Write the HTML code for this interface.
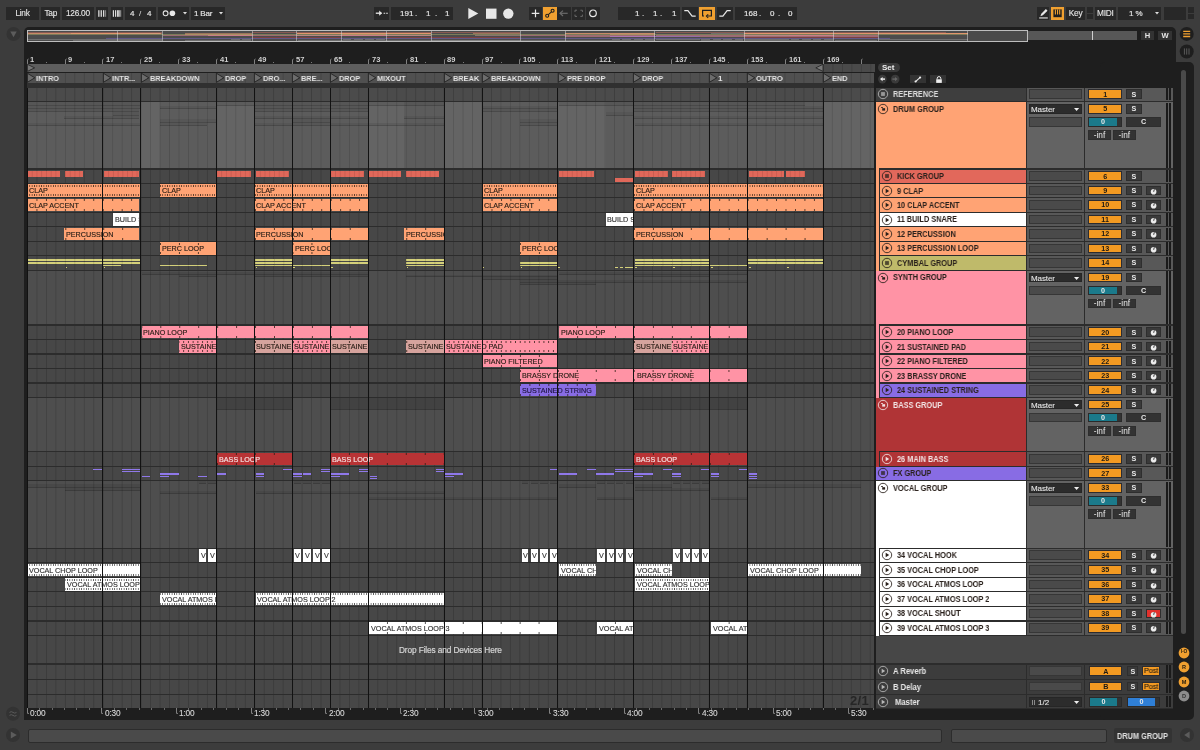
<!DOCTYPE html><html><head><meta charset="utf-8"><style>
*{margin:0;padding:0;box-sizing:border-box}
html,body{width:1200px;height:750px;overflow:hidden;background:#3c3c3c;font-family:"Liberation Sans",sans-serif}
.a{position:absolute}
.t{position:absolute;white-space:nowrap;line-height:1;will-change:transform}
svg{position:absolute;overflow:visible}
</style></head><body><div class="a" style="left:6.00px;top:7.20px;width:33.00px;height:12.40px;background:#282828;"><div class="t" style="top:1.80px;font-size:8.3px;color:#e8e8e8;font-weight:normal;-webkit-text-stroke:0.1px #e8e8e8;left:0.00px;width:33.00px;text-align:center;letter-spacing:-0.25px;">Link</div></div>
<div class="a" style="left:40.50px;top:7.20px;width:19.50px;height:12.40px;background:#282828;"><div class="t" style="top:1.80px;font-size:8.3px;color:#e8e8e8;font-weight:normal;-webkit-text-stroke:0.1px #e8e8e8;left:0.00px;width:19.50px;text-align:center;letter-spacing:-0.25px;">Tap</div></div>
<div class="a" style="left:62.00px;top:7.20px;width:31.80px;height:12.40px;background:#282828;"><div class="t" style="top:1.80px;font-size:8.3px;color:#e8e8e8;font-weight:normal;-webkit-text-stroke:0.1px #e8e8e8;left:0.00px;width:31.80px;text-align:center;letter-spacing:-0.25px;">126.00</div></div>
<div class="a" style="left:96.00px;top:7.20px;width:12.10px;height:12.40px;background:#282828;"><svg style="left:0;top:0" width="12" height="13"><g fill="#dcdcdc"><rect x="2.2" y="3.2" width="1.3" height="6.6"/><rect x="4.6" y="3.2" width="1.3" height="6.6"/><rect x="7" y="3.2" width="1.3" height="6.6"/><rect x="9.2" y="3.2" width="0.9" height="6.6" fill="#999"/></g></svg></div>
<div class="a" style="left:110.60px;top:7.20px;width:12.15px;height:12.40px;background:#282828;"><svg style="left:0;top:0" width="12" height="13"><defs><linearGradient id="ng"><stop offset="0" stop-color="#e0e0e0"/><stop offset="1" stop-color="#707070"/></linearGradient></defs><g fill="#dcdcdc"><rect x="1.8" y="3.2" width="1.2" height="6.6"/><rect x="4" y="3.2" width="1.2" height="6.6"/></g><rect x="6" y="3.2" width="4.3" height="6.6" fill="url(#ng)"/></svg></div>
<div class="a" style="left:125.00px;top:7.20px;width:31.30px;height:12.40px;background:#282828;"><div class="t" style="top:3.00px;font-size:8px;color:#e8e8e8;font-weight:normal;-webkit-text-stroke:0.15px #e8e8e8;left:4.6px;">4</div><div class="t" style="top:3.00px;font-size:8px;color:#e8e8e8;font-weight:normal;left:14.0px;">/</div><div class="t" style="top:3.00px;font-size:8px;color:#e8e8e8;font-weight:normal;-webkit-text-stroke:0.15px #e8e8e8;left:21.5px;">4</div></div>
<div class="a" style="left:158.00px;top:7.20px;width:30.75px;height:12.40px;background:#282828;"><svg style="left:0;top:0" width="31" height="13"><circle cx="7.6" cy="6.3" r="2.4" fill="none" stroke="#e0e0e0" stroke-width="1.1"/><circle cx="14.4" cy="6.3" r="2.8" fill="#e8e8e8"/></svg><svg style="left:24.60px;top:4.80px" width="4.00" height="2.40"><path d="M0 0H4.00L2.00 2.40z" fill="#ddd"/></svg></div>
<div class="a" style="left:190.60px;top:7.20px;width:34.15px;height:12.40px;background:#282828;"><div class="t" style="top:3.00px;font-size:8px;color:#e8e8e8;font-weight:normal;-webkit-text-stroke:0.15px #e8e8e8;left:3.10px;letter-spacing:-0.2px;">1 Bar</div><svg style="left:28.10px;top:4.80px" width="4.00" height="2.40"><path d="M0 0H4.00L2.00 2.40z" fill="#ddd"/></svg></div>
<div class="a" style="left:373.50px;top:7.30px;width:15.25px;height:12.50px;background:#282828;"><svg style="left:0;top:0" width="16" height="13"><path d="M1.8 6.2h5.8" stroke="#e8e8e8" stroke-width="1.3"/><path d="M5.2 3.6L8 6.2 5.2 8.8z" fill="#e8e8e8"/><path d="M9.6 6.2h1.6M12.2 6.2h1.6" stroke="#e8e8e8" stroke-width="1.1"/></svg></div>
<div class="a" style="left:391.25px;top:7.20px;width:61.45px;height:12.40px;background:#282828;"><div class="t" style="top:3.00px;font-size:8px;color:#e8e8e8;font-weight:normal;-webkit-text-stroke:0.15px #e8e8e8;left:8.35px;">191</div><div class="t" style="top:3.00px;font-size:8px;color:#e8e8e8;font-weight:normal;-webkit-text-stroke:0.15px #e8e8e8;left:24.15px;">.</div><div class="t" style="top:3.00px;font-size:8px;color:#e8e8e8;font-weight:normal;-webkit-text-stroke:0.15px #e8e8e8;left:34.65px;">1</div><div class="t" style="top:3.00px;font-size:8px;color:#e8e8e8;font-weight:normal;-webkit-text-stroke:0.15px #e8e8e8;left:43.25px;">.</div><div class="t" style="top:3.00px;font-size:8px;color:#e8e8e8;font-weight:normal;-webkit-text-stroke:0.15px #e8e8e8;left:54.15px;">1</div></div>
<svg style="left:466px;top:6px" width="48" height="16"><path d="M2.3 2.0L12.3 7.5 2.3 13z" fill="#e8e8e8"/><rect x="20" y="2.6" width="10.5" height="10.2" fill="#e8e8e8"/><circle cx="42.3" cy="7.6" r="5.2" fill="#e8e8e8"/></svg>
<div class="a" style="left:529.20px;top:7.30px;width:13.10px;height:12.50px;background:#282828;"><svg style="left:0;top:0" width="13" height="13"><path d="M6.5 2.6v7.6M2.7 6.4h7.6" stroke="#e8e8e8" stroke-width="1.2"/></svg></div>
<div class="a" style="left:543.30px;top:7.30px;width:13.60px;height:12.50px;background:#f0a030;"><svg style="left:0;top:0" width="14" height="13"><circle cx="4.2" cy="8.8" r="1.5" fill="none" stroke="#1e1e1e" stroke-width="1.1"/><circle cx="9.6" cy="3.8" r="1.5" fill="none" stroke="#1e1e1e" stroke-width="1.1"/><path d="M5.3 7.7L8.5 4.9" stroke="#1e1e1e" stroke-width="1.1"/></svg></div>
<div class="a" style="left:557.00px;top:7.30px;width:13.80px;height:12.50px;background:#282828;"><svg style="left:0;top:0" width="14" height="13"><path d="M3.2 6.3h7.5" stroke="#6a6a6a" stroke-width="1.2"/><path d="M6 3.6L3 6.3 6 9" stroke="#6a6a6a" stroke-width="1.2" fill="none"/></svg></div>
<div class="a" style="left:572.00px;top:7.30px;width:13.40px;height:12.50px;background:#282828;"><svg style="left:0;top:0" width="14" height="13"><path d="M3 5V3.2h2M8.4 3.2h2v1.8M10.4 7.6v1.8h-2M5 9.4H3V7.6" stroke="#6a6a6a" stroke-width="1" fill="none"/></svg></div>
<div class="a" style="left:586.00px;top:7.30px;width:14.00px;height:12.50px;background:#282828;"><svg style="left:0;top:0" width="14" height="13"><circle cx="7" cy="6.3" r="3.3" fill="none" stroke="#e8e8e8" stroke-width="1.2"/></svg></div>
<div class="a" style="left:618.00px;top:7.20px;width:62.00px;height:12.40px;background:#282828;"><div class="t" style="top:3.00px;font-size:8px;color:#e8e8e8;font-weight:normal;-webkit-text-stroke:0.15px #e8e8e8;left:17.20px;">1</div><div class="t" style="top:3.00px;font-size:8px;color:#e8e8e8;font-weight:normal;-webkit-text-stroke:0.15px #e8e8e8;left:24.20px;">.</div><div class="t" style="top:3.00px;font-size:8px;color:#e8e8e8;font-weight:normal;-webkit-text-stroke:0.15px #e8e8e8;left:35.40px;">1</div><div class="t" style="top:3.00px;font-size:8px;color:#e8e8e8;font-weight:normal;-webkit-text-stroke:0.15px #e8e8e8;left:41.80px;">.</div><div class="t" style="top:3.00px;font-size:8px;color:#e8e8e8;font-weight:normal;-webkit-text-stroke:0.15px #e8e8e8;left:54.40px;">1</div></div>
<div class="a" style="left:682.00px;top:7.20px;width:16.00px;height:12.40px;background:#282828;"><svg style="left:0;top:0" width="16" height="13"><path d="M2.3 3.6h3.6l4.2 5.6h3.6" stroke="#e8e8e8" stroke-width="1.2" fill="none"/></svg></div>
<div class="a" style="left:699.20px;top:7.20px;width:16.10px;height:12.40px;background:#f0a030;"><svg style="left:0;top:0" width="16" height="13"><path d="M5 9H3.6V3.4h8.8V9H8.6" stroke="#1e1e1e" stroke-width="1.2" fill="none"/><path d="M9.2 7.4L7.4 9.1 9.2 10.8" stroke="#1e1e1e" stroke-width="1.1" fill="none"/></svg></div>
<div class="a" style="left:716.70px;top:7.20px;width:16.30px;height:12.40px;background:#282828;"><svg style="left:0;top:0" width="16" height="13"><path d="M2.3 9.2h3.6l4.2-5.6h3.6" stroke="#e8e8e8" stroke-width="1.2" fill="none"/></svg></div>
<div class="a" style="left:735.00px;top:7.20px;width:62.00px;height:12.40px;background:#282828;"><div class="t" style="top:3.00px;font-size:8px;color:#e8e8e8;font-weight:normal;-webkit-text-stroke:0.15px #e8e8e8;left:8.60px;">168</div><div class="t" style="top:3.00px;font-size:8px;color:#e8e8e8;font-weight:normal;-webkit-text-stroke:0.15px #e8e8e8;left:23.90px;">.</div><div class="t" style="top:3.00px;font-size:8px;color:#e8e8e8;font-weight:normal;-webkit-text-stroke:0.15px #e8e8e8;left:35.00px;">0</div><div class="t" style="top:3.00px;font-size:8px;color:#e8e8e8;font-weight:normal;-webkit-text-stroke:0.15px #e8e8e8;left:43.00px;">.</div><div class="t" style="top:3.00px;font-size:8px;color:#e8e8e8;font-weight:normal;-webkit-text-stroke:0.15px #e8e8e8;left:53.40px;">0</div></div>
<div class="a" style="left:1036.50px;top:7.00px;width:12.70px;height:12.50px;background:#282828;"><svg style="left:0;top:0" width="13" height="13"><path d="M3.4 9.2l0.9-2.5 4.6-4.6 1.6 1.6-4.6 4.6z" fill="#e8e8e8"/><rect x="2.2" y="10.4" width="8.6" height="1.1" fill="#e8e8e8"/></svg></div>
<div class="a" style="left:1050.70px;top:7.00px;width:13.10px;height:12.50px;background:#f0a030;"><svg style="left:0;top:0" width="13" height="13"><rect x="2.4" y="2.4" width="8.3" height="7.8" fill="#1e1e1e"/><path d="M4.4 2.4v5.2M6.55 2.4v5.2M8.7 2.4v5.2" stroke="#f0a030" stroke-width="1.1"/></svg></div>
<div class="a" style="left:1065.70px;top:7.00px;width:19.10px;height:12.50px;background:#282828;"><div class="t" style="top:2.00px;font-size:8.3px;color:#e8e8e8;font-weight:normal;-webkit-text-stroke:0.1px #e8e8e8;left:0.00px;width:19.10px;text-align:center;letter-spacing:-0.25px;">Key</div></div>
<div class="a" style="left:1086.70px;top:7.00px;width:6.30px;height:5.90px;background:#282828;"></div>
<div class="a" style="left:1086.70px;top:13.60px;width:6.30px;height:5.90px;background:#282828;"></div>
<div class="a" style="left:1095.00px;top:7.00px;width:20.50px;height:12.50px;background:#282828;"><div class="t" style="top:2.00px;font-size:8.3px;color:#e8e8e8;font-weight:normal;-webkit-text-stroke:0.1px #e8e8e8;left:0.00px;width:20.50px;text-align:center;letter-spacing:-0.25px;">MIDI</div></div>
<div class="a" style="left:1117.70px;top:7.00px;width:43.50px;height:12.50px;background:#282828;"><div class="t" style="top:3.00px;font-size:8px;color:#e8e8e8;font-weight:normal;-webkit-text-stroke:0.15px #e8e8e8;left:11.60px;letter-spacing:-0.1px;">1 %</div><svg style="left:37.40px;top:4.80px" width="4.00" height="2.40"><path d="M0 0H4.00L2.00 2.40z" fill="#ddd"/></svg></div>
<div class="a" style="left:1163.60px;top:7.00px;width:22.10px;height:12.50px;background:#282828;"></div>
<div class="a" style="left:1188.00px;top:7.00px;width:6.00px;height:5.90px;background:#282828;"></div>
<div class="a" style="left:1188.00px;top:13.60px;width:6.00px;height:5.90px;background:#282828;"></div>
<div class="a" style="left:24.00px;top:27.00px;width:1152.00px;height:693.00px;background:#1e1e1e;border-radius:5px;"></div>
<div class="a" style="left:1100.00px;top:62.00px;width:93.70px;height:658.00px;background:#1e1e1e;border-radius:5px;"></div>
<svg style="left:1178px;top:25px" width="18" height="36"><circle cx="8.7" cy="8.9" r="7" fill="#1e1e1e"/><path d="M5.2 6.3h7M5.2 8.9h7M5.2 11.5h7" stroke="#f0a030" stroke-width="1.3"/><circle cx="8.7" cy="26.5" r="7" fill="#1e1e1e"/><path d="M6.4 23.4v6.2M8.7 23.4v6.2M11 23.4v6.2" stroke="#5a5a5a" stroke-width="1"/></svg>
<svg style="left:5px;top:26px" width="18" height="18"><circle cx="8.5" cy="8" r="7" fill="#333"/><path d="M5.3 5.6h6.4L8.5 11.2z" fill="#5c5c5c"/></svg>
<svg style="left:5px;top:705px" width="18" height="40"><circle cx="8" cy="8.7" r="7" fill="#333"/><path d="M4.5 7.4q1.7-1.5 3.5 0t3.5 0M4.5 10.4q1.7-1.5 3.5 0t3.5 0" stroke="#5a5a5a" stroke-width="1" fill="none"/><circle cx="8" cy="30" r="7" fill="#333"/><path d="M5.8 26.6l6 3.4-6 3.4z" fill="#5c5c5c"/></svg>
<div class="a" style="left:28.00px;top:728.70px;width:914.00px;height:13.90px;background:#4a4a4a;border:1px solid #2c2c2c;border-radius:2px;"></div>
<div class="a" style="left:951.40px;top:728.70px;width:155.20px;height:13.90px;background:#4a4a4a;border:1px solid #2c2c2c;border-radius:2px;"></div>
<div class="a" style="left:1113.90px;top:727.50px;width:58.10px;height:15.90px;background:#333;border-radius:2px;"><div class="t" style="top:4.50px;font-size:8.3px;color:#e0e0e0;font-weight:bold;left:3.60px;transform:scaleX(0.885);transform-origin:0 0;">DRUM GROUP</div></div>
<svg style="left:1179px;top:727px" width="16" height="16"><circle cx="8" cy="8" r="7" fill="#333"/><path d="M10.6 4.6L5.2 8l5.4 3.4z" fill="#5c5c5c"/></svg>
<div class="a" style="left:27.10px;top:87.70px;width:847.40px;height:620.90px;background:#2c2c2c;"></div>
<div class="a" style="left:27.10px;top:87.70px;width:847.40px;height:13.25px;background-color:#4b4b4b;background-image:linear-gradient(to right,#3e3e3e 0,#3e3e3e 1px,transparent 1px);background-size:9.478px 100%;background-position:0.00px 0;"></div>
<div class="a" style="left:27.10px;top:102.15px;width:847.40px;height:66.15px;background-color:#646464;background-image:linear-gradient(to right,#575757 0,#575757 1px,transparent 1px);background-size:9.478px 100%;background-position:0.00px 0;"></div>
<div class="a" style="left:27.10px;top:169.50px;width:847.40px;height:13.30px;background-color:#474747;background-image:linear-gradient(to right,#3b3b3b 0,#3b3b3b 1px,transparent 1px);background-size:9.478px 100%;background-position:0.00px 0;"></div>
<div class="a" style="left:27.10px;top:184.00px;width:847.40px;height:13.25px;background-color:#474747;background-image:linear-gradient(to right,#3b3b3b 0,#3b3b3b 1px,transparent 1px);background-size:9.478px 100%;background-position:0.00px 0;"></div>
<div class="a" style="left:27.10px;top:198.45px;width:847.40px;height:13.25px;background-color:#474747;background-image:linear-gradient(to right,#3b3b3b 0,#3b3b3b 1px,transparent 1px);background-size:9.478px 100%;background-position:0.00px 0;"></div>
<div class="a" style="left:27.10px;top:212.90px;width:847.40px;height:13.30px;background-color:#474747;background-image:linear-gradient(to right,#3b3b3b 0,#3b3b3b 1px,transparent 1px);background-size:9.478px 100%;background-position:0.00px 0;"></div>
<div class="a" style="left:27.10px;top:227.40px;width:847.40px;height:13.25px;background-color:#474747;background-image:linear-gradient(to right,#3b3b3b 0,#3b3b3b 1px,transparent 1px);background-size:9.478px 100%;background-position:0.00px 0;"></div>
<div class="a" style="left:27.10px;top:241.85px;width:847.40px;height:13.30px;background-color:#474747;background-image:linear-gradient(to right,#3b3b3b 0,#3b3b3b 1px,transparent 1px);background-size:9.478px 100%;background-position:0.00px 0;"></div>
<div class="a" style="left:27.10px;top:256.35px;width:847.40px;height:13.45px;background-color:#474747;background-image:linear-gradient(to right,#3b3b3b 0,#3b3b3b 1px,transparent 1px);background-size:9.478px 100%;background-position:0.00px 0;"></div>
<div class="a" style="left:27.10px;top:271.00px;width:847.40px;height:53.40px;background-color:#4e4e4e;background-image:linear-gradient(to right,#424242 0,#424242 1px,transparent 1px);background-size:9.478px 100%;background-position:0.00px 0;"></div>
<div class="a" style="left:27.10px;top:325.60px;width:847.40px;height:13.30px;background-color:#474747;background-image:linear-gradient(to right,#3b3b3b 0,#3b3b3b 1px,transparent 1px);background-size:9.478px 100%;background-position:0.00px 0;"></div>
<div class="a" style="left:27.10px;top:340.10px;width:847.40px;height:13.30px;background-color:#474747;background-image:linear-gradient(to right,#3b3b3b 0,#3b3b3b 1px,transparent 1px);background-size:9.478px 100%;background-position:0.00px 0;"></div>
<div class="a" style="left:27.10px;top:354.60px;width:847.40px;height:13.30px;background-color:#474747;background-image:linear-gradient(to right,#3b3b3b 0,#3b3b3b 1px,transparent 1px);background-size:9.478px 100%;background-position:0.00px 0;"></div>
<div class="a" style="left:27.10px;top:369.10px;width:847.40px;height:13.30px;background-color:#474747;background-image:linear-gradient(to right,#3b3b3b 0,#3b3b3b 1px,transparent 1px);background-size:9.478px 100%;background-position:0.00px 0;"></div>
<div class="a" style="left:27.10px;top:383.60px;width:847.40px;height:13.30px;background-color:#474747;background-image:linear-gradient(to right,#3b3b3b 0,#3b3b3b 1px,transparent 1px);background-size:9.478px 100%;background-position:0.00px 0;"></div>
<div class="a" style="left:27.10px;top:398.10px;width:847.40px;height:53.05px;background-color:#4e4e4e;background-image:linear-gradient(to right,#424242 0,#424242 1px,transparent 1px);background-size:9.478px 100%;background-position:0.00px 0;"></div>
<div class="a" style="left:27.10px;top:452.35px;width:847.40px;height:13.20px;background-color:#474747;background-image:linear-gradient(to right,#3b3b3b 0,#3b3b3b 1px,transparent 1px);background-size:9.478px 100%;background-position:0.00px 0;"></div>
<div class="a" style="left:27.10px;top:466.75px;width:847.40px;height:13.20px;background-color:#474747;background-image:linear-gradient(to right,#3b3b3b 0,#3b3b3b 1px,transparent 1px);background-size:9.478px 100%;background-position:0.00px 0;"></div>
<div class="a" style="left:27.10px;top:481.15px;width:847.40px;height:66.40px;background-color:#4e4e4e;background-image:linear-gradient(to right,#424242 0,#424242 1px,transparent 1px);background-size:9.478px 100%;background-position:0.00px 0;"></div>
<div class="a" style="left:27.10px;top:548.75px;width:847.40px;height:13.35px;background-color:#474747;background-image:linear-gradient(to right,#3b3b3b 0,#3b3b3b 1px,transparent 1px);background-size:9.478px 100%;background-position:0.00px 0;"></div>
<div class="a" style="left:27.10px;top:563.30px;width:847.40px;height:13.35px;background-color:#474747;background-image:linear-gradient(to right,#3b3b3b 0,#3b3b3b 1px,transparent 1px);background-size:9.478px 100%;background-position:0.00px 0;"></div>
<div class="a" style="left:27.10px;top:577.85px;width:847.40px;height:13.35px;background-color:#474747;background-image:linear-gradient(to right,#3b3b3b 0,#3b3b3b 1px,transparent 1px);background-size:9.478px 100%;background-position:0.00px 0;"></div>
<div class="a" style="left:27.10px;top:592.40px;width:847.40px;height:13.35px;background-color:#474747;background-image:linear-gradient(to right,#3b3b3b 0,#3b3b3b 1px,transparent 1px);background-size:9.478px 100%;background-position:0.00px 0;"></div>
<div class="a" style="left:27.10px;top:606.95px;width:847.40px;height:13.35px;background-color:#474747;background-image:linear-gradient(to right,#3b3b3b 0,#3b3b3b 1px,transparent 1px);background-size:9.478px 100%;background-position:0.00px 0;"></div>
<div class="a" style="left:27.10px;top:621.50px;width:847.40px;height:13.35px;background-color:#474747;background-image:linear-gradient(to right,#3b3b3b 0,#3b3b3b 1px,transparent 1px);background-size:9.478px 100%;background-position:0.00px 0;"></div>
<div class="a" style="left:27.10px;top:636.05px;width:847.40px;height:27.35px;background-color:#474747;background-image:linear-gradient(to right,#3b3b3b 0,#3b3b3b 1px,transparent 1px);background-size:9.478px 100%;background-position:0.00px 0;"></div>
<div class="a" style="left:27.10px;top:664.60px;width:847.40px;height:14.20px;background-color:#474747;background-image:linear-gradient(to right,#3b3b3b 0,#3b3b3b 1px,transparent 1px);background-size:9.478px 100%;background-position:0.00px 0;"></div>
<div class="a" style="left:27.10px;top:680.00px;width:847.40px;height:14.00px;background-color:#474747;background-image:linear-gradient(to right,#3b3b3b 0,#3b3b3b 1px,transparent 1px);background-size:9.478px 100%;background-position:0.00px 0;"></div>
<div class="a" style="left:27.10px;top:695.20px;width:847.40px;height:12.80px;background-color:#474747;background-image:linear-gradient(to right,#3b3b3b 0,#3b3b3b 1px,transparent 1px);background-size:9.478px 100%;background-position:0.00px 0;"></div>
<div class="a" style="left:27.10px;top:170.90px;width:32.90px;height:5.90px;background:#e0685a;background-image:linear-gradient(to right,rgba(0,0,0,0.10) 0,rgba(0,0,0,0.10) 1px,transparent 1px);background-size:4.739px 100%;background-position:0.00px 0;"></div>
<div class="a" style="left:65.00px;top:170.90px;width:18.30px;height:5.90px;background:#e0685a;background-image:linear-gradient(to right,rgba(0,0,0,0.10) 0,rgba(0,0,0,0.10) 1px,transparent 1px);background-size:4.739px 100%;background-position:0.01px 0;"></div>
<div class="a" style="left:103.50px;top:170.90px;width:35.80px;height:5.90px;background:#e0685a;background-image:linear-gradient(to right,rgba(0,0,0,0.10) 0,rgba(0,0,0,0.10) 1px,transparent 1px);background-size:4.739px 100%;background-position:4.16px 0;"></div>
<div class="a" style="left:217.20px;top:170.90px;width:33.50px;height:5.90px;background:#e0685a;background-image:linear-gradient(to right,rgba(0,0,0,0.10) 0,rgba(0,0,0,0.10) 1px,transparent 1px);background-size:4.739px 100%;background-position:4.20px 0;"></div>
<div class="a" style="left:255.50px;top:170.90px;width:33.40px;height:5.90px;background:#e0685a;background-image:linear-gradient(to right,rgba(0,0,0,0.10) 0,rgba(0,0,0,0.10) 1px,transparent 1px);background-size:4.739px 100%;background-position:3.81px 0;"></div>
<div class="a" style="left:331.10px;top:170.90px;width:33.00px;height:5.90px;background:#e0685a;background-image:linear-gradient(to right,rgba(0,0,0,0.10) 0,rgba(0,0,0,0.10) 1px,transparent 1px);background-size:4.739px 100%;background-position:4.03px 0;"></div>
<div class="a" style="left:369.30px;top:170.90px;width:32.10px;height:5.90px;background:#e0685a;background-image:linear-gradient(to right,rgba(0,0,0,0.10) 0,rgba(0,0,0,0.10) 1px,transparent 1px);background-size:4.739px 100%;background-position:3.75px 0;"></div>
<div class="a" style="left:406.30px;top:170.90px;width:33.10px;height:5.90px;background:#e0685a;background-image:linear-gradient(to right,rgba(0,0,0,0.10) 0,rgba(0,0,0,0.10) 1px,transparent 1px);background-size:4.739px 100%;background-position:4.66px 0;"></div>
<div class="a" style="left:559.30px;top:170.90px;width:34.80px;height:5.90px;background:#e0685a;background-image:linear-gradient(to right,rgba(0,0,0,0.10) 0,rgba(0,0,0,0.10) 1px,transparent 1px);background-size:4.739px 100%;background-position:3.31px 0;"></div>
<div class="a" style="left:634.60px;top:170.90px;width:33.40px;height:5.90px;background:#e0685a;background-image:linear-gradient(to right,rgba(0,0,0,0.10) 0,rgba(0,0,0,0.10) 1px,transparent 1px);background-size:4.739px 100%;background-position:3.83px 0;"></div>
<div class="a" style="left:672.20px;top:170.90px;width:32.50px;height:5.90px;background:#e0685a;background-image:linear-gradient(to right,rgba(0,0,0,0.10) 0,rgba(0,0,0,0.10) 1px,transparent 1px);background-size:4.739px 100%;background-position:4.14px 0;"></div>
<div class="a" style="left:748.70px;top:170.90px;width:35.40px;height:5.90px;background:#e0685a;background-image:linear-gradient(to right,rgba(0,0,0,0.10) 0,rgba(0,0,0,0.10) 1px,transparent 1px);background-size:4.739px 100%;background-position:3.47px 0;"></div>
<div class="a" style="left:786.30px;top:170.90px;width:18.70px;height:5.90px;background:#e0685a;background-image:linear-gradient(to right,rgba(0,0,0,0.10) 0,rgba(0,0,0,0.10) 1px,transparent 1px);background-size:4.739px 100%;background-position:3.78px 0;"></div>
<div class="a" style="left:614.80px;top:177.90px;width:18.70px;height:4.20px;background:#e0685a;"></div>
<div class="a" style="left:27.10px;top:258.60px;width:113.60px;height:2.00px;background:#d4d07a;background-image:linear-gradient(to right,rgba(0,0,0,0.12) 0,rgba(0,0,0,0.12) 1px,transparent 1px);background-size:9.478px 100%;background-position:0.00px 0;"></div>
<div class="a" style="left:27.10px;top:261.60px;width:113.60px;height:2.00px;background:#d4d07a;background-image:linear-gradient(to right,rgba(0,0,0,0.12) 0,rgba(0,0,0,0.12) 1px,transparent 1px);background-size:9.478px 100%;background-position:0.00px 0;"></div>
<div class="a" style="left:103.00px;top:264.50px;width:18.30px;height:1.40px;background:#d4d07a;background-image:linear-gradient(to right,rgba(0,0,0,0.12) 0,rgba(0,0,0,0.12) 1px,transparent 1px);background-size:9.478px 100%;background-position:9.40px 0;"></div>
<div class="a" style="left:160.40px;top:264.50px;width:46.60px;height:1.40px;background:#d4d07a;background-image:linear-gradient(to right,rgba(0,0,0,0.12) 0,rgba(0,0,0,0.12) 1px,transparent 1px);background-size:9.478px 100%;background-position:8.87px 0;"></div>
<div class="a" style="left:254.60px;top:258.60px;width:37.90px;height:2.00px;background:#d4d07a;background-image:linear-gradient(to right,rgba(0,0,0,0.12) 0,rgba(0,0,0,0.12) 1px,transparent 1px);background-size:9.478px 100%;background-position:9.45px 0;"></div>
<div class="a" style="left:254.60px;top:261.60px;width:37.90px;height:2.00px;background:#d4d07a;background-image:linear-gradient(to right,rgba(0,0,0,0.12) 0,rgba(0,0,0,0.12) 1px,transparent 1px);background-size:9.478px 100%;background-position:9.45px 0;"></div>
<div class="a" style="left:254.60px;top:264.50px;width:37.90px;height:1.40px;background:#d4d07a;background-image:linear-gradient(to right,rgba(0,0,0,0.12) 0,rgba(0,0,0,0.12) 1px,transparent 1px);background-size:9.478px 100%;background-position:9.45px 0;"></div>
<div class="a" style="left:293.00px;top:264.50px;width:37.40px;height:1.40px;background:#d4d07a;background-image:linear-gradient(to right,rgba(0,0,0,0.12) 0,rgba(0,0,0,0.12) 1px,transparent 1px);background-size:9.478px 100%;background-position:8.96px 0;"></div>
<div class="a" style="left:330.40px;top:258.60px;width:37.90px;height:2.00px;background:#d4d07a;background-image:linear-gradient(to right,rgba(0,0,0,0.12) 0,rgba(0,0,0,0.12) 1px,transparent 1px);background-size:9.478px 100%;background-position:9.47px 0;"></div>
<div class="a" style="left:330.40px;top:261.60px;width:37.90px;height:2.00px;background:#d4d07a;background-image:linear-gradient(to right,rgba(0,0,0,0.12) 0,rgba(0,0,0,0.12) 1px,transparent 1px);background-size:9.478px 100%;background-position:9.47px 0;"></div>
<div class="a" style="left:406.20px;top:258.60px;width:37.90px;height:2.00px;background:#d4d07a;background-image:linear-gradient(to right,rgba(0,0,0,0.12) 0,rgba(0,0,0,0.12) 1px,transparent 1px);background-size:9.478px 100%;background-position:0.02px 0;"></div>
<div class="a" style="left:406.20px;top:261.60px;width:37.90px;height:2.00px;background:#d4d07a;background-image:linear-gradient(to right,rgba(0,0,0,0.12) 0,rgba(0,0,0,0.12) 1px,transparent 1px);background-size:9.478px 100%;background-position:0.02px 0;"></div>
<div class="a" style="left:406.20px;top:264.50px;width:37.90px;height:1.40px;background:#d4d07a;background-image:linear-gradient(to right,rgba(0,0,0,0.12) 0,rgba(0,0,0,0.12) 1px,transparent 1px);background-size:9.478px 100%;background-position:0.02px 0;"></div>
<div class="a" style="left:520.00px;top:261.60px;width:37.80px;height:2.00px;background:#d4d07a;background-image:linear-gradient(to right,rgba(0,0,0,0.12) 0,rgba(0,0,0,0.12) 1px,transparent 1px);background-size:9.478px 100%;background-position:9.43px 0;"></div>
<div class="a" style="left:520.00px;top:264.50px;width:37.80px;height:1.40px;background:#d4d07a;background-image:linear-gradient(to right,rgba(0,0,0,0.12) 0,rgba(0,0,0,0.12) 1px,transparent 1px);background-size:9.478px 100%;background-position:9.43px 0;"></div>
<div class="a" style="left:634.60px;top:258.60px;width:75.60px;height:2.00px;background:#d4d07a;background-image:linear-gradient(to right,rgba(0,0,0,0.12) 0,rgba(0,0,0,0.12) 1px,transparent 1px);background-size:9.478px 100%;background-position:8.57px 0;"></div>
<div class="a" style="left:634.60px;top:261.60px;width:75.60px;height:2.00px;background:#d4d07a;background-image:linear-gradient(to right,rgba(0,0,0,0.12) 0,rgba(0,0,0,0.12) 1px,transparent 1px);background-size:9.478px 100%;background-position:8.57px 0;"></div>
<div class="a" style="left:634.60px;top:264.50px;width:75.60px;height:1.40px;background:#d4d07a;background-image:linear-gradient(to right,rgba(0,0,0,0.12) 0,rgba(0,0,0,0.12) 1px,transparent 1px);background-size:9.478px 100%;background-position:8.57px 0;"></div>
<div class="a" style="left:710.20px;top:264.50px;width:37.80px;height:1.40px;background:#d4d07a;background-image:linear-gradient(to right,rgba(0,0,0,0.12) 0,rgba(0,0,0,0.12) 1px,transparent 1px);background-size:9.478px 100%;background-position:8.79px 0;"></div>
<div class="a" style="left:748.00px;top:258.60px;width:75.20px;height:2.00px;background:#d4d07a;background-image:linear-gradient(to right,rgba(0,0,0,0.12) 0,rgba(0,0,0,0.12) 1px,transparent 1px);background-size:9.478px 100%;background-position:8.91px 0;"></div>
<div class="a" style="left:748.00px;top:261.60px;width:75.20px;height:2.00px;background:#d4d07a;background-image:linear-gradient(to right,rgba(0,0,0,0.12) 0,rgba(0,0,0,0.12) 1px,transparent 1px);background-size:9.478px 100%;background-position:8.91px 0;"></div>
<div class="a" style="left:65.90px;top:266.80px;width:1.60px;height:1.50px;background:#d4d07a;"></div>
<div class="a" style="left:103.50px;top:266.80px;width:1.60px;height:1.50px;background:#d4d07a;"></div>
<div class="a" style="left:255.50px;top:266.80px;width:1.60px;height:1.50px;background:#d4d07a;"></div>
<div class="a" style="left:293.00px;top:266.80px;width:1.60px;height:1.50px;background:#d4d07a;"></div>
<div class="a" style="left:331.00px;top:266.80px;width:1.60px;height:1.50px;background:#d4d07a;"></div>
<div class="a" style="left:406.50px;top:266.80px;width:1.60px;height:1.50px;background:#d4d07a;"></div>
<div class="a" style="left:482.00px;top:266.80px;width:1.60px;height:1.50px;background:#d4d07a;"></div>
<div class="a" style="left:520.50px;top:266.80px;width:1.60px;height:1.50px;background:#d4d07a;"></div>
<div class="a" style="left:558.00px;top:266.80px;width:1.60px;height:1.50px;background:#d4d07a;"></div>
<div class="a" style="left:635.00px;top:266.80px;width:1.60px;height:1.50px;background:#d4d07a;"></div>
<div class="a" style="left:673.00px;top:266.80px;width:1.60px;height:1.50px;background:#d4d07a;"></div>
<div class="a" style="left:711.00px;top:266.80px;width:1.60px;height:1.50px;background:#d4d07a;"></div>
<div class="a" style="left:749.00px;top:266.80px;width:1.60px;height:1.50px;background:#d4d07a;"></div>
<div class="a" style="left:787.00px;top:266.80px;width:1.60px;height:1.50px;background:#d4d07a;"></div>
<div class="a" style="left:615.00px;top:266.80px;width:3.00px;height:1.50px;background:#d4d07a;"></div>
<div class="a" style="left:620.00px;top:266.80px;width:2.50px;height:1.50px;background:#d4d07a;"></div>
<div class="a" style="left:625.00px;top:266.80px;width:8.00px;height:1.50px;background:#d4d07a;"></div>
<div class="a" style="left:93.40px;top:468.50px;width:9.20px;height:1.60px;background:#8f78ea;"></div>
<div class="a" style="left:121.80px;top:468.50px;width:18.90px;height:1.60px;background:#8f78ea;"></div>
<div class="a" style="left:121.80px;top:470.90px;width:18.90px;height:1.60px;background:#8f78ea;"></div>
<div class="a" style="left:142.00px;top:475.50px;width:8.00px;height:1.60px;background:#8f78ea;"></div>
<div class="a" style="left:160.40px;top:473.20px;width:18.30px;height:1.60px;background:#8f78ea;"></div>
<div class="a" style="left:160.40px;top:475.50px;width:8.40px;height:1.60px;background:#8f78ea;"></div>
<div class="a" style="left:197.60px;top:475.50px;width:9.60px;height:1.60px;background:#8f78ea;"></div>
<div class="a" style="left:217.00px;top:473.20px;width:9.00px;height:1.60px;background:#8f78ea;"></div>
<div class="a" style="left:255.50px;top:473.20px;width:8.50px;height:1.60px;background:#8f78ea;"></div>
<div class="a" style="left:255.50px;top:475.50px;width:8.50px;height:1.60px;background:#8f78ea;"></div>
<div class="a" style="left:283.40px;top:468.50px;width:8.80px;height:1.60px;background:#8f78ea;"></div>
<div class="a" style="left:293.00px;top:473.20px;width:9.00px;height:1.60px;background:#8f78ea;"></div>
<div class="a" style="left:293.00px;top:475.50px;width:9.00px;height:1.60px;background:#8f78ea;"></div>
<div class="a" style="left:302.70px;top:473.20px;width:8.30px;height:1.60px;background:#8f78ea;"></div>
<div class="a" style="left:321.40px;top:468.50px;width:8.80px;height:1.60px;background:#8f78ea;"></div>
<div class="a" style="left:321.40px;top:470.90px;width:8.80px;height:1.60px;background:#8f78ea;"></div>
<div class="a" style="left:331.00px;top:473.20px;width:9.00px;height:1.60px;background:#8f78ea;"></div>
<div class="a" style="left:331.00px;top:475.50px;width:9.00px;height:1.60px;background:#8f78ea;"></div>
<div class="a" style="left:340.00px;top:473.20px;width:9.00px;height:1.60px;background:#8f78ea;"></div>
<div class="a" style="left:359.00px;top:468.50px;width:9.20px;height:1.60px;background:#8f78ea;"></div>
<div class="a" style="left:359.00px;top:470.90px;width:9.20px;height:1.60px;background:#8f78ea;"></div>
<div class="a" style="left:369.60px;top:475.50px;width:7.70px;height:1.60px;background:#8f78ea;"></div>
<div class="a" style="left:369.60px;top:477.70px;width:7.70px;height:1.60px;background:#8f78ea;"></div>
<div class="a" style="left:435.80px;top:468.50px;width:8.20px;height:1.60px;background:#8f78ea;"></div>
<div class="a" style="left:435.80px;top:470.90px;width:8.20px;height:1.60px;background:#8f78ea;"></div>
<div class="a" style="left:445.00px;top:473.20px;width:9.00px;height:1.60px;background:#8f78ea;"></div>
<div class="a" style="left:445.00px;top:475.50px;width:9.00px;height:1.60px;background:#8f78ea;"></div>
<div class="a" style="left:454.00px;top:473.20px;width:9.00px;height:1.60px;background:#8f78ea;"></div>
<div class="a" style="left:549.50px;top:468.50px;width:8.30px;height:1.60px;background:#8f78ea;"></div>
<div class="a" style="left:559.30px;top:473.20px;width:17.70px;height:1.60px;background:#8f78ea;"></div>
<div class="a" style="left:587.20px;top:468.50px;width:8.80px;height:1.60px;background:#8f78ea;"></div>
<div class="a" style="left:596.40px;top:473.20px;width:18.00px;height:1.60px;background:#8f78ea;"></div>
<div class="a" style="left:615.00px;top:468.50px;width:18.00px;height:1.60px;background:#8f78ea;"></div>
<div class="a" style="left:615.00px;top:470.90px;width:18.00px;height:1.60px;background:#8f78ea;"></div>
<div class="a" style="left:634.00px;top:473.20px;width:9.00px;height:1.60px;background:#8f78ea;"></div>
<div class="a" style="left:634.00px;top:475.50px;width:9.00px;height:1.60px;background:#8f78ea;"></div>
<div class="a" style="left:643.00px;top:473.20px;width:10.00px;height:1.60px;background:#8f78ea;"></div>
<div class="a" style="left:663.00px;top:468.50px;width:8.70px;height:1.60px;background:#8f78ea;"></div>
<div class="a" style="left:672.00px;top:473.20px;width:9.00px;height:1.60px;background:#8f78ea;"></div>
<div class="a" style="left:672.00px;top:475.50px;width:9.00px;height:1.60px;background:#8f78ea;"></div>
<div class="a" style="left:700.50px;top:468.50px;width:9.70px;height:1.60px;background:#8f78ea;"></div>
<div class="a" style="left:711.00px;top:473.20px;width:8.00px;height:1.60px;background:#8f78ea;"></div>
<div class="a" style="left:711.00px;top:475.50px;width:8.00px;height:1.60px;background:#8f78ea;"></div>
<div class="a" style="left:739.00px;top:468.50px;width:8.40px;height:1.60px;background:#8f78ea;"></div>
<div class="a" style="left:749.00px;top:473.20px;width:8.00px;height:1.60px;background:#8f78ea;"></div>
<div class="a" style="left:749.00px;top:475.50px;width:8.00px;height:1.60px;background:#8f78ea;"></div>
<div class="a" style="left:749.00px;top:477.70px;width:8.00px;height:1.60px;background:#8f78ea;"></div>
<div class="a" style="left:27.10px;top:184.20px;width:113.70px;height:12.65px;background:#ffa374;overflow:hidden;"><div class="t" style="top:2.80px;font-size:7.2px;color:#2c2018;font-weight:normal;-webkit-text-stroke:0.15px #2c2018;left:1.90px;">CLAP</div></div>
<div class="a" style="left:27.10px;top:184.80px;width:113.70px;height:11.55px;background-image:linear-gradient(to right,rgba(45,30,20,0.8) 0,rgba(45,30,20,0.8) 1px,transparent 1px),linear-gradient(to right,rgba(45,30,20,0.8) 0,rgba(45,30,20,0.8) 1px,transparent 1px);background-size:2.369px 2.1px,2.369px 2.1px;background-repeat:repeat-x;background-position:0.00px 0,0.00px 100%;"></div>
<div class="a" style="left:159.80px;top:184.20px;width:56.90px;height:12.65px;background:#ffa374;overflow:hidden;"><div class="t" style="top:2.80px;font-size:7.2px;color:#2c2018;font-weight:normal;-webkit-text-stroke:0.15px #2c2018;left:1.90px;">CLAP</div></div>
<div class="a" style="left:159.80px;top:184.80px;width:56.90px;height:11.55px;background-image:linear-gradient(to right,rgba(45,30,20,0.8) 0,rgba(45,30,20,0.8) 1px,transparent 1px),linear-gradient(to right,rgba(45,30,20,0.8) 0,rgba(45,30,20,0.8) 1px,transparent 1px);background-size:2.369px 2.1px,2.369px 2.1px;background-repeat:repeat-x;background-position:2.36px 0,2.36px 100%;"></div>
<div class="a" style="left:254.60px;top:184.20px;width:113.70px;height:12.65px;background:#ffa374;overflow:hidden;"><div class="t" style="top:2.80px;font-size:7.2px;color:#2c2018;font-weight:normal;-webkit-text-stroke:0.15px #2c2018;left:1.90px;">CLAP</div></div>
<div class="a" style="left:254.60px;top:184.80px;width:113.70px;height:11.55px;background-image:linear-gradient(to right,rgba(45,30,20,0.8) 0,rgba(45,30,20,0.8) 1px,transparent 1px),linear-gradient(to right,rgba(45,30,20,0.8) 0,rgba(45,30,20,0.8) 1px,transparent 1px);background-size:2.369px 2.1px,2.369px 2.1px;background-repeat:repeat-x;background-position:2.34px 0,2.34px 100%;"></div>
<div class="a" style="left:482.00px;top:184.20px;width:75.80px;height:12.65px;background:#ffa374;overflow:hidden;"><div class="t" style="top:2.80px;font-size:7.2px;color:#2c2018;font-weight:normal;-webkit-text-stroke:0.15px #2c2018;left:1.90px;">CLAP</div></div>
<div class="a" style="left:482.00px;top:184.80px;width:75.80px;height:11.55px;background-image:linear-gradient(to right,rgba(45,30,20,0.8) 0,rgba(45,30,20,0.8) 1px,transparent 1px),linear-gradient(to right,rgba(45,30,20,0.8) 0,rgba(45,30,20,0.8) 1px,transparent 1px);background-size:2.369px 2.1px,2.369px 2.1px;background-repeat:repeat-x;background-position:0.04px 0,0.04px 100%;"></div>
<div class="a" style="left:633.70px;top:184.20px;width:189.50px;height:12.65px;background:#ffa374;overflow:hidden;"><div class="t" style="top:2.80px;font-size:7.2px;color:#2c2018;font-weight:normal;-webkit-text-stroke:0.15px #2c2018;left:1.90px;">CLAP</div></div>
<div class="a" style="left:633.70px;top:184.80px;width:189.50px;height:11.55px;background-image:linear-gradient(to right,rgba(45,30,20,0.8) 0,rgba(45,30,20,0.8) 1px,transparent 1px),linear-gradient(to right,rgba(45,30,20,0.8) 0,rgba(45,30,20,0.8) 1px,transparent 1px);background-size:2.369px 2.1px,2.369px 2.1px;background-repeat:repeat-x;background-position:2.36px 0,2.36px 100%;"></div>
<div class="a" style="left:27.10px;top:198.65px;width:111.90px;height:12.65px;background:#ffa374;overflow:hidden;"><div class="t" style="top:3.35px;font-size:7.2px;color:#2c2018;font-weight:normal;-webkit-text-stroke:0.15px #2c2018;left:1.90px;">CLAP ACCENT</div></div>
<div class="a" style="left:27.10px;top:199.25px;width:111.90px;height:11.55px;background-image:linear-gradient(to right,rgba(45,30,20,0.8) 0,rgba(45,30,20,0.8) 1px,transparent 1px),linear-gradient(to right,rgba(45,30,20,0.8) 0,rgba(45,30,20,0.8) 1px,transparent 1px);background-size:9.478px 2.1px,9.478px 2.1px;background-repeat:repeat-x;background-position:0.00px 0,0.00px 100%;"></div>
<div class="a" style="left:254.60px;top:198.65px;width:113.70px;height:12.65px;background:#ffa374;overflow:hidden;"><div class="t" style="top:3.35px;font-size:7.2px;color:#2c2018;font-weight:normal;-webkit-text-stroke:0.15px #2c2018;left:1.90px;">CLAP ACCENT</div></div>
<div class="a" style="left:254.60px;top:199.25px;width:113.70px;height:11.55px;background-image:linear-gradient(to right,rgba(45,30,20,0.8) 0,rgba(45,30,20,0.8) 1px,transparent 1px),linear-gradient(to right,rgba(45,30,20,0.8) 0,rgba(45,30,20,0.8) 1px,transparent 1px);background-size:9.478px 2.1px,9.478px 2.1px;background-repeat:repeat-x;background-position:9.45px 0,9.45px 100%;"></div>
<div class="a" style="left:482.00px;top:198.65px;width:75.80px;height:12.65px;background:#ffa374;overflow:hidden;"><div class="t" style="top:3.35px;font-size:7.2px;color:#2c2018;font-weight:normal;-webkit-text-stroke:0.15px #2c2018;left:1.90px;">CLAP ACCENT</div></div>
<div class="a" style="left:482.00px;top:199.25px;width:75.80px;height:11.55px;background-image:linear-gradient(to right,rgba(45,30,20,0.8) 0,rgba(45,30,20,0.8) 1px,transparent 1px),linear-gradient(to right,rgba(45,30,20,0.8) 0,rgba(45,30,20,0.8) 1px,transparent 1px);background-size:9.478px 2.1px,9.478px 2.1px;background-repeat:repeat-x;background-position:0.04px 0,0.04px 100%;"></div>
<div class="a" style="left:633.70px;top:198.65px;width:189.50px;height:12.65px;background:#ffa374;overflow:hidden;"><div class="t" style="top:3.35px;font-size:7.2px;color:#2c2018;font-weight:normal;-webkit-text-stroke:0.15px #2c2018;left:1.90px;">CLAP ACCENT</div></div>
<div class="a" style="left:633.70px;top:199.25px;width:189.50px;height:11.55px;background-image:linear-gradient(to right,rgba(45,30,20,0.8) 0,rgba(45,30,20,0.8) 1px,transparent 1px),linear-gradient(to right,rgba(45,30,20,0.8) 0,rgba(45,30,20,0.8) 1px,transparent 1px);background-size:9.478px 2.1px,9.478px 2.1px;background-repeat:repeat-x;background-position:9.47px 0,9.47px 100%;"></div>
<div class="a" style="left:112.70px;top:213.10px;width:26.60px;height:12.70px;background:#ffffff;overflow:hidden;"><div class="t" style="top:2.90px;font-size:7.2px;color:#333;font-weight:normal;-webkit-text-stroke:0.15px #333;left:1.90px;">BUILD SNARE</div></div>
<div class="a" style="left:605.60px;top:213.10px;width:27.90px;height:12.70px;background:#ffffff;overflow:hidden;"><div class="t" style="top:2.90px;font-size:7.2px;color:#333;font-weight:normal;-webkit-text-stroke:0.15px #333;left:1.90px;">BUILD SNARE</div></div>
<div class="a" style="left:63.70px;top:227.60px;width:75.60px;height:12.65px;background:#ffa374;overflow:hidden;"><div class="t" style="top:3.40px;font-size:7.2px;color:#2c2018;font-weight:normal;-webkit-text-stroke:0.15px #2c2018;left:1.90px;">PERCUSSION</div></div>
<div class="a" style="left:63.70px;top:228.20px;width:75.60px;height:11.55px;background-image:linear-gradient(to right,rgba(45,30,20,0.8) 0,rgba(45,30,20,0.8) 1px,transparent 1px),linear-gradient(to right,rgba(45,30,20,0.8) 0,rgba(45,30,20,0.8) 1px,transparent 1px);background-size:18.956px 2.1px,18.956px 2.1px;background-repeat:repeat-x;background-position:1.31px 0,1.31px 100%;"></div>
<div class="a" style="left:254.60px;top:227.60px;width:113.70px;height:12.65px;background:#ffa374;overflow:hidden;"><div class="t" style="top:3.40px;font-size:7.2px;color:#2c2018;font-weight:normal;-webkit-text-stroke:0.15px #2c2018;left:1.90px;">PERCUSSION</div></div>
<div class="a" style="left:254.60px;top:228.20px;width:113.70px;height:11.55px;background-image:linear-gradient(to right,rgba(45,30,20,0.8) 0,rgba(45,30,20,0.8) 1px,transparent 1px),linear-gradient(to right,rgba(45,30,20,0.8) 0,rgba(45,30,20,0.8) 1px,transparent 1px);background-size:18.956px 2.1px,18.956px 2.1px;background-repeat:repeat-x;background-position:18.93px 0,18.93px 100%;"></div>
<div class="a" style="left:404.00px;top:227.60px;width:40.10px;height:12.65px;background:#ffa374;overflow:hidden;"><div class="t" style="top:3.40px;font-size:7.2px;color:#2c2018;font-weight:normal;-webkit-text-stroke:0.15px #2c2018;left:1.90px;">PERCUSSION</div></div>
<div class="a" style="left:404.00px;top:228.20px;width:40.10px;height:11.55px;background-image:linear-gradient(to right,rgba(45,30,20,0.8) 0,rgba(45,30,20,0.8) 1px,transparent 1px),linear-gradient(to right,rgba(45,30,20,0.8) 0,rgba(45,30,20,0.8) 1px,transparent 1px);background-size:18.956px 2.1px,18.956px 2.1px;background-repeat:repeat-x;background-position:2.22px 0,2.22px 100%;"></div>
<div class="a" style="left:633.70px;top:227.60px;width:189.50px;height:12.65px;background:#ffa374;overflow:hidden;"><div class="t" style="top:3.40px;font-size:7.2px;color:#2c2018;font-weight:normal;-webkit-text-stroke:0.15px #2c2018;left:1.90px;">PERCUSSION</div></div>
<div class="a" style="left:633.70px;top:228.20px;width:189.50px;height:11.55px;background-image:linear-gradient(to right,rgba(45,30,20,0.8) 0,rgba(45,30,20,0.8) 1px,transparent 1px),linear-gradient(to right,rgba(45,30,20,0.8) 0,rgba(45,30,20,0.8) 1px,transparent 1px);background-size:18.956px 2.1px,18.956px 2.1px;background-repeat:repeat-x;background-position:18.95px 0,18.95px 100%;"></div>
<div class="a" style="left:159.80px;top:242.05px;width:56.90px;height:12.70px;background:#ffa374;overflow:hidden;"><div class="t" style="top:2.95px;font-size:7.2px;color:#2c2018;font-weight:normal;-webkit-text-stroke:0.15px #2c2018;left:1.90px;">PERC LOOP</div></div>
<div class="a" style="left:159.80px;top:242.65px;width:56.90px;height:11.60px;background-image:linear-gradient(to right,rgba(45,30,20,0.8) 0,rgba(45,30,20,0.8) 1px,transparent 1px),linear-gradient(to right,rgba(45,30,20,0.8) 0,rgba(45,30,20,0.8) 1px,transparent 1px);background-size:18.956px 2.1px,18.956px 2.1px;background-repeat:repeat-x;background-position:18.95px 0,18.95px 100%;"></div>
<div class="a" style="left:293.00px;top:242.05px;width:37.20px;height:12.70px;background:#ffa374;overflow:hidden;"><div class="t" style="top:2.95px;font-size:7.2px;color:#2c2018;font-weight:normal;-webkit-text-stroke:0.15px #2c2018;left:1.90px;">PERC LOOP</div></div>
<div class="a" style="left:293.00px;top:242.65px;width:37.20px;height:11.60px;background-image:linear-gradient(to right,rgba(45,30,20,0.8) 0,rgba(45,30,20,0.8) 1px,transparent 1px),linear-gradient(to right,rgba(45,30,20,0.8) 0,rgba(45,30,20,0.8) 1px,transparent 1px);background-size:18.956px 2.1px,18.956px 2.1px;background-repeat:repeat-x;background-position:18.44px 0,18.44px 100%;"></div>
<div class="a" style="left:520.00px;top:242.05px;width:37.80px;height:12.70px;background:#ffa374;overflow:hidden;"><div class="t" style="top:2.95px;font-size:7.2px;color:#2c2018;font-weight:normal;-webkit-text-stroke:0.15px #2c2018;left:1.90px;">PERC LOOP</div></div>
<div class="a" style="left:520.00px;top:242.65px;width:37.80px;height:11.60px;background-image:linear-gradient(to right,rgba(45,30,20,0.8) 0,rgba(45,30,20,0.8) 1px,transparent 1px),linear-gradient(to right,rgba(45,30,20,0.8) 0,rgba(45,30,20,0.8) 1px,transparent 1px);background-size:18.956px 2.1px,18.956px 2.1px;background-repeat:repeat-x;background-position:18.91px 0,18.91px 100%;"></div>
<div class="a" style="left:141.50px;top:325.80px;width:226.80px;height:12.70px;background:#ff93a5;overflow:hidden;"><div class="t" style="top:3.20px;font-size:7.2px;color:#2c2018;font-weight:normal;-webkit-text-stroke:0.15px #2c2018;left:1.90px;">PIANO LOOP</div></div>
<div class="a" style="left:141.50px;top:326.40px;width:226.80px;height:11.60px;background-image:linear-gradient(to right,rgba(45,30,20,0.8) 0,rgba(45,30,20,0.8) 1px,transparent 1px),linear-gradient(to right,rgba(45,30,20,0.8) 0,rgba(45,30,20,0.8) 1px,transparent 1px);background-size:18.956px 2.1px,18.956px 2.1px;background-repeat:repeat-x;background-position:18.29px 0,18.29px 100%;"></div>
<div class="a" style="left:558.70px;top:325.80px;width:188.70px;height:12.70px;background:#ff93a5;overflow:hidden;"><div class="t" style="top:3.20px;font-size:7.2px;color:#2c2018;font-weight:normal;-webkit-text-stroke:0.15px #2c2018;left:1.90px;">PIANO LOOP</div></div>
<div class="a" style="left:558.70px;top:326.40px;width:188.70px;height:11.60px;background-image:linear-gradient(to right,rgba(45,30,20,0.8) 0,rgba(45,30,20,0.8) 1px,transparent 1px),linear-gradient(to right,rgba(45,30,20,0.8) 0,rgba(45,30,20,0.8) 1px,transparent 1px);background-size:18.956px 2.1px,18.956px 2.1px;background-repeat:repeat-x;background-position:18.12px 0,18.12px 100%;"></div>
<div class="a" style="left:179.30px;top:340.30px;width:37.00px;height:12.70px;background:#ff93a5;overflow:hidden;"><div class="t" style="top:2.70px;font-size:7.2px;color:#2c2018;font-weight:normal;-webkit-text-stroke:0.15px #2c2018;left:1.90px;">SUSTAINED PAD</div></div>
<div class="a" style="left:179.30px;top:340.90px;width:37.00px;height:11.60px;background-image:linear-gradient(to right,rgba(45,30,20,0.8) 0,rgba(45,30,20,0.8) 1px,transparent 1px),linear-gradient(to right,rgba(45,30,20,0.8) 0,rgba(45,30,20,0.8) 1px,transparent 1px);background-size:4.739px 2.1px,4.739px 2.1px;background-repeat:repeat-x;background-position:4.19px 0,4.19px 100%;"></div>
<div class="a" style="left:254.60px;top:340.30px;width:37.90px;height:12.70px;background:#d6a39d;overflow:hidden;"><div class="t" style="top:2.70px;font-size:7.2px;color:#2c2018;font-weight:normal;-webkit-text-stroke:0.15px #2c2018;left:1.90px;">SUSTAINED PAD</div></div>
<div class="a" style="left:254.60px;top:340.90px;width:37.90px;height:11.60px;background-image:linear-gradient(to right,rgba(45,30,20,0.8) 0,rgba(45,30,20,0.8) 1px,transparent 1px),linear-gradient(to right,rgba(45,30,20,0.8) 0,rgba(45,30,20,0.8) 1px,transparent 1px);background-size:18.956px 2.1px,18.956px 2.1px;background-repeat:repeat-x;background-position:18.93px 0,18.93px 100%;"></div>
<div class="a" style="left:292.50px;top:340.30px;width:37.70px;height:12.70px;background:#ff93a5;overflow:hidden;"><div class="t" style="top:2.70px;font-size:7.2px;color:#2c2018;font-weight:normal;-webkit-text-stroke:0.15px #2c2018;left:1.90px;">SUSTAINED PAD</div></div>
<div class="a" style="left:292.50px;top:340.90px;width:37.70px;height:11.60px;background-image:linear-gradient(to right,rgba(45,30,20,0.8) 0,rgba(45,30,20,0.8) 1px,transparent 1px),linear-gradient(to right,rgba(45,30,20,0.8) 0,rgba(45,30,20,0.8) 1px,transparent 1px);background-size:4.739px 2.1px,4.739px 2.1px;background-repeat:repeat-x;background-position:4.72px 0,4.72px 100%;"></div>
<div class="a" style="left:330.40px;top:340.30px;width:37.90px;height:12.70px;background:#d6a39d;overflow:hidden;"><div class="t" style="top:2.70px;font-size:7.2px;color:#2c2018;font-weight:normal;-webkit-text-stroke:0.15px #2c2018;left:1.90px;">SUSTAINED PAD</div></div>
<div class="a" style="left:330.40px;top:340.90px;width:37.90px;height:11.60px;background-image:linear-gradient(to right,rgba(45,30,20,0.8) 0,rgba(45,30,20,0.8) 1px,transparent 1px),linear-gradient(to right,rgba(45,30,20,0.8) 0,rgba(45,30,20,0.8) 1px,transparent 1px);background-size:18.956px 2.1px,18.956px 2.1px;background-repeat:repeat-x;background-position:18.95px 0,18.95px 100%;"></div>
<div class="a" style="left:406.00px;top:340.30px;width:38.10px;height:12.70px;background:#d6a39d;overflow:hidden;"><div class="t" style="top:2.70px;font-size:7.2px;color:#2c2018;font-weight:normal;-webkit-text-stroke:0.15px #2c2018;left:1.90px;">SUSTAINED PAD</div></div>
<div class="a" style="left:406.00px;top:340.90px;width:38.10px;height:11.60px;background-image:linear-gradient(to right,rgba(45,30,20,0.8) 0,rgba(45,30,20,0.8) 1px,transparent 1px),linear-gradient(to right,rgba(45,30,20,0.8) 0,rgba(45,30,20,0.8) 1px,transparent 1px);background-size:18.956px 2.1px,18.956px 2.1px;background-repeat:repeat-x;background-position:0.22px 0,0.22px 100%;"></div>
<div class="a" style="left:444.10px;top:340.30px;width:113.70px;height:12.70px;background:#ff93a5;overflow:hidden;"><div class="t" style="top:2.70px;font-size:7.2px;color:#2c2018;font-weight:normal;-webkit-text-stroke:0.15px #2c2018;left:1.90px;">SUSTAINED PAD</div></div>
<div class="a" style="left:444.10px;top:340.90px;width:113.70px;height:11.60px;background-image:linear-gradient(to right,rgba(45,30,20,0.8) 0,rgba(45,30,20,0.8) 1px,transparent 1px),linear-gradient(to right,rgba(45,30,20,0.8) 0,rgba(45,30,20,0.8) 1px,transparent 1px);background-size:4.739px 2.1px,4.739px 2.1px;background-repeat:repeat-x;background-position:0.03px 0,0.03px 100%;"></div>
<div class="a" style="left:633.70px;top:340.30px;width:37.90px;height:12.70px;background:#d6a39d;overflow:hidden;"><div class="t" style="top:2.70px;font-size:7.2px;color:#2c2018;font-weight:normal;-webkit-text-stroke:0.15px #2c2018;left:1.90px;">SUSTAINED PAD</div></div>
<div class="a" style="left:633.70px;top:340.90px;width:37.90px;height:11.60px;background-image:linear-gradient(to right,rgba(45,30,20,0.8) 0,rgba(45,30,20,0.8) 1px,transparent 1px),linear-gradient(to right,rgba(45,30,20,0.8) 0,rgba(45,30,20,0.8) 1px,transparent 1px);background-size:18.956px 2.1px,18.956px 2.1px;background-repeat:repeat-x;background-position:18.95px 0,18.95px 100%;"></div>
<div class="a" style="left:671.60px;top:340.30px;width:38.60px;height:12.70px;background:#ff93a5;overflow:hidden;"><div class="t" style="top:2.70px;font-size:7.2px;color:#2c2018;font-weight:normal;-webkit-text-stroke:0.15px #2c2018;left:1.90px;">SUSTAINED PAD</div></div>
<div class="a" style="left:671.60px;top:340.90px;width:38.60px;height:11.60px;background-image:linear-gradient(to right,rgba(45,30,20,0.8) 0,rgba(45,30,20,0.8) 1px,transparent 1px),linear-gradient(to right,rgba(45,30,20,0.8) 0,rgba(45,30,20,0.8) 1px,transparent 1px);background-size:4.739px 2.1px,4.739px 2.1px;background-repeat:repeat-x;background-position:0.00px 0,0.00px 100%;"></div>
<div class="a" style="left:482.00px;top:354.80px;width:75.80px;height:12.70px;background:#ff93a5;overflow:hidden;"><div class="t" style="top:3.20px;font-size:7.2px;color:#2c2018;font-weight:normal;-webkit-text-stroke:0.15px #2c2018;left:1.90px;">PIANO FILTERED</div></div>
<div class="a" style="left:482.00px;top:355.40px;width:75.80px;height:11.60px;background-image:linear-gradient(to right,rgba(45,30,20,0.8) 0,rgba(45,30,20,0.8) 1px,transparent 1px),linear-gradient(to right,rgba(45,30,20,0.8) 0,rgba(45,30,20,0.8) 1px,transparent 1px);background-size:18.956px 2.1px,18.956px 2.1px;background-repeat:repeat-x;background-position:0.04px 0,0.04px 100%;"></div>
<div class="a" style="left:520.00px;top:369.30px;width:227.40px;height:12.70px;background:#ff93a5;overflow:hidden;"><div class="t" style="top:2.70px;font-size:7.2px;color:#2c2018;font-weight:normal;-webkit-text-stroke:0.15px #2c2018;left:1.90px;">BRASSY DRONE</div><div class="t" style="top:2.70px;font-size:7.2px;color:#2c2018;font-weight:normal;-webkit-text-stroke:0.15px #2c2018;left:116.60px;">BRASSY DRONE</div></div>
<div class="a" style="left:520.00px;top:369.90px;width:227.40px;height:11.60px;background-image:linear-gradient(to right,rgba(45,30,20,0.8) 0,rgba(45,30,20,0.8) 1px,transparent 1px),linear-gradient(to right,rgba(45,30,20,0.8) 0,rgba(45,30,20,0.8) 1px,transparent 1px);background-size:18.956px 2.1px,18.956px 2.1px;background-repeat:repeat-x;background-position:18.91px 0,18.91px 100%;"></div>
<div class="a" style="left:520.00px;top:383.80px;width:76.30px;height:12.70px;background:#886ce4;overflow:hidden;"><div class="t" style="top:3.20px;font-size:7.2px;color:#1e1640;font-weight:normal;-webkit-text-stroke:0.15px #1e1640;left:1.90px;">SUSTAINED STRING</div></div>
<div class="a" style="left:520.00px;top:384.40px;width:76.30px;height:11.60px;background-image:linear-gradient(to right,rgba(45,30,20,0.8) 0,rgba(45,30,20,0.8) 1px,transparent 1px),linear-gradient(to right,rgba(45,30,20,0.8) 0,rgba(45,30,20,0.8) 1px,transparent 1px);background-size:9.478px 2.1px,9.478px 2.1px;background-repeat:repeat-x;background-position:9.43px 0,9.43px 100%;"></div>
<div class="a" style="left:216.70px;top:452.55px;width:75.50px;height:12.60px;background:#b83335;overflow:hidden;"><div class="t" style="top:3.45px;font-size:7.2px;color:#f4e2e2;font-weight:normal;-webkit-text-stroke:0.15px #f4e2e2;left:1.90px;">BASS LOOP</div></div>
<div class="a" style="left:216.70px;top:453.15px;width:75.50px;height:11.50px;background-image:linear-gradient(to right,rgba(45,30,20,0.8) 0,rgba(45,30,20,0.8) 1px,transparent 1px),linear-gradient(to right,rgba(45,30,20,0.8) 0,rgba(45,30,20,0.8) 1px,transparent 1px);background-size:18.956px 2.1px,18.956px 2.1px;background-repeat:repeat-x;background-position:18.92px 0,18.92px 100%;"></div>
<div class="a" style="left:330.40px;top:452.55px;width:113.70px;height:12.60px;background:#b83335;overflow:hidden;"><div class="t" style="top:3.45px;font-size:7.2px;color:#f4e2e2;font-weight:normal;-webkit-text-stroke:0.15px #f4e2e2;left:1.90px;">BASS LOOP</div></div>
<div class="a" style="left:330.40px;top:453.15px;width:113.70px;height:11.50px;background-image:linear-gradient(to right,rgba(45,30,20,0.8) 0,rgba(45,30,20,0.8) 1px,transparent 1px),linear-gradient(to right,rgba(45,30,20,0.8) 0,rgba(45,30,20,0.8) 1px,transparent 1px);background-size:18.956px 2.1px,18.956px 2.1px;background-repeat:repeat-x;background-position:18.95px 0,18.95px 100%;"></div>
<div class="a" style="left:633.70px;top:452.55px;width:113.70px;height:12.60px;background:#b83335;overflow:hidden;"><div class="t" style="top:3.45px;font-size:7.2px;color:#f4e2e2;font-weight:normal;-webkit-text-stroke:0.15px #f4e2e2;left:1.90px;">BASS LOOP</div></div>
<div class="a" style="left:633.70px;top:453.15px;width:113.70px;height:11.50px;background-image:linear-gradient(to right,rgba(45,30,20,0.8) 0,rgba(45,30,20,0.8) 1px,transparent 1px),linear-gradient(to right,rgba(45,30,20,0.8) 0,rgba(45,30,20,0.8) 1px,transparent 1px);background-size:18.956px 2.1px,18.956px 2.1px;background-repeat:repeat-x;background-position:18.95px 0,18.95px 100%;"></div>
<div class="a" style="left:198.80px;top:548.95px;width:7.30px;height:12.75px;background:#ffffff;overflow:hidden;"><div class="t" style="top:3.05px;font-size:7.2px;color:#333;font-weight:normal;-webkit-text-stroke:0.15px #333;left:1.90px;">V</div></div>
<div class="a" style="left:207.80px;top:548.95px;width:8.00px;height:12.75px;background:#ffffff;overflow:hidden;"><div class="t" style="top:3.05px;font-size:7.2px;color:#333;font-weight:normal;-webkit-text-stroke:0.15px #333;left:1.90px;">V</div></div>
<div class="a" style="left:293.50px;top:548.95px;width:7.30px;height:12.75px;background:#ffffff;overflow:hidden;"><div class="t" style="top:3.05px;font-size:7.2px;color:#333;font-weight:normal;-webkit-text-stroke:0.15px #333;left:1.90px;">V</div></div>
<div class="a" style="left:302.70px;top:548.95px;width:7.90px;height:12.75px;background:#ffffff;overflow:hidden;"><div class="t" style="top:3.05px;font-size:7.2px;color:#333;font-weight:normal;-webkit-text-stroke:0.15px #333;left:1.90px;">V</div></div>
<div class="a" style="left:312.80px;top:548.95px;width:7.30px;height:12.75px;background:#ffffff;overflow:hidden;"><div class="t" style="top:3.05px;font-size:7.2px;color:#333;font-weight:normal;-webkit-text-stroke:0.15px #333;left:1.90px;">V</div></div>
<div class="a" style="left:322.00px;top:548.95px;width:7.60px;height:12.75px;background:#ffffff;overflow:hidden;"><div class="t" style="top:3.05px;font-size:7.2px;color:#333;font-weight:normal;-webkit-text-stroke:0.15px #333;left:1.90px;">V</div></div>
<div class="a" style="left:521.50px;top:548.95px;width:6.90px;height:12.75px;background:#ffffff;overflow:hidden;"><div class="t" style="top:3.05px;font-size:7.2px;color:#333;font-weight:normal;-webkit-text-stroke:0.15px #333;left:1.90px;">V</div></div>
<div class="a" style="left:530.60px;top:548.95px;width:7.40px;height:12.75px;background:#ffffff;overflow:hidden;"><div class="t" style="top:3.05px;font-size:7.2px;color:#333;font-weight:normal;-webkit-text-stroke:0.15px #333;left:1.90px;">V</div></div>
<div class="a" style="left:540.40px;top:548.95px;width:7.60px;height:12.75px;background:#ffffff;overflow:hidden;"><div class="t" style="top:3.05px;font-size:7.2px;color:#333;font-weight:normal;-webkit-text-stroke:0.15px #333;left:1.90px;">V</div></div>
<div class="a" style="left:550.10px;top:548.95px;width:7.30px;height:12.75px;background:#ffffff;overflow:hidden;"><div class="t" style="top:3.05px;font-size:7.2px;color:#333;font-weight:normal;-webkit-text-stroke:0.15px #333;left:1.90px;">V</div></div>
<div class="a" style="left:597.20px;top:548.95px;width:7.40px;height:12.75px;background:#ffffff;overflow:hidden;"><div class="t" style="top:3.05px;font-size:7.2px;color:#333;font-weight:normal;-webkit-text-stroke:0.15px #333;left:1.90px;">V</div></div>
<div class="a" style="left:607.00px;top:548.95px;width:7.00px;height:12.75px;background:#ffffff;overflow:hidden;"><div class="t" style="top:3.05px;font-size:7.2px;color:#333;font-weight:normal;-webkit-text-stroke:0.15px #333;left:1.90px;">V</div></div>
<div class="a" style="left:616.10px;top:548.95px;width:7.40px;height:12.75px;background:#ffffff;overflow:hidden;"><div class="t" style="top:3.05px;font-size:7.2px;color:#333;font-weight:normal;-webkit-text-stroke:0.15px #333;left:1.90px;">V</div></div>
<div class="a" style="left:625.80px;top:548.95px;width:7.20px;height:12.75px;background:#ffffff;overflow:hidden;"><div class="t" style="top:3.05px;font-size:7.2px;color:#333;font-weight:normal;-webkit-text-stroke:0.15px #333;left:1.90px;">V</div></div>
<div class="a" style="left:673.40px;top:548.95px;width:7.10px;height:12.75px;background:#ffffff;overflow:hidden;"><div class="t" style="top:3.05px;font-size:7.2px;color:#333;font-weight:normal;-webkit-text-stroke:0.15px #333;left:1.90px;">V</div></div>
<div class="a" style="left:683.00px;top:548.95px;width:7.00px;height:12.75px;background:#ffffff;overflow:hidden;"><div class="t" style="top:3.05px;font-size:7.2px;color:#333;font-weight:normal;-webkit-text-stroke:0.15px #333;left:1.90px;">V</div></div>
<div class="a" style="left:692.00px;top:548.95px;width:7.00px;height:12.75px;background:#ffffff;overflow:hidden;"><div class="t" style="top:3.05px;font-size:7.2px;color:#333;font-weight:normal;-webkit-text-stroke:0.15px #333;left:1.90px;">V</div></div>
<div class="a" style="left:701.60px;top:548.95px;width:7.40px;height:12.75px;background:#ffffff;overflow:hidden;"><div class="t" style="top:3.05px;font-size:7.2px;color:#333;font-weight:normal;-webkit-text-stroke:0.15px #333;left:1.90px;">V</div></div>
<div class="a" style="left:27.10px;top:563.50px;width:113.40px;height:12.75px;background:#ffffff;overflow:hidden;"><div class="t" style="top:3.50px;font-size:7.2px;color:#333;font-weight:normal;-webkit-text-stroke:0.15px #333;left:1.90px;">VOCAL CHOP LOOP</div></div>
<div class="a" style="left:27.10px;top:564.10px;width:113.40px;height:11.65px;background-image:linear-gradient(to right,rgba(40,40,40,0.8) 0,rgba(40,40,40,0.8) 1px,transparent 1px),linear-gradient(to right,rgba(40,40,40,0.8) 0,rgba(40,40,40,0.8) 1px,transparent 1px);background-size:2.369px 2.1px,2.369px 2.1px;background-repeat:repeat-x;background-position:0.00px 0,0.00px 100%;"></div>
<div class="a" style="left:559.30px;top:563.50px;width:36.70px;height:12.75px;background:#ffffff;overflow:hidden;"><div class="t" style="top:3.50px;font-size:7.2px;color:#333;font-weight:normal;-webkit-text-stroke:0.15px #333;left:1.90px;">VOCAL CHOP LOOP</div></div>
<div class="a" style="left:559.30px;top:564.10px;width:36.70px;height:11.65px;background-image:linear-gradient(to right,rgba(40,40,40,0.8) 0,rgba(40,40,40,0.8) 1px,transparent 1px),linear-gradient(to right,rgba(40,40,40,0.8) 0,rgba(40,40,40,0.8) 1px,transparent 1px);background-size:2.369px 2.1px,2.369px 2.1px;background-repeat:repeat-x;background-position:0.94px 0,0.94px 100%;"></div>
<div class="a" style="left:634.70px;top:563.50px;width:37.00px;height:12.75px;background:#ffffff;overflow:hidden;"><div class="t" style="top:3.50px;font-size:7.2px;color:#333;font-weight:normal;-webkit-text-stroke:0.15px #333;left:1.90px;">VOCAL CHOP LOOP</div></div>
<div class="a" style="left:634.70px;top:564.10px;width:37.00px;height:11.65px;background-image:linear-gradient(to right,rgba(40,40,40,0.8) 0,rgba(40,40,40,0.8) 1px,transparent 1px),linear-gradient(to right,rgba(40,40,40,0.8) 0,rgba(40,40,40,0.8) 1px,transparent 1px);background-size:2.369px 2.1px,2.369px 2.1px;background-repeat:repeat-x;background-position:1.36px 0,1.36px 100%;"></div>
<div class="a" style="left:748.30px;top:563.50px;width:112.80px;height:12.75px;background:#ffffff;overflow:hidden;"><div class="t" style="top:3.50px;font-size:7.2px;color:#333;font-weight:normal;-webkit-text-stroke:0.15px #333;left:1.90px;">VOCAL CHOP LOOP</div></div>
<div class="a" style="left:748.30px;top:564.10px;width:112.80px;height:11.65px;background-image:linear-gradient(to right,rgba(40,40,40,0.8) 0,rgba(40,40,40,0.8) 1px,transparent 1px),linear-gradient(to right,rgba(40,40,40,0.8) 0,rgba(40,40,40,0.8) 1px,transparent 1px);background-size:2.369px 2.1px,2.369px 2.1px;background-repeat:repeat-x;background-position:1.50px 0,1.50px 100%;"></div>
<div class="a" style="left:65.30px;top:578.05px;width:75.20px;height:12.75px;background:#ffffff;overflow:hidden;"><div class="t" style="top:2.95px;font-size:7.2px;color:#333;font-weight:normal;-webkit-text-stroke:0.15px #333;left:1.90px;">VOCAL ATMOS LOOP</div></div>
<div class="a" style="left:65.30px;top:578.65px;width:75.20px;height:11.65px;background-image:linear-gradient(to right,rgba(40,40,40,0.8) 0,rgba(40,40,40,0.8) 1px,transparent 1px),linear-gradient(to right,rgba(40,40,40,0.8) 0,rgba(40,40,40,0.8) 1px,transparent 1px);background-size:2.369px 2.1px,2.369px 2.1px;background-repeat:repeat-x;background-position:2.08px 0,2.08px 100%;"></div>
<div class="a" style="left:634.70px;top:578.05px;width:74.20px;height:12.75px;background:#ffffff;overflow:hidden;"><div class="t" style="top:2.95px;font-size:7.2px;color:#333;font-weight:normal;-webkit-text-stroke:0.15px #333;left:1.90px;">VOCAL ATMOS LOOP</div></div>
<div class="a" style="left:634.70px;top:578.65px;width:74.20px;height:11.65px;background-image:linear-gradient(to right,rgba(40,40,40,0.8) 0,rgba(40,40,40,0.8) 1px,transparent 1px),linear-gradient(to right,rgba(40,40,40,0.8) 0,rgba(40,40,40,0.8) 1px,transparent 1px);background-size:2.369px 2.1px,2.369px 2.1px;background-repeat:repeat-x;background-position:1.36px 0,1.36px 100%;"></div>
<div class="a" style="left:159.90px;top:592.60px;width:56.10px;height:12.75px;background:#ffffff;overflow:hidden;"><div class="t" style="top:3.40px;font-size:7.2px;color:#333;font-weight:normal;-webkit-text-stroke:0.15px #333;left:1.90px;">VOCAL ATMOS LOOP 2</div></div>
<div class="a" style="left:159.90px;top:593.20px;width:56.10px;height:11.65px;background-image:linear-gradient(to right,rgba(40,40,40,0.8) 0,rgba(40,40,40,0.8) 1px,transparent 1px),linear-gradient(to right,rgba(40,40,40,0.8) 0,rgba(40,40,40,0.8) 1px,transparent 1px);background-size:2.369px 2.1px,2.369px 2.1px;background-repeat:repeat-x;background-position:2.26px 0,2.26px 100%;"></div>
<div class="a" style="left:255.50px;top:592.60px;width:188.60px;height:12.75px;background:#ffffff;overflow:hidden;"><div class="t" style="top:3.40px;font-size:7.2px;color:#333;font-weight:normal;-webkit-text-stroke:0.15px #333;left:1.90px;">VOCAL ATMOS LOOP 2</div></div>
<div class="a" style="left:255.50px;top:593.20px;width:188.60px;height:11.65px;background-image:linear-gradient(to right,rgba(40,40,40,0.8) 0,rgba(40,40,40,0.8) 1px,transparent 1px),linear-gradient(to right,rgba(40,40,40,0.8) 0,rgba(40,40,40,0.8) 1px,transparent 1px);background-size:2.369px 2.1px,2.369px 2.1px;background-repeat:repeat-x;background-position:1.44px 0,1.44px 100%;"></div>
<div class="a" style="left:369.30px;top:621.70px;width:188.50px;height:12.75px;background:#ffffff;overflow:hidden;"><div class="t" style="top:3.30px;font-size:7.2px;color:#333;font-weight:normal;-webkit-text-stroke:0.15px #333;left:1.90px;">VOCAL ATMOS LOOP 3</div></div>
<div class="a" style="left:369.30px;top:622.30px;width:188.50px;height:11.65px;background-image:linear-gradient(to right,rgba(40,40,40,0.8) 0,rgba(40,40,40,0.8) 1px,transparent 1px),linear-gradient(to right,rgba(40,40,40,0.8) 0,rgba(40,40,40,0.8) 1px,transparent 1px);background-size:18.956px 2.1px,18.956px 2.1px;background-repeat:repeat-x;background-position:17.96px 0,17.96px 100%;"></div>
<div class="a" style="left:596.80px;top:621.70px;width:36.20px;height:12.75px;background:#ffffff;overflow:hidden;"><div class="t" style="top:3.30px;font-size:7.2px;color:#333;font-weight:normal;-webkit-text-stroke:0.15px #333;left:1.90px;">VOCAL ATMOS LOOP 3</div></div>
<div class="a" style="left:596.80px;top:622.30px;width:36.20px;height:11.65px;background-image:linear-gradient(to right,rgba(40,40,40,0.8) 0,rgba(40,40,40,0.8) 1px,transparent 1px),linear-gradient(to right,rgba(40,40,40,0.8) 0,rgba(40,40,40,0.8) 1px,transparent 1px);background-size:18.956px 2.1px,18.956px 2.1px;background-repeat:repeat-x;background-position:17.94px 0,17.94px 100%;"></div>
<div class="a" style="left:710.80px;top:621.70px;width:35.80px;height:12.75px;background:#ffffff;overflow:hidden;"><div class="t" style="top:3.30px;font-size:7.2px;color:#333;font-weight:normal;-webkit-text-stroke:0.15px #333;left:1.90px;">VOCAL ATMOS LOOP 3</div></div>
<div class="a" style="left:710.80px;top:622.30px;width:35.80px;height:11.65px;background-image:linear-gradient(to right,rgba(40,40,40,0.8) 0,rgba(40,40,40,0.8) 1px,transparent 1px),linear-gradient(to right,rgba(40,40,40,0.8) 0,rgba(40,40,40,0.8) 1px,transparent 1px);background-size:18.956px 2.1px,18.956px 2.1px;background-repeat:repeat-x;background-position:17.67px 0,17.67px 100%;"></div>
<div class="a" style="left:632.60px;top:607.15px;width:1.20px;height:12.55px;background:#8a8a8a;"></div>
<div class="a" style="left:27.10px;top:101.55px;width:113.70px;height:66.35px;background:rgba(0,0,0,0.07);"></div>
<div class="a" style="left:159.80px;top:101.55px;width:56.90px;height:66.35px;background:rgba(0,0,0,0.07);"></div>
<div class="a" style="left:254.60px;top:101.55px;width:113.70px;height:66.35px;background:rgba(0,0,0,0.07);"></div>
<div class="a" style="left:404.00px;top:101.55px;width:40.10px;height:66.35px;background:rgba(0,0,0,0.07);"></div>
<div class="a" style="left:482.00px;top:101.55px;width:75.80px;height:66.35px;background:rgba(0,0,0,0.07);"></div>
<div class="a" style="left:605.60px;top:101.55px;width:217.60px;height:66.35px;background:rgba(0,0,0,0.07);"></div>
<div class="a" style="left:27.10px;top:102.15px;width:113.70px;height:3.40px;background:rgba(0,0,0,0.07);border-bottom:1px solid rgba(0,0,0,0.16);"></div>
<div class="a" style="left:216.70px;top:102.15px;width:227.40px;height:3.40px;background:rgba(0,0,0,0.07);border-bottom:1px solid rgba(0,0,0,0.16);"></div>
<div class="a" style="left:559.30px;top:102.15px;width:245.70px;height:3.40px;background:rgba(0,0,0,0.07);border-bottom:1px solid rgba(0,0,0,0.16);"></div>
<div class="a" style="left:27.10px;top:105.55px;width:113.70px;height:3.40px;background:rgba(0,0,0,0.07);border-bottom:1px solid rgba(0,0,0,0.16);"></div>
<div class="a" style="left:159.80px;top:105.55px;width:56.90px;height:3.40px;background:rgba(0,0,0,0.07);border-bottom:1px solid rgba(0,0,0,0.16);"></div>
<div class="a" style="left:254.60px;top:105.55px;width:113.70px;height:3.40px;background:rgba(0,0,0,0.07);border-bottom:1px solid rgba(0,0,0,0.16);"></div>
<div class="a" style="left:482.00px;top:105.55px;width:75.80px;height:3.40px;background:rgba(0,0,0,0.07);border-bottom:1px solid rgba(0,0,0,0.16);"></div>
<div class="a" style="left:633.70px;top:105.55px;width:189.50px;height:3.40px;background:rgba(0,0,0,0.07);border-bottom:1px solid rgba(0,0,0,0.16);"></div>
<div class="a" style="left:27.10px;top:108.95px;width:111.90px;height:3.40px;background:rgba(0,0,0,0.07);border-bottom:1px solid rgba(0,0,0,0.16);"></div>
<div class="a" style="left:254.60px;top:108.95px;width:113.70px;height:3.40px;background:rgba(0,0,0,0.07);border-bottom:1px solid rgba(0,0,0,0.16);"></div>
<div class="a" style="left:482.00px;top:108.95px;width:75.80px;height:3.40px;background:rgba(0,0,0,0.07);border-bottom:1px solid rgba(0,0,0,0.16);"></div>
<div class="a" style="left:633.70px;top:108.95px;width:189.50px;height:3.40px;background:rgba(0,0,0,0.07);border-bottom:1px solid rgba(0,0,0,0.16);"></div>
<div class="a" style="left:112.70px;top:112.35px;width:26.60px;height:3.40px;background:rgba(0,0,0,0.07);border-bottom:1px solid rgba(0,0,0,0.16);"></div>
<div class="a" style="left:605.60px;top:112.35px;width:27.90px;height:3.40px;background:rgba(0,0,0,0.07);border-bottom:1px solid rgba(0,0,0,0.16);"></div>
<div class="a" style="left:63.70px;top:115.75px;width:75.60px;height:3.40px;background:rgba(0,0,0,0.07);border-bottom:1px solid rgba(0,0,0,0.16);"></div>
<div class="a" style="left:254.60px;top:115.75px;width:113.70px;height:3.40px;background:rgba(0,0,0,0.07);border-bottom:1px solid rgba(0,0,0,0.16);"></div>
<div class="a" style="left:404.00px;top:115.75px;width:40.10px;height:3.40px;background:rgba(0,0,0,0.07);border-bottom:1px solid rgba(0,0,0,0.16);"></div>
<div class="a" style="left:633.70px;top:115.75px;width:189.50px;height:3.40px;background:rgba(0,0,0,0.07);border-bottom:1px solid rgba(0,0,0,0.16);"></div>
<div class="a" style="left:159.80px;top:119.15px;width:56.90px;height:3.40px;background:rgba(0,0,0,0.07);border-bottom:1px solid rgba(0,0,0,0.16);"></div>
<div class="a" style="left:293.00px;top:119.15px;width:37.20px;height:3.40px;background:rgba(0,0,0,0.07);border-bottom:1px solid rgba(0,0,0,0.16);"></div>
<div class="a" style="left:520.00px;top:119.15px;width:37.80px;height:3.40px;background:rgba(0,0,0,0.07);border-bottom:1px solid rgba(0,0,0,0.16);"></div>
<div class="a" style="left:27.10px;top:122.55px;width:113.60px;height:3.40px;background:rgba(0,0,0,0.07);border-bottom:1px solid rgba(0,0,0,0.16);"></div>
<div class="a" style="left:160.40px;top:122.55px;width:46.60px;height:3.40px;background:rgba(0,0,0,0.07);border-bottom:1px solid rgba(0,0,0,0.16);"></div>
<div class="a" style="left:254.60px;top:122.55px;width:189.50px;height:3.40px;background:rgba(0,0,0,0.07);border-bottom:1px solid rgba(0,0,0,0.16);"></div>
<div class="a" style="left:520.00px;top:122.55px;width:37.80px;height:3.40px;background:rgba(0,0,0,0.07);border-bottom:1px solid rgba(0,0,0,0.16);"></div>
<div class="a" style="left:634.60px;top:122.55px;width:188.60px;height:3.40px;background:rgba(0,0,0,0.07);border-bottom:1px solid rgba(0,0,0,0.16);"></div>
<div class="a" style="left:141.50px;top:272.00px;width:226.80px;height:2.70px;background:rgba(0,0,0,0.07);border-bottom:1px solid rgba(0,0,0,0.16);"></div>
<div class="a" style="left:558.70px;top:272.00px;width:188.70px;height:2.70px;background:rgba(0,0,0,0.07);border-bottom:1px solid rgba(0,0,0,0.16);"></div>
<div class="a" style="left:179.30px;top:274.70px;width:37.00px;height:2.70px;background:rgba(0,0,0,0.07);border-bottom:1px solid rgba(0,0,0,0.16);"></div>
<div class="a" style="left:254.60px;top:274.70px;width:113.70px;height:2.70px;background:rgba(0,0,0,0.07);border-bottom:1px solid rgba(0,0,0,0.16);"></div>
<div class="a" style="left:406.00px;top:274.70px;width:151.80px;height:2.70px;background:rgba(0,0,0,0.07);border-bottom:1px solid rgba(0,0,0,0.16);"></div>
<div class="a" style="left:633.70px;top:274.70px;width:76.50px;height:2.70px;background:rgba(0,0,0,0.07);border-bottom:1px solid rgba(0,0,0,0.16);"></div>
<div class="a" style="left:482.00px;top:277.40px;width:75.80px;height:2.70px;background:rgba(0,0,0,0.07);border-bottom:1px solid rgba(0,0,0,0.16);"></div>
<div class="a" style="left:520.00px;top:280.10px;width:227.40px;height:2.70px;background:rgba(0,0,0,0.07);border-bottom:1px solid rgba(0,0,0,0.16);"></div>
<div class="a" style="left:520.00px;top:282.80px;width:76.30px;height:2.70px;background:rgba(0,0,0,0.07);border-bottom:1px solid rgba(0,0,0,0.16);"></div>
<div class="a" style="left:216.70px;top:398.10px;width:75.50px;height:12.00px;background:rgba(0,0,0,0.15);border-bottom:1px solid rgba(0,0,0,0.16);"></div>
<div class="a" style="left:330.40px;top:398.10px;width:113.70px;height:12.00px;background:rgba(0,0,0,0.15);border-bottom:1px solid rgba(0,0,0,0.16);"></div>
<div class="a" style="left:633.70px;top:398.10px;width:113.70px;height:12.00px;background:rgba(0,0,0,0.15);border-bottom:1px solid rgba(0,0,0,0.16);"></div>
<div class="a" style="left:198.80px;top:481.15px;width:7.30px;height:3.20px;background:rgba(0,0,0,0.07);border-bottom:1px solid rgba(0,0,0,0.16);"></div>
<div class="a" style="left:207.80px;top:481.15px;width:8.00px;height:3.20px;background:rgba(0,0,0,0.07);border-bottom:1px solid rgba(0,0,0,0.16);"></div>
<div class="a" style="left:293.50px;top:481.15px;width:7.30px;height:3.20px;background:rgba(0,0,0,0.07);border-bottom:1px solid rgba(0,0,0,0.16);"></div>
<div class="a" style="left:302.70px;top:481.15px;width:7.90px;height:3.20px;background:rgba(0,0,0,0.07);border-bottom:1px solid rgba(0,0,0,0.16);"></div>
<div class="a" style="left:312.80px;top:481.15px;width:7.30px;height:3.20px;background:rgba(0,0,0,0.07);border-bottom:1px solid rgba(0,0,0,0.16);"></div>
<div class="a" style="left:322.00px;top:481.15px;width:7.60px;height:3.20px;background:rgba(0,0,0,0.07);border-bottom:1px solid rgba(0,0,0,0.16);"></div>
<div class="a" style="left:521.50px;top:481.15px;width:6.90px;height:3.20px;background:rgba(0,0,0,0.07);border-bottom:1px solid rgba(0,0,0,0.16);"></div>
<div class="a" style="left:530.60px;top:481.15px;width:7.40px;height:3.20px;background:rgba(0,0,0,0.07);border-bottom:1px solid rgba(0,0,0,0.16);"></div>
<div class="a" style="left:540.40px;top:481.15px;width:7.60px;height:3.20px;background:rgba(0,0,0,0.07);border-bottom:1px solid rgba(0,0,0,0.16);"></div>
<div class="a" style="left:550.10px;top:481.15px;width:7.30px;height:3.20px;background:rgba(0,0,0,0.07);border-bottom:1px solid rgba(0,0,0,0.16);"></div>
<div class="a" style="left:597.20px;top:481.15px;width:7.40px;height:3.20px;background:rgba(0,0,0,0.07);border-bottom:1px solid rgba(0,0,0,0.16);"></div>
<div class="a" style="left:607.00px;top:481.15px;width:7.00px;height:3.20px;background:rgba(0,0,0,0.07);border-bottom:1px solid rgba(0,0,0,0.16);"></div>
<div class="a" style="left:616.10px;top:481.15px;width:7.40px;height:3.20px;background:rgba(0,0,0,0.07);border-bottom:1px solid rgba(0,0,0,0.16);"></div>
<div class="a" style="left:625.80px;top:481.15px;width:7.20px;height:3.20px;background:rgba(0,0,0,0.07);border-bottom:1px solid rgba(0,0,0,0.16);"></div>
<div class="a" style="left:673.40px;top:481.15px;width:7.10px;height:3.20px;background:rgba(0,0,0,0.07);border-bottom:1px solid rgba(0,0,0,0.16);"></div>
<div class="a" style="left:683.00px;top:481.15px;width:7.00px;height:3.20px;background:rgba(0,0,0,0.07);border-bottom:1px solid rgba(0,0,0,0.16);"></div>
<div class="a" style="left:692.00px;top:481.15px;width:7.00px;height:3.20px;background:rgba(0,0,0,0.07);border-bottom:1px solid rgba(0,0,0,0.16);"></div>
<div class="a" style="left:701.60px;top:481.15px;width:7.40px;height:3.20px;background:rgba(0,0,0,0.07);border-bottom:1px solid rgba(0,0,0,0.16);"></div>
<div class="a" style="left:27.10px;top:484.35px;width:113.40px;height:3.20px;background:rgba(0,0,0,0.07);border-bottom:1px solid rgba(0,0,0,0.16);"></div>
<div class="a" style="left:559.30px;top:484.35px;width:36.70px;height:3.20px;background:rgba(0,0,0,0.07);border-bottom:1px solid rgba(0,0,0,0.16);"></div>
<div class="a" style="left:634.70px;top:484.35px;width:37.00px;height:3.20px;background:rgba(0,0,0,0.07);border-bottom:1px solid rgba(0,0,0,0.16);"></div>
<div class="a" style="left:748.30px;top:484.35px;width:112.80px;height:3.20px;background:rgba(0,0,0,0.07);border-bottom:1px solid rgba(0,0,0,0.16);"></div>
<div class="a" style="left:65.30px;top:487.55px;width:75.20px;height:3.20px;background:rgba(0,0,0,0.07);border-bottom:1px solid rgba(0,0,0,0.16);"></div>
<div class="a" style="left:634.70px;top:487.55px;width:74.20px;height:3.20px;background:rgba(0,0,0,0.07);border-bottom:1px solid rgba(0,0,0,0.16);"></div>
<div class="a" style="left:159.90px;top:490.75px;width:56.10px;height:3.20px;background:rgba(0,0,0,0.07);border-bottom:1px solid rgba(0,0,0,0.16);"></div>
<div class="a" style="left:255.50px;top:490.75px;width:188.60px;height:3.20px;background:rgba(0,0,0,0.07);border-bottom:1px solid rgba(0,0,0,0.16);"></div>
<div class="a" style="left:369.30px;top:497.15px;width:188.50px;height:3.20px;background:rgba(0,0,0,0.07);border-bottom:1px solid rgba(0,0,0,0.16);"></div>
<div class="a" style="left:596.80px;top:497.15px;width:36.20px;height:3.20px;background:rgba(0,0,0,0.07);border-bottom:1px solid rgba(0,0,0,0.16);"></div>
<div class="a" style="left:710.80px;top:497.15px;width:35.80px;height:3.20px;background:rgba(0,0,0,0.07);border-bottom:1px solid rgba(0,0,0,0.16);"></div>
<div class="a" style="left:27.00px;top:73.00px;width:1.00px;height:635.40px;background:#121212;"></div>
<div class="a" style="left:102.00px;top:73.00px;width:1.00px;height:635.40px;background:#121212;"></div>
<div class="a" style="left:140.00px;top:73.00px;width:1.00px;height:635.40px;background:#121212;"></div>
<div class="a" style="left:216.00px;top:73.00px;width:1.00px;height:635.40px;background:#121212;"></div>
<div class="a" style="left:254.00px;top:73.00px;width:1.00px;height:635.40px;background:#121212;"></div>
<div class="a" style="left:292.00px;top:73.00px;width:1.00px;height:635.40px;background:#121212;"></div>
<div class="a" style="left:330.00px;top:73.00px;width:1.00px;height:635.40px;background:#121212;"></div>
<div class="a" style="left:368.00px;top:73.00px;width:1.00px;height:635.40px;background:#121212;"></div>
<div class="a" style="left:444.00px;top:73.00px;width:1.00px;height:635.40px;background:#121212;"></div>
<div class="a" style="left:482.00px;top:73.00px;width:1.00px;height:635.40px;background:#121212;"></div>
<div class="a" style="left:557.00px;top:73.00px;width:1.00px;height:635.40px;background:#121212;"></div>
<div class="a" style="left:633.00px;top:73.00px;width:1.00px;height:635.40px;background:#121212;"></div>
<div class="a" style="left:709.00px;top:73.00px;width:1.00px;height:635.40px;background:#121212;"></div>
<div class="a" style="left:747.00px;top:73.00px;width:1.00px;height:635.40px;background:#121212;"></div>
<div class="a" style="left:823.00px;top:73.00px;width:1.00px;height:635.40px;background:#121212;"></div>
<svg style="left:26.60px;top:58.6px" width="3" height="6"><path d="M0.5 5V0.6L1.6 0" stroke="#8c8c8c" stroke-width="0.9" fill="none"/></svg>
<div class="t" style="top:56.00px;font-size:7.5px;color:#d0d0d0;font-weight:bold;left:30.40px;">1</div>
<div class="a" style="left:45.66px;top:62.00px;width:1.00px;height:1.40px;background:#7a7a7a;"></div>
<svg style="left:64.51px;top:58.6px" width="3" height="6"><path d="M0.5 5V0.6L1.6 0" stroke="#8c8c8c" stroke-width="0.9" fill="none"/></svg>
<div class="t" style="top:56.00px;font-size:7.5px;color:#d0d0d0;font-weight:bold;left:68.31px;">9</div>
<div class="a" style="left:83.57px;top:62.00px;width:1.00px;height:1.40px;background:#7a7a7a;"></div>
<svg style="left:102.42px;top:58.6px" width="3" height="6"><path d="M0.5 5V0.6L1.6 0" stroke="#8c8c8c" stroke-width="0.9" fill="none"/></svg>
<div class="t" style="top:56.00px;font-size:7.5px;color:#d0d0d0;font-weight:bold;left:106.22px;">17</div>
<div class="a" style="left:121.48px;top:62.00px;width:1.00px;height:1.40px;background:#7a7a7a;"></div>
<svg style="left:140.34px;top:58.6px" width="3" height="6"><path d="M0.5 5V0.6L1.6 0" stroke="#8c8c8c" stroke-width="0.9" fill="none"/></svg>
<div class="t" style="top:56.00px;font-size:7.5px;color:#d0d0d0;font-weight:bold;left:144.14px;">25</div>
<div class="a" style="left:159.39px;top:62.00px;width:1.00px;height:1.40px;background:#7a7a7a;"></div>
<svg style="left:178.25px;top:58.6px" width="3" height="6"><path d="M0.5 5V0.6L1.6 0" stroke="#8c8c8c" stroke-width="0.9" fill="none"/></svg>
<div class="t" style="top:56.00px;font-size:7.5px;color:#d0d0d0;font-weight:bold;left:182.05px;">33</div>
<div class="a" style="left:197.30px;top:62.00px;width:1.00px;height:1.40px;background:#7a7a7a;"></div>
<svg style="left:216.16px;top:58.6px" width="3" height="6"><path d="M0.5 5V0.6L1.6 0" stroke="#8c8c8c" stroke-width="0.9" fill="none"/></svg>
<div class="t" style="top:56.00px;font-size:7.5px;color:#d0d0d0;font-weight:bold;left:219.96px;">41</div>
<div class="a" style="left:235.22px;top:62.00px;width:1.00px;height:1.40px;background:#7a7a7a;"></div>
<svg style="left:254.07px;top:58.6px" width="3" height="6"><path d="M0.5 5V0.6L1.6 0" stroke="#8c8c8c" stroke-width="0.9" fill="none"/></svg>
<div class="t" style="top:56.00px;font-size:7.5px;color:#d0d0d0;font-weight:bold;left:257.87px;">49</div>
<div class="a" style="left:273.13px;top:62.00px;width:1.00px;height:1.40px;background:#7a7a7a;"></div>
<svg style="left:291.98px;top:58.6px" width="3" height="6"><path d="M0.5 5V0.6L1.6 0" stroke="#8c8c8c" stroke-width="0.9" fill="none"/></svg>
<div class="t" style="top:56.00px;font-size:7.5px;color:#d0d0d0;font-weight:bold;left:295.78px;">57</div>
<div class="a" style="left:311.04px;top:62.00px;width:1.00px;height:1.40px;background:#7a7a7a;"></div>
<svg style="left:329.90px;top:58.6px" width="3" height="6"><path d="M0.5 5V0.6L1.6 0" stroke="#8c8c8c" stroke-width="0.9" fill="none"/></svg>
<div class="t" style="top:56.00px;font-size:7.5px;color:#d0d0d0;font-weight:bold;left:333.70px;">65</div>
<div class="a" style="left:348.95px;top:62.00px;width:1.00px;height:1.40px;background:#7a7a7a;"></div>
<svg style="left:367.81px;top:58.6px" width="3" height="6"><path d="M0.5 5V0.6L1.6 0" stroke="#8c8c8c" stroke-width="0.9" fill="none"/></svg>
<div class="t" style="top:56.00px;font-size:7.5px;color:#d0d0d0;font-weight:bold;left:371.61px;">73</div>
<div class="a" style="left:386.86px;top:62.00px;width:1.00px;height:1.40px;background:#7a7a7a;"></div>
<svg style="left:405.72px;top:58.6px" width="3" height="6"><path d="M0.5 5V0.6L1.6 0" stroke="#8c8c8c" stroke-width="0.9" fill="none"/></svg>
<div class="t" style="top:56.00px;font-size:7.5px;color:#d0d0d0;font-weight:bold;left:409.52px;">81</div>
<div class="a" style="left:424.78px;top:62.00px;width:1.00px;height:1.40px;background:#7a7a7a;"></div>
<svg style="left:443.63px;top:58.6px" width="3" height="6"><path d="M0.5 5V0.6L1.6 0" stroke="#8c8c8c" stroke-width="0.9" fill="none"/></svg>
<div class="t" style="top:56.00px;font-size:7.5px;color:#d0d0d0;font-weight:bold;left:447.43px;">89</div>
<div class="a" style="left:462.69px;top:62.00px;width:1.00px;height:1.40px;background:#7a7a7a;"></div>
<svg style="left:481.54px;top:58.6px" width="3" height="6"><path d="M0.5 5V0.6L1.6 0" stroke="#8c8c8c" stroke-width="0.9" fill="none"/></svg>
<div class="t" style="top:56.00px;font-size:7.5px;color:#d0d0d0;font-weight:bold;left:485.34px;">97</div>
<div class="a" style="left:500.60px;top:62.00px;width:1.00px;height:1.40px;background:#7a7a7a;"></div>
<svg style="left:519.46px;top:58.6px" width="3" height="6"><path d="M0.5 5V0.6L1.6 0" stroke="#8c8c8c" stroke-width="0.9" fill="none"/></svg>
<div class="t" style="top:56.00px;font-size:7.5px;color:#d0d0d0;font-weight:bold;left:523.26px;">105</div>
<div class="a" style="left:538.51px;top:62.00px;width:1.00px;height:1.40px;background:#7a7a7a;"></div>
<svg style="left:557.37px;top:58.6px" width="3" height="6"><path d="M0.5 5V0.6L1.6 0" stroke="#8c8c8c" stroke-width="0.9" fill="none"/></svg>
<div class="t" style="top:56.00px;font-size:7.5px;color:#d0d0d0;font-weight:bold;left:561.17px;">113</div>
<div class="a" style="left:576.42px;top:62.00px;width:1.00px;height:1.40px;background:#7a7a7a;"></div>
<svg style="left:595.28px;top:58.6px" width="3" height="6"><path d="M0.5 5V0.6L1.6 0" stroke="#8c8c8c" stroke-width="0.9" fill="none"/></svg>
<div class="t" style="top:56.00px;font-size:7.5px;color:#d0d0d0;font-weight:bold;left:599.08px;">121</div>
<div class="a" style="left:614.34px;top:62.00px;width:1.00px;height:1.40px;background:#7a7a7a;"></div>
<svg style="left:633.19px;top:58.6px" width="3" height="6"><path d="M0.5 5V0.6L1.6 0" stroke="#8c8c8c" stroke-width="0.9" fill="none"/></svg>
<div class="t" style="top:56.00px;font-size:7.5px;color:#d0d0d0;font-weight:bold;left:636.99px;">129</div>
<div class="a" style="left:652.25px;top:62.00px;width:1.00px;height:1.40px;background:#7a7a7a;"></div>
<svg style="left:671.10px;top:58.6px" width="3" height="6"><path d="M0.5 5V0.6L1.6 0" stroke="#8c8c8c" stroke-width="0.9" fill="none"/></svg>
<div class="t" style="top:56.00px;font-size:7.5px;color:#d0d0d0;font-weight:bold;left:674.90px;">137</div>
<div class="a" style="left:690.16px;top:62.00px;width:1.00px;height:1.40px;background:#7a7a7a;"></div>
<svg style="left:709.02px;top:58.6px" width="3" height="6"><path d="M0.5 5V0.6L1.6 0" stroke="#8c8c8c" stroke-width="0.9" fill="none"/></svg>
<div class="t" style="top:56.00px;font-size:7.5px;color:#d0d0d0;font-weight:bold;left:712.82px;">145</div>
<div class="a" style="left:728.07px;top:62.00px;width:1.00px;height:1.40px;background:#7a7a7a;"></div>
<svg style="left:746.93px;top:58.6px" width="3" height="6"><path d="M0.5 5V0.6L1.6 0" stroke="#8c8c8c" stroke-width="0.9" fill="none"/></svg>
<div class="t" style="top:56.00px;font-size:7.5px;color:#d0d0d0;font-weight:bold;left:750.73px;">153</div>
<div class="a" style="left:765.98px;top:62.00px;width:1.00px;height:1.40px;background:#7a7a7a;"></div>
<svg style="left:784.84px;top:58.6px" width="3" height="6"><path d="M0.5 5V0.6L1.6 0" stroke="#8c8c8c" stroke-width="0.9" fill="none"/></svg>
<div class="t" style="top:56.00px;font-size:7.5px;color:#d0d0d0;font-weight:bold;left:788.64px;">161</div>
<div class="a" style="left:803.90px;top:62.00px;width:1.00px;height:1.40px;background:#7a7a7a;"></div>
<svg style="left:822.75px;top:58.6px" width="3" height="6"><path d="M0.5 5V0.6L1.6 0" stroke="#8c8c8c" stroke-width="0.9" fill="none"/></svg>
<div class="t" style="top:56.00px;font-size:7.5px;color:#d0d0d0;font-weight:bold;left:826.55px;">169</div>
<div class="a" style="left:841.81px;top:62.00px;width:1.00px;height:1.40px;background:#7a7a7a;"></div>
<svg style="left:860.66px;top:58.6px" width="3" height="6"><path d="M0.5 5V0.6L1.6 0" stroke="#8c8c8c" stroke-width="0.9" fill="none"/></svg>
<div class="a" style="left:27.10px;top:63.60px;width:847.40px;height:0.80px;background:#141414;"></div>
<div class="a" style="left:27.10px;top:64.40px;width:796.15px;height:7.70px;background:#5e5e5e;"></div>
<div class="a" style="left:823.25px;top:64.40px;width:51.25px;height:7.70px;background-color:#4a4a4a;background-image:linear-gradient(to right,#3f3f3f 0,#3f3f3f 1px,transparent 1px);background-size:9.478px 100%;background-position:0.00px 0;"></div>
<svg style="left:27.10px;top:64.4px" width="9" height="8"><path d="M0.4 0.3L7.6 3.85 0.4 7.4z" fill="#787878" stroke="#1e1e1e" stroke-width="0.8"/></svg>
<svg style="left:815.05px;top:64.4px" width="9" height="8"><path d="M8 0.3L0.8 3.85 8 7.4z" fill="#787878" stroke="#1e1e1e" stroke-width="0.8"/></svg>
<div class="a" style="left:27.10px;top:72.10px;width:847.40px;height:0.90px;background:#1e1e1e;"></div>
<div class="a" style="left:27.10px;top:73.00px;width:847.40px;height:9.60px;background-color:#505050;background-image:linear-gradient(to right,#444444 0,#444444 1px,transparent 1px);background-size:9.478px 100%;background-position:0.00px 0;"></div>
<div class="a" style="left:27.10px;top:82.60px;width:847.40px;height:5.10px;background:#303030;"></div>
<svg style="left:26.90px;top:73px" width="9" height="10"><path d="M0.4 0.3L7.8 4.8 0.4 9.3z" fill="#6c6c6c" stroke="#1a1a1a" stroke-width="0.8"/></svg>
<div class="t" style="top:75.00px;font-size:8px;color:#e4e4e4;font-weight:bold;left:35.80px;transform:scaleX(0.92);transform-origin:0 0;">INTRO</div>
<svg style="left:102.72px;top:73px" width="9" height="10"><path d="M0.4 0.3L7.8 4.8 0.4 9.3z" fill="#6c6c6c" stroke="#1a1a1a" stroke-width="0.8"/></svg>
<div class="t" style="top:75.00px;font-size:8px;color:#e4e4e4;font-weight:bold;left:111.62px;transform:scaleX(0.92);transform-origin:0 0;">INTR...</div>
<svg style="left:140.64px;top:73px" width="9" height="10"><path d="M0.4 0.3L7.8 4.8 0.4 9.3z" fill="#6c6c6c" stroke="#1a1a1a" stroke-width="0.8"/></svg>
<div class="t" style="top:75.00px;font-size:8px;color:#e4e4e4;font-weight:bold;left:149.54px;transform:scaleX(0.92);transform-origin:0 0;">BREAKDOWN</div>
<svg style="left:216.46px;top:73px" width="9" height="10"><path d="M0.4 0.3L7.8 4.8 0.4 9.3z" fill="#6c6c6c" stroke="#1a1a1a" stroke-width="0.8"/></svg>
<div class="t" style="top:75.00px;font-size:8px;color:#e4e4e4;font-weight:bold;left:225.36px;transform:scaleX(0.92);transform-origin:0 0;">DROP</div>
<svg style="left:254.37px;top:73px" width="9" height="10"><path d="M0.4 0.3L7.8 4.8 0.4 9.3z" fill="#6c6c6c" stroke="#1a1a1a" stroke-width="0.8"/></svg>
<div class="t" style="top:75.00px;font-size:8px;color:#e4e4e4;font-weight:bold;left:263.27px;transform:scaleX(0.92);transform-origin:0 0;">DRO...</div>
<svg style="left:292.28px;top:73px" width="9" height="10"><path d="M0.4 0.3L7.8 4.8 0.4 9.3z" fill="#6c6c6c" stroke="#1a1a1a" stroke-width="0.8"/></svg>
<div class="t" style="top:75.00px;font-size:8px;color:#e4e4e4;font-weight:bold;left:301.18px;transform:scaleX(0.92);transform-origin:0 0;">BRE...</div>
<svg style="left:330.20px;top:73px" width="9" height="10"><path d="M0.4 0.3L7.8 4.8 0.4 9.3z" fill="#6c6c6c" stroke="#1a1a1a" stroke-width="0.8"/></svg>
<div class="t" style="top:75.00px;font-size:8px;color:#e4e4e4;font-weight:bold;left:339.10px;transform:scaleX(0.92);transform-origin:0 0;">DROP</div>
<svg style="left:368.11px;top:73px" width="9" height="10"><path d="M0.4 0.3L7.8 4.8 0.4 9.3z" fill="#6c6c6c" stroke="#1a1a1a" stroke-width="0.8"/></svg>
<div class="t" style="top:75.00px;font-size:8px;color:#e4e4e4;font-weight:bold;left:377.01px;transform:scaleX(0.92);transform-origin:0 0;">MIXOUT</div>
<svg style="left:443.93px;top:73px" width="9" height="10"><path d="M0.4 0.3L7.8 4.8 0.4 9.3z" fill="#6c6c6c" stroke="#1a1a1a" stroke-width="0.8"/></svg>
<div class="t" style="top:75.00px;font-size:8px;color:#e4e4e4;font-weight:bold;left:452.83px;transform:scaleX(0.92);transform-origin:0 0;">BREAK</div>
<svg style="left:481.84px;top:73px" width="9" height="10"><path d="M0.4 0.3L7.8 4.8 0.4 9.3z" fill="#6c6c6c" stroke="#1a1a1a" stroke-width="0.8"/></svg>
<div class="t" style="top:75.00px;font-size:8px;color:#e4e4e4;font-weight:bold;left:490.74px;transform:scaleX(0.92);transform-origin:0 0;">BREAKDOWN</div>
<svg style="left:557.67px;top:73px" width="9" height="10"><path d="M0.4 0.3L7.8 4.8 0.4 9.3z" fill="#6c6c6c" stroke="#1a1a1a" stroke-width="0.8"/></svg>
<div class="t" style="top:75.00px;font-size:8px;color:#e4e4e4;font-weight:bold;left:566.57px;transform:scaleX(0.92);transform-origin:0 0;">PRE DROP</div>
<svg style="left:633.49px;top:73px" width="9" height="10"><path d="M0.4 0.3L7.8 4.8 0.4 9.3z" fill="#6c6c6c" stroke="#1a1a1a" stroke-width="0.8"/></svg>
<div class="t" style="top:75.00px;font-size:8px;color:#e4e4e4;font-weight:bold;left:642.39px;transform:scaleX(0.92);transform-origin:0 0;">DROP</div>
<svg style="left:709.32px;top:73px" width="9" height="10"><path d="M0.4 0.3L7.8 4.8 0.4 9.3z" fill="#6c6c6c" stroke="#1a1a1a" stroke-width="0.8"/></svg>
<div class="t" style="top:75.00px;font-size:8px;color:#e4e4e4;font-weight:bold;left:718.22px;transform:scaleX(0.92);transform-origin:0 0;">1</div>
<svg style="left:747.23px;top:73px" width="9" height="10"><path d="M0.4 0.3L7.8 4.8 0.4 9.3z" fill="#6c6c6c" stroke="#1a1a1a" stroke-width="0.8"/></svg>
<div class="t" style="top:75.00px;font-size:8px;color:#e4e4e4;font-weight:bold;left:756.13px;transform:scaleX(0.92);transform-origin:0 0;">OUTRO</div>
<svg style="left:823.05px;top:73px" width="9" height="10"><path d="M0.4 0.3L7.8 4.8 0.4 9.3z" fill="#6c6c6c" stroke="#1a1a1a" stroke-width="0.8"/></svg>
<div class="t" style="top:75.00px;font-size:8px;color:#e4e4e4;font-weight:bold;left:831.95px;transform:scaleX(0.92);transform-origin:0 0;">END</div>
<div class="a" style="left:27.00px;top:31.30px;width:1110.00px;height:9.00px;background:#575757;"></div>
<div class="a" style="left:1092.00px;top:31.30px;width:1.30px;height:9.00px;background:#d0d0d0;"></div>
<div class="a" style="left:27.00px;top:29.60px;width:1000.80px;height:12.40px;background:#4c4c4c;border:1.3px solid #bdbdbd;"></div>
<div class="a" style="left:28.30px;top:32.68px;width:134.18px;height:0.90px;background:#ffa374;opacity:0.45;"></div>
<div class="a" style="left:184.90px;top:32.68px;width:67.15px;height:0.90px;background:#ffa374;opacity:0.45;"></div>
<div class="a" style="left:296.77px;top:32.68px;width:134.18px;height:0.90px;background:#ffa374;opacity:0.45;"></div>
<div class="a" style="left:565.12px;top:32.68px;width:89.45px;height:0.90px;background:#ffa374;opacity:0.45;"></div>
<div class="a" style="left:744.14px;top:32.68px;width:223.63px;height:0.90px;background:#ffa374;opacity:0.45;"></div>
<div class="a" style="left:28.30px;top:32.94px;width:132.05px;height:0.90px;background:#ffa374;opacity:0.45;"></div>
<div class="a" style="left:296.77px;top:32.94px;width:134.18px;height:0.90px;background:#ffa374;opacity:0.45;"></div>
<div class="a" style="left:565.12px;top:32.94px;width:89.45px;height:0.90px;background:#ffa374;opacity:0.45;"></div>
<div class="a" style="left:744.14px;top:32.94px;width:223.63px;height:0.90px;background:#ffa374;opacity:0.45;"></div>
<div class="a" style="left:129.31px;top:33.19px;width:31.39px;height:0.90px;background:#9a9a9a;opacity:0.45;"></div>
<div class="a" style="left:710.98px;top:33.19px;width:32.92px;height:0.90px;background:#9a9a9a;opacity:0.45;"></div>
<div class="a" style="left:71.49px;top:33.45px;width:89.21px;height:0.90px;background:#ffa374;opacity:0.45;"></div>
<div class="a" style="left:296.77px;top:33.45px;width:134.18px;height:0.90px;background:#ffa374;opacity:0.45;"></div>
<div class="a" style="left:473.07px;top:33.45px;width:47.32px;height:0.90px;background:#ffa374;opacity:0.45;"></div>
<div class="a" style="left:744.14px;top:33.45px;width:223.63px;height:0.90px;background:#ffa374;opacity:0.45;"></div>
<div class="a" style="left:184.90px;top:33.70px;width:67.15px;height:0.90px;background:#ffa374;opacity:0.45;"></div>
<div class="a" style="left:342.08px;top:33.70px;width:43.90px;height:0.90px;background:#ffa374;opacity:0.45;"></div>
<div class="a" style="left:609.96px;top:33.70px;width:44.61px;height:0.90px;background:#ffa374;opacity:0.45;"></div>
<div class="a" style="left:163.30px;top:35.17px;width:267.64px;height:0.90px;background:#ff93a5;opacity:0.45;"></div>
<div class="a" style="left:655.63px;top:35.17px;width:222.68px;height:0.90px;background:#ff93a5;opacity:0.45;"></div>
<div class="a" style="left:207.91px;top:35.43px;width:43.66px;height:0.90px;background:#ff93a5;opacity:0.45;"></div>
<div class="a" style="left:296.77px;top:35.43px;width:44.73px;height:0.90px;background:#d6a39d;opacity:0.45;"></div>
<div class="a" style="left:341.49px;top:35.43px;width:44.49px;height:0.90px;background:#ff93a5;opacity:0.45;"></div>
<div class="a" style="left:386.22px;top:35.43px;width:44.73px;height:0.90px;background:#d6a39d;opacity:0.45;"></div>
<div class="a" style="left:475.43px;top:35.43px;width:44.96px;height:0.90px;background:#d6a39d;opacity:0.45;"></div>
<div class="a" style="left:520.39px;top:35.43px;width:134.18px;height:0.90px;background:#ff93a5;opacity:0.45;"></div>
<div class="a" style="left:744.14px;top:35.43px;width:44.73px;height:0.90px;background:#d6a39d;opacity:0.45;"></div>
<div class="a" style="left:788.86px;top:35.43px;width:45.55px;height:0.90px;background:#ff93a5;opacity:0.45;"></div>
<div class="a" style="left:565.12px;top:35.69px;width:89.45px;height:0.90px;background:#ff93a5;opacity:0.45;"></div>
<div class="a" style="left:609.96px;top:35.94px;width:268.35px;height:0.90px;background:#ff93a5;opacity:0.45;"></div>
<div class="a" style="left:609.96px;top:36.20px;width:90.04px;height:0.90px;background:#886ce4;opacity:0.45;"></div>
<div class="a" style="left:252.04px;top:37.41px;width:89.10px;height:0.90px;background:#b83335;opacity:0.45;"></div>
<div class="a" style="left:386.22px;top:37.41px;width:134.18px;height:0.90px;background:#b83335;opacity:0.45;"></div>
<div class="a" style="left:744.14px;top:37.41px;width:134.18px;height:0.90px;background:#b83335;opacity:0.45;"></div>
<div class="a" style="left:230.92px;top:39.10px;width:8.61px;height:0.90px;background:#9a9a9a;opacity:0.45;"></div>
<div class="a" style="left:241.54px;top:39.10px;width:9.44px;height:0.90px;background:#9a9a9a;opacity:0.45;"></div>
<div class="a" style="left:342.67px;top:39.10px;width:8.61px;height:0.90px;background:#9a9a9a;opacity:0.45;"></div>
<div class="a" style="left:353.53px;top:39.10px;width:9.32px;height:0.90px;background:#9a9a9a;opacity:0.45;"></div>
<div class="a" style="left:365.45px;top:39.10px;width:8.61px;height:0.90px;background:#9a9a9a;opacity:0.45;"></div>
<div class="a" style="left:376.31px;top:39.10px;width:8.97px;height:0.90px;background:#9a9a9a;opacity:0.45;"></div>
<div class="a" style="left:611.73px;top:39.10px;width:8.14px;height:0.90px;background:#9a9a9a;opacity:0.45;"></div>
<div class="a" style="left:622.47px;top:39.10px;width:8.73px;height:0.90px;background:#9a9a9a;opacity:0.45;"></div>
<div class="a" style="left:634.04px;top:39.10px;width:8.97px;height:0.90px;background:#9a9a9a;opacity:0.45;"></div>
<div class="a" style="left:645.48px;top:39.10px;width:8.61px;height:0.90px;background:#9a9a9a;opacity:0.45;"></div>
<div class="a" style="left:701.06px;top:39.10px;width:8.73px;height:0.90px;background:#9a9a9a;opacity:0.45;"></div>
<div class="a" style="left:712.63px;top:39.10px;width:8.26px;height:0.90px;background:#9a9a9a;opacity:0.45;"></div>
<div class="a" style="left:723.37px;top:39.10px;width:8.73px;height:0.90px;background:#9a9a9a;opacity:0.45;"></div>
<div class="a" style="left:734.81px;top:39.10px;width:8.50px;height:0.90px;background:#9a9a9a;opacity:0.45;"></div>
<div class="a" style="left:790.99px;top:39.10px;width:8.38px;height:0.90px;background:#9a9a9a;opacity:0.45;"></div>
<div class="a" style="left:802.31px;top:39.10px;width:8.26px;height:0.90px;background:#9a9a9a;opacity:0.45;"></div>
<div class="a" style="left:812.94px;top:39.10px;width:8.26px;height:0.90px;background:#9a9a9a;opacity:0.45;"></div>
<div class="a" style="left:824.26px;top:39.10px;width:8.73px;height:0.90px;background:#9a9a9a;opacity:0.45;"></div>
<div class="a" style="left:28.30px;top:39.36px;width:133.82px;height:0.90px;background:#9a9a9a;opacity:0.45;"></div>
<div class="a" style="left:656.34px;top:39.36px;width:43.31px;height:0.90px;background:#9a9a9a;opacity:0.45;"></div>
<div class="a" style="left:745.32px;top:39.36px;width:43.66px;height:0.90px;background:#9a9a9a;opacity:0.45;"></div>
<div class="a" style="left:879.37px;top:39.36px;width:133.11px;height:0.90px;background:#9a9a9a;opacity:0.45;"></div>
<div class="a" style="left:73.38px;top:39.61px;width:88.74px;height:0.90px;background:#9a9a9a;opacity:0.45;"></div>
<div class="a" style="left:745.32px;top:39.61px;width:87.56px;height:0.90px;background:#9a9a9a;opacity:0.45;"></div>
<div class="a" style="left:185.01px;top:39.87px;width:66.20px;height:0.90px;background:#9a9a9a;opacity:0.45;"></div>
<div class="a" style="left:297.83px;top:39.87px;width:222.56px;height:0.90px;background:#9a9a9a;opacity:0.45;"></div>
<div class="a" style="left:432.12px;top:40.38px;width:222.45px;height:0.90px;background:#9a9a9a;opacity:0.45;"></div>
<div class="a" style="left:700.59px;top:40.38px;width:42.72px;height:0.90px;background:#9a9a9a;opacity:0.45;"></div>
<div class="a" style="left:835.12px;top:40.38px;width:42.25px;height:0.90px;background:#9a9a9a;opacity:0.45;"></div>
<div class="a" style="left:28.30px;top:32.43px;width:134.18px;height:0.90px;background:#d06a5a;opacity:0.45;"></div>
<div class="a" style="left:252.04px;top:32.43px;width:268.35px;height:0.90px;background:#d06a5a;opacity:0.45;"></div>
<div class="a" style="left:656.34px;top:32.43px;width:289.95px;height:0.90px;background:#d06a5a;opacity:0.45;"></div>
<div class="a" style="left:28.30px;top:33.96px;width:939.46px;height:0.90px;background:#b8b86a;opacity:0.45;"></div>
<div class="a" style="left:106.07px;top:37.66px;width:783.57px;height:0.90px;background:#7a68d0;opacity:0.45;"></div>
<div class="a" style="left:967.76px;top:31.00px;width:58.74px;height:9.60px;background:#4a4a4a;"></div>
<div class="a" style="left:117.38px;top:30.80px;width:1.00px;height:10.00px;background:rgba(220,220,220,0.5);"></div>
<div class="a" style="left:162.12px;top:30.80px;width:1.00px;height:10.00px;background:rgba(220,220,220,0.5);"></div>
<div class="a" style="left:251.60px;top:30.80px;width:1.00px;height:10.00px;background:rgba(220,220,220,0.5);"></div>
<div class="a" style="left:296.34px;top:30.80px;width:1.00px;height:10.00px;background:rgba(220,220,220,0.5);"></div>
<div class="a" style="left:341.07px;top:30.80px;width:1.00px;height:10.00px;background:rgba(220,220,220,0.5);"></div>
<div class="a" style="left:385.81px;top:30.80px;width:1.00px;height:10.00px;background:rgba(220,220,220,0.5);"></div>
<div class="a" style="left:430.55px;top:30.80px;width:1.00px;height:10.00px;background:rgba(220,220,220,0.5);"></div>
<div class="a" style="left:520.03px;top:30.80px;width:1.00px;height:10.00px;background:rgba(220,220,220,0.5);"></div>
<div class="a" style="left:564.77px;top:30.80px;width:1.00px;height:10.00px;background:rgba(220,220,220,0.5);"></div>
<div class="a" style="left:654.25px;top:30.80px;width:1.00px;height:10.00px;background:rgba(220,220,220,0.5);"></div>
<div class="a" style="left:743.73px;top:30.80px;width:1.00px;height:10.00px;background:rgba(220,220,220,0.5);"></div>
<div class="a" style="left:833.21px;top:30.80px;width:1.00px;height:10.00px;background:rgba(220,220,220,0.5);"></div>
<div class="a" style="left:877.94px;top:30.80px;width:1.00px;height:10.00px;background:rgba(220,220,220,0.5);"></div>
<div class="a" style="left:967.42px;top:30.80px;width:1.00px;height:10.00px;background:rgba(220,220,220,0.5);"></div>
<div class="a" style="left:876.00px;top:87.70px;width:297.00px;height:620.90px;background:#2c2c2c;"></div>
<div class="a" style="left:876.00px;top:102.15px;width:3.30px;height:168.85px;background:#ffa374;"></div>
<div class="a" style="left:876.00px;top:271.00px;width:3.30px;height:127.10px;background:#ff93a5;"></div>
<div class="a" style="left:876.00px;top:398.10px;width:3.30px;height:68.65px;background:#b03436;"></div>
<div class="a" style="left:876.00px;top:481.15px;width:3.30px;height:154.90px;background:#ffffff;"></div>
<div class="a" style="left:876.00px;top:87.70px;width:150.40px;height:13.25px;background:#3e3e3e;"></div>
<svg style="left:877.00px;top:88.30px" width="12" height="12"><circle cx="6" cy="6" r="4.7" fill="none" stroke="#b8b8b8" stroke-width="0.85"/><rect x="4.1" y="4.1" width="3.8" height="3.8" fill="#b8b8b8" opacity="0.75"/></svg>
<div class="t" style="top:90.00px;font-size:8.3px;color:#dcdcdc;font-weight:bold;left:892.90px;transform:scaleX(0.885);transform-origin:0 0;">REFERENCE</div>
<div class="a" style="left:1027.00px;top:87.70px;width:57.00px;height:13.25px;background:#585858;"></div>
<div class="a" style="left:1085.00px;top:87.70px;width:88.00px;height:13.25px;background:#585858;"></div>
<div class="a" style="left:1029.30px;top:89.40px;width:52.70px;height:9.50px;background:#4a4a4a;border:1px solid #363636;"></div>
<div class="a" style="left:1088.00px;top:89.40px;width:34.30px;height:9.50px;background:#f39a22;border:1px solid #2c2c30;"><div class="t" style="top:0.60px;font-size:7.2px;color:#1e1a14;font-weight:bold;left:-1.00px;width:34.30px;text-align:center;">1</div></div>
<div class="a" style="left:1126.00px;top:89.40px;width:15.70px;height:9.50px;background:#3a3a3a;border:1px solid #2e2e2e;"><div class="t" style="top:0.60px;font-size:7.2px;color:#e8e8e8;font-weight:bold;left:-1.00px;width:15.70px;text-align:center;">S</div></div>
<div class="a" style="left:1165.50px;top:88.10px;width:2.00px;height:12.25px;background:#1a1a1a;"></div>
<div class="a" style="left:1168.60px;top:88.10px;width:2.10px;height:12.25px;background:#1a1a1a;"></div>
<div class="a" style="left:876.00px;top:102.15px;width:150.40px;height:66.15px;background:#ffa374;"></div>
<svg style="left:877.00px;top:102.75px" width="12" height="12"><circle cx="6" cy="6" r="4.7" fill="none" stroke="#2a211c" stroke-width="0.85"/><path d="M4.0 4.5h2" stroke="#2a211c" stroke-width="0.8"/><rect x="5.2" y="5.2" width="2.9" height="2.4" fill="#2a211c"/></svg>
<div class="t" style="top:105.00px;font-size:8.3px;color:#2a211c;font-weight:bold;left:892.90px;transform:scaleX(0.885);transform-origin:0 0;">DRUM GROUP</div>
<div class="a" style="left:1027.00px;top:102.15px;width:57.00px;height:66.15px;background:#636363;"></div>
<div class="a" style="left:1085.00px;top:102.15px;width:88.00px;height:66.15px;background:#636363;"></div>
<div class="a" style="left:1029.30px;top:104.15px;width:52.70px;height:9.40px;background:#2c2c2c;border:1px solid #262626;"><div class="t" style="top:1.00px;font-size:8px;color:#e6e6e6;font-weight:normal;-webkit-text-stroke:0.1px #e6e6e6;left:0.60px;letter-spacing:-0.1px;">Master</div><svg style="left:43.60px;top:3.04px" width="5.20" height="3.12"><path d="M0 0H5.20L2.60 3.12z" fill="#eee"/></svg></div>
<div class="a" style="left:1029.30px;top:117.15px;width:52.70px;height:9.40px;background:#4a4a4a;border:1px solid #363636;"></div>
<div class="a" style="left:1088.00px;top:104.15px;width:34.30px;height:9.40px;background:#f39a22;border:1px solid #2c2c30;"><div class="t" style="top:-0.15px;font-size:7.2px;color:#1e1a14;font-weight:bold;left:-1.00px;width:34.30px;text-align:center;">5</div></div>
<div class="a" style="left:1126.00px;top:104.15px;width:15.70px;height:9.40px;background:#3a3a3a;border:1px solid #2e2e2e;"><div class="t" style="top:-0.15px;font-size:7.2px;color:#e8e8e8;font-weight:bold;left:-1.00px;width:15.70px;text-align:center;">S</div></div>
<div class="a" style="left:1088.00px;top:117.15px;width:34.30px;height:9.40px;background:#333;border:1px solid #2a2a2a;"><div class="a" style="left:0;top:0;width:28.3px;height:100%;background:#1b7a8b"></div><div class="t" style="top:0.00px;font-size:7.2px;color:#e8e8e8;font-weight:bold;left:-1.00px;width:30.00px;text-align:center;">0</div></div>
<div class="a" style="left:1126.00px;top:117.15px;width:35.00px;height:9.40px;background:#333;border:1px solid #2e2e2e;"><div class="t" style="top:-0.15px;font-size:7.2px;color:#e8e8e8;font-weight:bold;left:-1.00px;width:35.00px;text-align:center;">C</div></div>
<div class="a" style="left:1087.80px;top:130.25px;width:22.90px;height:9.40px;background:#333;border:1px solid #2e2e2e;"><div class="t" style="top:-0.25px;font-size:8.3px;color:#e8e8e8;font-weight:normal;left:-1.00px;width:22.90px;text-align:center;">-inf</div></div>
<div class="a" style="left:1113.20px;top:130.25px;width:22.60px;height:9.40px;background:#333;border:1px solid #2e2e2e;"><div class="t" style="top:-0.25px;font-size:8.3px;color:#e8e8e8;font-weight:normal;left:-1.00px;width:22.60px;text-align:center;">-inf</div></div>
<div class="a" style="left:1165.50px;top:102.55px;width:2.00px;height:65.15px;background:#1a1a1a;"></div>
<div class="a" style="left:1168.60px;top:102.55px;width:2.10px;height:65.15px;background:#1a1a1a;"></div>
<div class="a" style="left:880.10px;top:169.50px;width:146.30px;height:13.30px;background:#e2685b;"></div>
<svg style="left:880.80px;top:170.10px" width="12" height="12"><circle cx="6" cy="6" r="4.7" fill="none" stroke="#2a211c" stroke-width="0.85"/><rect x="4.1" y="4.1" width="3.8" height="3.8" fill="#2a211c" opacity="0.75"/></svg>
<div class="t" style="top:172.00px;font-size:8.3px;color:#2a211c;font-weight:bold;left:896.70px;transform:scaleX(0.885);transform-origin:0 0;">KICK GROUP</div>
<div class="a" style="left:1027.00px;top:169.50px;width:57.00px;height:13.30px;background:#585858;"></div>
<div class="a" style="left:1085.00px;top:169.50px;width:88.00px;height:13.30px;background:#585858;"></div>
<div class="a" style="left:1029.30px;top:171.20px;width:52.70px;height:9.50px;background:#4a4a4a;border:1px solid #363636;"></div>
<div class="a" style="left:1088.00px;top:171.20px;width:34.30px;height:9.50px;background:#f39a22;border:1px solid #2c2c30;"><div class="t" style="top:0.80px;font-size:7.2px;color:#1e1a14;font-weight:bold;left:-1.00px;width:34.30px;text-align:center;">6</div></div>
<div class="a" style="left:1126.00px;top:171.20px;width:15.70px;height:9.50px;background:#3a3a3a;border:1px solid #2e2e2e;"><div class="t" style="top:0.80px;font-size:7.2px;color:#e8e8e8;font-weight:bold;left:-1.00px;width:15.70px;text-align:center;">S</div></div>
<div class="a" style="left:1165.50px;top:169.90px;width:2.00px;height:12.30px;background:#1a1a1a;"></div>
<div class="a" style="left:1168.60px;top:169.90px;width:2.10px;height:12.30px;background:#1a1a1a;"></div>
<div class="a" style="left:880.10px;top:184.00px;width:146.30px;height:13.25px;background:#ffa374;"></div>
<svg style="left:880.80px;top:184.60px" width="12" height="12"><circle cx="6" cy="6" r="4.7" fill="none" stroke="#2a211c" stroke-width="0.85"/><path d="M4.7 3.7L8.2 6 4.7 8.3z" fill="#2a211c"/></svg>
<div class="t" style="top:187.00px;font-size:8.3px;color:#2a211c;font-weight:bold;left:896.70px;transform:scaleX(0.885);transform-origin:0 0;">9 CLAP</div>
<div class="a" style="left:1027.00px;top:184.00px;width:57.00px;height:13.25px;background:#585858;"></div>
<div class="a" style="left:1085.00px;top:184.00px;width:88.00px;height:13.25px;background:#585858;"></div>
<div class="a" style="left:1029.30px;top:185.70px;width:52.70px;height:9.50px;background:#4a4a4a;border:1px solid #363636;"></div>
<div class="a" style="left:1088.00px;top:185.70px;width:34.30px;height:9.50px;background:#f39a22;border:1px solid #2c2c30;"><div class="t" style="top:0.30px;font-size:7.2px;color:#1e1a14;font-weight:bold;left:-1.00px;width:34.30px;text-align:center;">9</div></div>
<div class="a" style="left:1126.00px;top:185.70px;width:15.70px;height:9.50px;background:#3a3a3a;border:1px solid #2e2e2e;"><div class="t" style="top:0.30px;font-size:7.2px;color:#e8e8e8;font-weight:bold;left:-1.00px;width:15.70px;text-align:center;">S</div></div>
<div class="a" style="left:1145.60px;top:185.70px;width:15.20px;height:9.50px;background:#3a3a3a;border:1px solid #2e2e2e;"><svg style="left:3.9px;top:1.0px" width="8" height="8"><circle cx="3.6" cy="3.7" r="2.8" fill="#ececec"/><path d="M3.7 3.8L4.3 1.2" stroke="#2a2a2a" stroke-width="0.9"/></svg></div>
<div class="a" style="left:1165.50px;top:184.40px;width:2.00px;height:12.25px;background:#1a1a1a;"></div>
<div class="a" style="left:1168.60px;top:184.40px;width:2.10px;height:12.25px;background:#1a1a1a;"></div>
<div class="a" style="left:880.10px;top:198.45px;width:146.30px;height:13.25px;background:#ffa374;"></div>
<svg style="left:880.80px;top:199.05px" width="12" height="12"><circle cx="6" cy="6" r="4.7" fill="none" stroke="#2a211c" stroke-width="0.85"/><path d="M4.7 3.7L8.2 6 4.7 8.3z" fill="#2a211c"/></svg>
<div class="t" style="top:201.00px;font-size:8.3px;color:#2a211c;font-weight:bold;left:896.70px;transform:scaleX(0.885);transform-origin:0 0;">10 CLAP ACCENT</div>
<div class="a" style="left:1027.00px;top:198.45px;width:57.00px;height:13.25px;background:#585858;"></div>
<div class="a" style="left:1085.00px;top:198.45px;width:88.00px;height:13.25px;background:#585858;"></div>
<div class="a" style="left:1029.30px;top:200.15px;width:52.70px;height:9.50px;background:#4a4a4a;border:1px solid #363636;"></div>
<div class="a" style="left:1088.00px;top:200.15px;width:34.30px;height:9.50px;background:#f39a22;border:1px solid #2c2c30;"><div class="t" style="top:-0.15px;font-size:7.2px;color:#1e1a14;font-weight:bold;left:-1.00px;width:34.30px;text-align:center;">10</div></div>
<div class="a" style="left:1126.00px;top:200.15px;width:15.70px;height:9.50px;background:#3a3a3a;border:1px solid #2e2e2e;"><div class="t" style="top:-0.15px;font-size:7.2px;color:#e8e8e8;font-weight:bold;left:-1.00px;width:15.70px;text-align:center;">S</div></div>
<div class="a" style="left:1145.60px;top:200.15px;width:15.20px;height:9.50px;background:#3a3a3a;border:1px solid #2e2e2e;"><svg style="left:3.9px;top:1.0px" width="8" height="8"><circle cx="3.6" cy="3.7" r="2.8" fill="#ececec"/><path d="M3.7 3.8L4.3 1.2" stroke="#2a2a2a" stroke-width="0.9"/></svg></div>
<div class="a" style="left:1165.50px;top:198.85px;width:2.00px;height:12.25px;background:#1a1a1a;"></div>
<div class="a" style="left:1168.60px;top:198.85px;width:2.10px;height:12.25px;background:#1a1a1a;"></div>
<div class="a" style="left:880.10px;top:212.90px;width:146.30px;height:13.30px;background:#ffffff;"></div>
<svg style="left:880.80px;top:213.50px" width="12" height="12"><circle cx="6" cy="6" r="4.7" fill="none" stroke="#2a211c" stroke-width="0.85"/><path d="M4.7 3.7L8.2 6 4.7 8.3z" fill="#2a211c"/></svg>
<div class="t" style="top:215.00px;font-size:8.3px;color:#2a211c;font-weight:bold;left:896.70px;transform:scaleX(0.885);transform-origin:0 0;">11 BUILD SNARE</div>
<div class="a" style="left:1027.00px;top:212.90px;width:57.00px;height:13.30px;background:#585858;"></div>
<div class="a" style="left:1085.00px;top:212.90px;width:88.00px;height:13.30px;background:#585858;"></div>
<div class="a" style="left:1029.30px;top:214.60px;width:52.70px;height:9.50px;background:#4a4a4a;border:1px solid #363636;"></div>
<div class="a" style="left:1088.00px;top:214.60px;width:34.30px;height:9.50px;background:#f39a22;border:1px solid #2c2c30;"><div class="t" style="top:0.40px;font-size:7.2px;color:#1e1a14;font-weight:bold;left:-1.00px;width:34.30px;text-align:center;">11</div></div>
<div class="a" style="left:1126.00px;top:214.60px;width:15.70px;height:9.50px;background:#3a3a3a;border:1px solid #2e2e2e;"><div class="t" style="top:0.40px;font-size:7.2px;color:#e8e8e8;font-weight:bold;left:-1.00px;width:15.70px;text-align:center;">S</div></div>
<div class="a" style="left:1145.60px;top:214.60px;width:15.20px;height:9.50px;background:#3a3a3a;border:1px solid #2e2e2e;"><svg style="left:3.9px;top:1.0px" width="8" height="8"><circle cx="3.6" cy="3.7" r="2.8" fill="#ececec"/><path d="M3.7 3.8L4.3 1.2" stroke="#2a2a2a" stroke-width="0.9"/></svg></div>
<div class="a" style="left:1165.50px;top:213.30px;width:2.00px;height:12.30px;background:#1a1a1a;"></div>
<div class="a" style="left:1168.60px;top:213.30px;width:2.10px;height:12.30px;background:#1a1a1a;"></div>
<div class="a" style="left:880.10px;top:227.40px;width:146.30px;height:13.25px;background:#ffa374;"></div>
<svg style="left:880.80px;top:228.00px" width="12" height="12"><circle cx="6" cy="6" r="4.7" fill="none" stroke="#2a211c" stroke-width="0.85"/><path d="M4.7 3.7L8.2 6 4.7 8.3z" fill="#2a211c"/></svg>
<div class="t" style="top:230.00px;font-size:8.3px;color:#2a211c;font-weight:bold;left:896.70px;transform:scaleX(0.885);transform-origin:0 0;">12 PERCUSSION</div>
<div class="a" style="left:1027.00px;top:227.40px;width:57.00px;height:13.25px;background:#585858;"></div>
<div class="a" style="left:1085.00px;top:227.40px;width:88.00px;height:13.25px;background:#585858;"></div>
<div class="a" style="left:1029.30px;top:229.10px;width:52.70px;height:9.50px;background:#4a4a4a;border:1px solid #363636;"></div>
<div class="a" style="left:1088.00px;top:229.10px;width:34.30px;height:9.50px;background:#f39a22;border:1px solid #2c2c30;"><div class="t" style="top:-0.10px;font-size:7.2px;color:#1e1a14;font-weight:bold;left:-1.00px;width:34.30px;text-align:center;">12</div></div>
<div class="a" style="left:1126.00px;top:229.10px;width:15.70px;height:9.50px;background:#3a3a3a;border:1px solid #2e2e2e;"><div class="t" style="top:-0.10px;font-size:7.2px;color:#e8e8e8;font-weight:bold;left:-1.00px;width:15.70px;text-align:center;">S</div></div>
<div class="a" style="left:1145.60px;top:229.10px;width:15.20px;height:9.50px;background:#3a3a3a;border:1px solid #2e2e2e;"><svg style="left:3.9px;top:1.0px" width="8" height="8"><circle cx="3.6" cy="3.7" r="2.8" fill="#ececec"/><path d="M3.7 3.8L4.3 1.2" stroke="#2a2a2a" stroke-width="0.9"/></svg></div>
<div class="a" style="left:1165.50px;top:227.80px;width:2.00px;height:12.25px;background:#1a1a1a;"></div>
<div class="a" style="left:1168.60px;top:227.80px;width:2.10px;height:12.25px;background:#1a1a1a;"></div>
<div class="a" style="left:880.10px;top:241.85px;width:146.30px;height:13.30px;background:#ffa374;"></div>
<svg style="left:880.80px;top:242.45px" width="12" height="12"><circle cx="6" cy="6" r="4.7" fill="none" stroke="#2a211c" stroke-width="0.85"/><path d="M4.7 3.7L8.2 6 4.7 8.3z" fill="#2a211c"/></svg>
<div class="t" style="top:244.00px;font-size:8.3px;color:#2a211c;font-weight:bold;left:896.70px;transform:scaleX(0.885);transform-origin:0 0;">13 PERCUSSION LOOP</div>
<div class="a" style="left:1027.00px;top:241.85px;width:57.00px;height:13.30px;background:#585858;"></div>
<div class="a" style="left:1085.00px;top:241.85px;width:88.00px;height:13.30px;background:#585858;"></div>
<div class="a" style="left:1029.30px;top:243.55px;width:52.70px;height:9.50px;background:#4a4a4a;border:1px solid #363636;"></div>
<div class="a" style="left:1088.00px;top:243.55px;width:34.30px;height:9.50px;background:#f39a22;border:1px solid #2c2c30;"><div class="t" style="top:0.45px;font-size:7.2px;color:#1e1a14;font-weight:bold;left:-1.00px;width:34.30px;text-align:center;">13</div></div>
<div class="a" style="left:1126.00px;top:243.55px;width:15.70px;height:9.50px;background:#3a3a3a;border:1px solid #2e2e2e;"><div class="t" style="top:0.45px;font-size:7.2px;color:#e8e8e8;font-weight:bold;left:-1.00px;width:15.70px;text-align:center;">S</div></div>
<div class="a" style="left:1145.60px;top:243.55px;width:15.20px;height:9.50px;background:#3a3a3a;border:1px solid #2e2e2e;"><svg style="left:3.9px;top:1.0px" width="8" height="8"><circle cx="3.6" cy="3.7" r="2.8" fill="#ececec"/><path d="M3.7 3.8L4.3 1.2" stroke="#2a2a2a" stroke-width="0.9"/></svg></div>
<div class="a" style="left:1165.50px;top:242.25px;width:2.00px;height:12.30px;background:#1a1a1a;"></div>
<div class="a" style="left:1168.60px;top:242.25px;width:2.10px;height:12.30px;background:#1a1a1a;"></div>
<div class="a" style="left:880.10px;top:256.35px;width:146.30px;height:13.45px;background:#bfba6a;"></div>
<svg style="left:880.80px;top:256.95px" width="12" height="12"><circle cx="6" cy="6" r="4.7" fill="none" stroke="#2a211c" stroke-width="0.85"/><rect x="4.1" y="4.1" width="3.8" height="3.8" fill="#2a211c" opacity="0.75"/></svg>
<div class="t" style="top:259.00px;font-size:8.3px;color:#2a211c;font-weight:bold;left:896.70px;transform:scaleX(0.885);transform-origin:0 0;">CYMBAL GROUP</div>
<div class="a" style="left:1027.00px;top:256.35px;width:57.00px;height:13.45px;background:#585858;"></div>
<div class="a" style="left:1085.00px;top:256.35px;width:88.00px;height:13.45px;background:#585858;"></div>
<div class="a" style="left:1029.30px;top:258.05px;width:52.70px;height:9.50px;background:#4a4a4a;border:1px solid #363636;"></div>
<div class="a" style="left:1088.00px;top:258.05px;width:34.30px;height:9.50px;background:#f39a22;border:1px solid #2c2c30;"><div class="t" style="top:-0.05px;font-size:7.2px;color:#1e1a14;font-weight:bold;left:-1.00px;width:34.30px;text-align:center;">14</div></div>
<div class="a" style="left:1126.00px;top:258.05px;width:15.70px;height:9.50px;background:#3a3a3a;border:1px solid #2e2e2e;"><div class="t" style="top:-0.05px;font-size:7.2px;color:#e8e8e8;font-weight:bold;left:-1.00px;width:15.70px;text-align:center;">S</div></div>
<div class="a" style="left:1165.50px;top:256.75px;width:2.00px;height:12.45px;background:#1a1a1a;"></div>
<div class="a" style="left:1168.60px;top:256.75px;width:2.10px;height:12.45px;background:#1a1a1a;"></div>
<div class="a" style="left:876.00px;top:271.00px;width:150.40px;height:53.40px;background:#ff93a5;"></div>
<svg style="left:877.00px;top:271.60px" width="12" height="12"><circle cx="6" cy="6" r="4.7" fill="none" stroke="#2a211c" stroke-width="0.85"/><path d="M4.0 4.5h2" stroke="#2a211c" stroke-width="0.8"/><rect x="5.2" y="5.2" width="2.9" height="2.4" fill="#2a211c"/></svg>
<div class="t" style="top:273.00px;font-size:8.3px;color:#2a211c;font-weight:bold;left:892.90px;transform:scaleX(0.885);transform-origin:0 0;">SYNTH GROUP</div>
<div class="a" style="left:1027.00px;top:271.00px;width:57.00px;height:53.40px;background:#636363;"></div>
<div class="a" style="left:1085.00px;top:271.00px;width:88.00px;height:53.40px;background:#636363;"></div>
<div class="a" style="left:1029.30px;top:273.00px;width:52.70px;height:9.40px;background:#2c2c2c;border:1px solid #262626;"><div class="t" style="top:1.00px;font-size:8px;color:#e6e6e6;font-weight:normal;-webkit-text-stroke:0.1px #e6e6e6;left:0.60px;letter-spacing:-0.1px;">Master</div><svg style="left:43.60px;top:3.04px" width="5.20" height="3.12"><path d="M0 0H5.20L2.60 3.12z" fill="#eee"/></svg></div>
<div class="a" style="left:1029.30px;top:286.00px;width:52.70px;height:9.40px;background:#4a4a4a;border:1px solid #363636;"></div>
<div class="a" style="left:1088.00px;top:273.00px;width:34.30px;height:9.40px;background:#f39a22;border:1px solid #2c2c30;"><div class="t" style="top:0.00px;font-size:7.2px;color:#1e1a14;font-weight:bold;left:-1.00px;width:34.30px;text-align:center;">19</div></div>
<div class="a" style="left:1126.00px;top:273.00px;width:15.70px;height:9.40px;background:#3a3a3a;border:1px solid #2e2e2e;"><div class="t" style="top:0.00px;font-size:7.2px;color:#e8e8e8;font-weight:bold;left:-1.00px;width:15.70px;text-align:center;">S</div></div>
<div class="a" style="left:1088.00px;top:286.00px;width:34.30px;height:9.40px;background:#333;border:1px solid #2a2a2a;"><div class="a" style="left:0;top:0;width:28.3px;height:100%;background:#1b7a8b"></div><div class="t" style="top:0.00px;font-size:7.2px;color:#e8e8e8;font-weight:bold;left:-1.00px;width:30.00px;text-align:center;">0</div></div>
<div class="a" style="left:1126.00px;top:286.00px;width:35.00px;height:9.40px;background:#333;border:1px solid #2e2e2e;"><div class="t" style="top:0.00px;font-size:7.2px;color:#e8e8e8;font-weight:bold;left:-1.00px;width:35.00px;text-align:center;">C</div></div>
<div class="a" style="left:1087.80px;top:299.10px;width:22.90px;height:9.40px;background:#333;border:1px solid #2e2e2e;"><div class="t" style="top:-1.10px;font-size:8.3px;color:#e8e8e8;font-weight:normal;left:-1.00px;width:22.90px;text-align:center;">-inf</div></div>
<div class="a" style="left:1113.20px;top:299.10px;width:22.60px;height:9.40px;background:#333;border:1px solid #2e2e2e;"><div class="t" style="top:-1.10px;font-size:8.3px;color:#e8e8e8;font-weight:normal;left:-1.00px;width:22.60px;text-align:center;">-inf</div></div>
<div class="a" style="left:1165.50px;top:271.40px;width:2.00px;height:52.40px;background:#1a1a1a;"></div>
<div class="a" style="left:1168.60px;top:271.40px;width:2.10px;height:52.40px;background:#1a1a1a;"></div>
<div class="a" style="left:880.10px;top:325.60px;width:146.30px;height:13.30px;background:#ff93a5;"></div>
<svg style="left:880.80px;top:326.20px" width="12" height="12"><circle cx="6" cy="6" r="4.7" fill="none" stroke="#2a211c" stroke-width="0.85"/><path d="M4.7 3.7L8.2 6 4.7 8.3z" fill="#2a211c"/></svg>
<div class="t" style="top:328.00px;font-size:8.3px;color:#2a211c;font-weight:bold;left:896.70px;transform:scaleX(0.885);transform-origin:0 0;">20 PIANO LOOP</div>
<div class="a" style="left:1027.00px;top:325.60px;width:57.00px;height:13.30px;background:#585858;"></div>
<div class="a" style="left:1085.00px;top:325.60px;width:88.00px;height:13.30px;background:#585858;"></div>
<div class="a" style="left:1029.30px;top:327.30px;width:52.70px;height:9.50px;background:#4a4a4a;border:1px solid #363636;"></div>
<div class="a" style="left:1088.00px;top:327.30px;width:34.30px;height:9.50px;background:#f39a22;border:1px solid #2c2c30;"><div class="t" style="top:0.70px;font-size:7.2px;color:#1e1a14;font-weight:bold;left:-1.00px;width:34.30px;text-align:center;">20</div></div>
<div class="a" style="left:1126.00px;top:327.30px;width:15.70px;height:9.50px;background:#3a3a3a;border:1px solid #2e2e2e;"><div class="t" style="top:0.70px;font-size:7.2px;color:#e8e8e8;font-weight:bold;left:-1.00px;width:15.70px;text-align:center;">S</div></div>
<div class="a" style="left:1145.60px;top:327.30px;width:15.20px;height:9.50px;background:#3a3a3a;border:1px solid #2e2e2e;"><svg style="left:3.9px;top:1.0px" width="8" height="8"><circle cx="3.6" cy="3.7" r="2.8" fill="#ececec"/><path d="M3.7 3.8L4.3 1.2" stroke="#2a2a2a" stroke-width="0.9"/></svg></div>
<div class="a" style="left:1165.50px;top:326.00px;width:2.00px;height:12.30px;background:#1a1a1a;"></div>
<div class="a" style="left:1168.60px;top:326.00px;width:2.10px;height:12.30px;background:#1a1a1a;"></div>
<div class="a" style="left:880.10px;top:340.10px;width:146.30px;height:13.30px;background:#ff93a5;"></div>
<svg style="left:880.80px;top:340.70px" width="12" height="12"><circle cx="6" cy="6" r="4.7" fill="none" stroke="#2a211c" stroke-width="0.85"/><path d="M4.7 3.7L8.2 6 4.7 8.3z" fill="#2a211c"/></svg>
<div class="t" style="top:343.00px;font-size:8.3px;color:#2a211c;font-weight:bold;left:896.70px;transform:scaleX(0.885);transform-origin:0 0;">21 SUSTAINED PAD</div>
<div class="a" style="left:1027.00px;top:340.10px;width:57.00px;height:13.30px;background:#585858;"></div>
<div class="a" style="left:1085.00px;top:340.10px;width:88.00px;height:13.30px;background:#585858;"></div>
<div class="a" style="left:1029.30px;top:341.80px;width:52.70px;height:9.50px;background:#4a4a4a;border:1px solid #363636;"></div>
<div class="a" style="left:1088.00px;top:341.80px;width:34.30px;height:9.50px;background:#f39a22;border:1px solid #2c2c30;"><div class="t" style="top:0.20px;font-size:7.2px;color:#1e1a14;font-weight:bold;left:-1.00px;width:34.30px;text-align:center;">21</div></div>
<div class="a" style="left:1126.00px;top:341.80px;width:15.70px;height:9.50px;background:#3a3a3a;border:1px solid #2e2e2e;"><div class="t" style="top:0.20px;font-size:7.2px;color:#e8e8e8;font-weight:bold;left:-1.00px;width:15.70px;text-align:center;">S</div></div>
<div class="a" style="left:1145.60px;top:341.80px;width:15.20px;height:9.50px;background:#3a3a3a;border:1px solid #2e2e2e;"><svg style="left:3.9px;top:1.0px" width="8" height="8"><circle cx="3.6" cy="3.7" r="2.8" fill="#ececec"/><path d="M3.7 3.8L4.3 1.2" stroke="#2a2a2a" stroke-width="0.9"/></svg></div>
<div class="a" style="left:1165.50px;top:340.50px;width:2.00px;height:12.30px;background:#1a1a1a;"></div>
<div class="a" style="left:1168.60px;top:340.50px;width:2.10px;height:12.30px;background:#1a1a1a;"></div>
<div class="a" style="left:880.10px;top:354.60px;width:146.30px;height:13.30px;background:#ff93a5;"></div>
<svg style="left:880.80px;top:355.20px" width="12" height="12"><circle cx="6" cy="6" r="4.7" fill="none" stroke="#2a211c" stroke-width="0.85"/><path d="M4.7 3.7L8.2 6 4.7 8.3z" fill="#2a211c"/></svg>
<div class="t" style="top:357.00px;font-size:8.3px;color:#2a211c;font-weight:bold;left:896.70px;transform:scaleX(0.885);transform-origin:0 0;">22 PIANO FILTERED</div>
<div class="a" style="left:1027.00px;top:354.60px;width:57.00px;height:13.30px;background:#585858;"></div>
<div class="a" style="left:1085.00px;top:354.60px;width:88.00px;height:13.30px;background:#585858;"></div>
<div class="a" style="left:1029.30px;top:356.30px;width:52.70px;height:9.50px;background:#4a4a4a;border:1px solid #363636;"></div>
<div class="a" style="left:1088.00px;top:356.30px;width:34.30px;height:9.50px;background:#f39a22;border:1px solid #2c2c30;"><div class="t" style="top:0.70px;font-size:7.2px;color:#1e1a14;font-weight:bold;left:-1.00px;width:34.30px;text-align:center;">22</div></div>
<div class="a" style="left:1126.00px;top:356.30px;width:15.70px;height:9.50px;background:#3a3a3a;border:1px solid #2e2e2e;"><div class="t" style="top:0.70px;font-size:7.2px;color:#e8e8e8;font-weight:bold;left:-1.00px;width:15.70px;text-align:center;">S</div></div>
<div class="a" style="left:1145.60px;top:356.30px;width:15.20px;height:9.50px;background:#3a3a3a;border:1px solid #2e2e2e;"><svg style="left:3.9px;top:1.0px" width="8" height="8"><circle cx="3.6" cy="3.7" r="2.8" fill="#ececec"/><path d="M3.7 3.8L4.3 1.2" stroke="#2a2a2a" stroke-width="0.9"/></svg></div>
<div class="a" style="left:1165.50px;top:355.00px;width:2.00px;height:12.30px;background:#1a1a1a;"></div>
<div class="a" style="left:1168.60px;top:355.00px;width:2.10px;height:12.30px;background:#1a1a1a;"></div>
<div class="a" style="left:880.10px;top:369.10px;width:146.30px;height:13.30px;background:#ff93a5;"></div>
<svg style="left:880.80px;top:369.70px" width="12" height="12"><circle cx="6" cy="6" r="4.7" fill="none" stroke="#2a211c" stroke-width="0.85"/><path d="M4.7 3.7L8.2 6 4.7 8.3z" fill="#2a211c"/></svg>
<div class="t" style="top:372.00px;font-size:8.3px;color:#2a211c;font-weight:bold;left:896.70px;transform:scaleX(0.885);transform-origin:0 0;">23 BRASSY DRONE</div>
<div class="a" style="left:1027.00px;top:369.10px;width:57.00px;height:13.30px;background:#585858;"></div>
<div class="a" style="left:1085.00px;top:369.10px;width:88.00px;height:13.30px;background:#585858;"></div>
<div class="a" style="left:1029.30px;top:370.80px;width:52.70px;height:9.50px;background:#4a4a4a;border:1px solid #363636;"></div>
<div class="a" style="left:1088.00px;top:370.80px;width:34.30px;height:9.50px;background:#f39a22;border:1px solid #2c2c30;"><div class="t" style="top:0.20px;font-size:7.2px;color:#1e1a14;font-weight:bold;left:-1.00px;width:34.30px;text-align:center;">23</div></div>
<div class="a" style="left:1126.00px;top:370.80px;width:15.70px;height:9.50px;background:#3a3a3a;border:1px solid #2e2e2e;"><div class="t" style="top:0.20px;font-size:7.2px;color:#e8e8e8;font-weight:bold;left:-1.00px;width:15.70px;text-align:center;">S</div></div>
<div class="a" style="left:1145.60px;top:370.80px;width:15.20px;height:9.50px;background:#3a3a3a;border:1px solid #2e2e2e;"><svg style="left:3.9px;top:1.0px" width="8" height="8"><circle cx="3.6" cy="3.7" r="2.8" fill="#ececec"/><path d="M3.7 3.8L4.3 1.2" stroke="#2a2a2a" stroke-width="0.9"/></svg></div>
<div class="a" style="left:1165.50px;top:369.50px;width:2.00px;height:12.30px;background:#1a1a1a;"></div>
<div class="a" style="left:1168.60px;top:369.50px;width:2.10px;height:12.30px;background:#1a1a1a;"></div>
<div class="a" style="left:880.10px;top:383.60px;width:146.30px;height:13.30px;background:#886ce4;"></div>
<svg style="left:880.80px;top:384.20px" width="12" height="12"><circle cx="6" cy="6" r="4.7" fill="none" stroke="#2a211c" stroke-width="0.85"/><path d="M4.7 3.7L8.2 6 4.7 8.3z" fill="#2a211c"/></svg>
<div class="t" style="top:386.00px;font-size:8.3px;color:#2a211c;font-weight:bold;left:896.70px;transform:scaleX(0.885);transform-origin:0 0;">24 SUSTAINED STRING</div>
<div class="a" style="left:1027.00px;top:383.60px;width:57.00px;height:13.30px;background:#585858;"></div>
<div class="a" style="left:1085.00px;top:383.60px;width:88.00px;height:13.30px;background:#585858;"></div>
<div class="a" style="left:1029.30px;top:385.30px;width:52.70px;height:9.50px;background:#4a4a4a;border:1px solid #363636;"></div>
<div class="a" style="left:1088.00px;top:385.30px;width:34.30px;height:9.50px;background:#f39a22;border:1px solid #2c2c30;"><div class="t" style="top:0.70px;font-size:7.2px;color:#1e1a14;font-weight:bold;left:-1.00px;width:34.30px;text-align:center;">24</div></div>
<div class="a" style="left:1126.00px;top:385.30px;width:15.70px;height:9.50px;background:#3a3a3a;border:1px solid #2e2e2e;"><div class="t" style="top:0.70px;font-size:7.2px;color:#e8e8e8;font-weight:bold;left:-1.00px;width:15.70px;text-align:center;">S</div></div>
<div class="a" style="left:1145.60px;top:385.30px;width:15.20px;height:9.50px;background:#3a3a3a;border:1px solid #2e2e2e;"><svg style="left:3.9px;top:1.0px" width="8" height="8"><circle cx="3.6" cy="3.7" r="2.8" fill="#ececec"/><path d="M3.7 3.8L4.3 1.2" stroke="#2a2a2a" stroke-width="0.9"/></svg></div>
<div class="a" style="left:1165.50px;top:384.00px;width:2.00px;height:12.30px;background:#1a1a1a;"></div>
<div class="a" style="left:1168.60px;top:384.00px;width:2.10px;height:12.30px;background:#1a1a1a;"></div>
<div class="a" style="left:876.00px;top:398.10px;width:150.40px;height:53.05px;background:#b03436;"></div>
<svg style="left:877.00px;top:398.70px" width="12" height="12"><circle cx="6" cy="6" r="4.7" fill="none" stroke="#f2e4e4" stroke-width="0.85"/><path d="M4.0 4.5h2" stroke="#f2e4e4" stroke-width="0.8"/><rect x="5.2" y="5.2" width="2.9" height="2.4" fill="#f2e4e4"/></svg>
<div class="t" style="top:401.00px;font-size:8.3px;color:#f2e4e4;font-weight:bold;left:892.90px;transform:scaleX(0.885);transform-origin:0 0;">BASS GROUP</div>
<div class="a" style="left:1027.00px;top:398.10px;width:57.00px;height:53.05px;background:#636363;"></div>
<div class="a" style="left:1085.00px;top:398.10px;width:88.00px;height:53.05px;background:#636363;"></div>
<div class="a" style="left:1029.30px;top:400.10px;width:52.70px;height:9.40px;background:#2c2c2c;border:1px solid #262626;"><div class="t" style="top:1.00px;font-size:8px;color:#e6e6e6;font-weight:normal;-webkit-text-stroke:0.1px #e6e6e6;left:0.60px;letter-spacing:-0.1px;">Master</div><svg style="left:43.60px;top:3.04px" width="5.20" height="3.12"><path d="M0 0H5.20L2.60 3.12z" fill="#eee"/></svg></div>
<div class="a" style="left:1029.30px;top:413.10px;width:52.70px;height:9.40px;background:#4a4a4a;border:1px solid #363636;"></div>
<div class="a" style="left:1088.00px;top:400.10px;width:34.30px;height:9.40px;background:#f39a22;border:1px solid #2c2c30;"><div class="t" style="top:-0.10px;font-size:7.2px;color:#1e1a14;font-weight:bold;left:-1.00px;width:34.30px;text-align:center;">25</div></div>
<div class="a" style="left:1126.00px;top:400.10px;width:15.70px;height:9.40px;background:#3a3a3a;border:1px solid #2e2e2e;"><div class="t" style="top:-0.10px;font-size:7.2px;color:#e8e8e8;font-weight:bold;left:-1.00px;width:15.70px;text-align:center;">S</div></div>
<div class="a" style="left:1088.00px;top:413.10px;width:34.30px;height:9.40px;background:#333;border:1px solid #2a2a2a;"><div class="a" style="left:0;top:0;width:28.3px;height:100%;background:#1b7a8b"></div><div class="t" style="top:0.00px;font-size:7.2px;color:#e8e8e8;font-weight:bold;left:-1.00px;width:30.00px;text-align:center;">0</div></div>
<div class="a" style="left:1126.00px;top:413.10px;width:35.00px;height:9.40px;background:#333;border:1px solid #2e2e2e;"><div class="t" style="top:-0.10px;font-size:7.2px;color:#e8e8e8;font-weight:bold;left:-1.00px;width:35.00px;text-align:center;">C</div></div>
<div class="a" style="left:1087.80px;top:426.20px;width:22.90px;height:9.40px;background:#333;border:1px solid #2e2e2e;"><div class="t" style="top:-0.20px;font-size:8.3px;color:#e8e8e8;font-weight:normal;left:-1.00px;width:22.90px;text-align:center;">-inf</div></div>
<div class="a" style="left:1113.20px;top:426.20px;width:22.60px;height:9.40px;background:#333;border:1px solid #2e2e2e;"><div class="t" style="top:-0.20px;font-size:8.3px;color:#e8e8e8;font-weight:normal;left:-1.00px;width:22.60px;text-align:center;">-inf</div></div>
<div class="a" style="left:1165.50px;top:398.50px;width:2.00px;height:52.05px;background:#1a1a1a;"></div>
<div class="a" style="left:1168.60px;top:398.50px;width:2.10px;height:52.05px;background:#1a1a1a;"></div>
<div class="a" style="left:880.10px;top:452.35px;width:146.30px;height:13.20px;background:#b03436;"></div>
<svg style="left:880.80px;top:452.95px" width="12" height="12"><circle cx="6" cy="6" r="4.7" fill="none" stroke="#f2e4e4" stroke-width="0.85"/><path d="M4.7 3.7L8.2 6 4.7 8.3z" fill="#f2e4e4"/></svg>
<div class="t" style="top:455.00px;font-size:8.3px;color:#f2e4e4;font-weight:bold;left:896.70px;transform:scaleX(0.885);transform-origin:0 0;">26 MAIN BASS</div>
<div class="a" style="left:1027.00px;top:452.35px;width:57.00px;height:13.20px;background:#585858;"></div>
<div class="a" style="left:1085.00px;top:452.35px;width:88.00px;height:13.20px;background:#585858;"></div>
<div class="a" style="left:1029.30px;top:454.05px;width:52.70px;height:9.50px;background:#4a4a4a;border:1px solid #363636;"></div>
<div class="a" style="left:1088.00px;top:454.05px;width:34.30px;height:9.50px;background:#f39a22;border:1px solid #2c2c30;"><div class="t" style="top:-0.05px;font-size:7.2px;color:#1e1a14;font-weight:bold;left:-1.00px;width:34.30px;text-align:center;">26</div></div>
<div class="a" style="left:1126.00px;top:454.05px;width:15.70px;height:9.50px;background:#3a3a3a;border:1px solid #2e2e2e;"><div class="t" style="top:-0.05px;font-size:7.2px;color:#e8e8e8;font-weight:bold;left:-1.00px;width:15.70px;text-align:center;">S</div></div>
<div class="a" style="left:1145.60px;top:454.05px;width:15.20px;height:9.50px;background:#3a3a3a;border:1px solid #2e2e2e;"><svg style="left:3.9px;top:1.0px" width="8" height="8"><circle cx="3.6" cy="3.7" r="2.8" fill="#ececec"/><path d="M3.7 3.8L4.3 1.2" stroke="#2a2a2a" stroke-width="0.9"/></svg></div>
<div class="a" style="left:1165.50px;top:452.75px;width:2.00px;height:12.20px;background:#1a1a1a;"></div>
<div class="a" style="left:1168.60px;top:452.75px;width:2.10px;height:12.20px;background:#1a1a1a;"></div>
<div class="a" style="left:876.00px;top:466.75px;width:150.40px;height:13.20px;background:#886ce4;"></div>
<svg style="left:877.00px;top:467.35px" width="12" height="12"><circle cx="6" cy="6" r="4.7" fill="none" stroke="#2a211c" stroke-width="0.85"/><rect x="4.1" y="4.1" width="3.8" height="3.8" fill="#2a211c" opacity="0.75"/></svg>
<div class="t" style="top:469.00px;font-size:8.3px;color:#2a211c;font-weight:bold;left:892.90px;transform:scaleX(0.885);transform-origin:0 0;">FX GROUP</div>
<div class="a" style="left:1027.00px;top:466.75px;width:57.00px;height:13.20px;background:#585858;"></div>
<div class="a" style="left:1085.00px;top:466.75px;width:88.00px;height:13.20px;background:#585858;"></div>
<div class="a" style="left:1029.30px;top:468.45px;width:52.70px;height:9.50px;background:#4a4a4a;border:1px solid #363636;"></div>
<div class="a" style="left:1088.00px;top:468.45px;width:34.30px;height:9.50px;background:#f39a22;border:1px solid #2c2c30;"><div class="t" style="top:0.55px;font-size:7.2px;color:#1e1a14;font-weight:bold;left:-1.00px;width:34.30px;text-align:center;">27</div></div>
<div class="a" style="left:1126.00px;top:468.45px;width:15.70px;height:9.50px;background:#3a3a3a;border:1px solid #2e2e2e;"><div class="t" style="top:0.55px;font-size:7.2px;color:#e8e8e8;font-weight:bold;left:-1.00px;width:15.70px;text-align:center;">S</div></div>
<div class="a" style="left:1165.50px;top:467.15px;width:2.00px;height:12.20px;background:#1a1a1a;"></div>
<div class="a" style="left:1168.60px;top:467.15px;width:2.10px;height:12.20px;background:#1a1a1a;"></div>
<div class="a" style="left:876.00px;top:481.15px;width:150.40px;height:66.40px;background:#ffffff;"></div>
<svg style="left:877.00px;top:481.75px" width="12" height="12"><circle cx="6" cy="6" r="4.7" fill="none" stroke="#2a211c" stroke-width="0.85"/><path d="M4.0 4.5h2" stroke="#2a211c" stroke-width="0.8"/><rect x="5.2" y="5.2" width="2.9" height="2.4" fill="#2a211c"/></svg>
<div class="t" style="top:484.00px;font-size:8.3px;color:#2a211c;font-weight:bold;left:892.90px;transform:scaleX(0.885);transform-origin:0 0;">VOCAL GROUP</div>
<div class="a" style="left:1027.00px;top:481.15px;width:57.00px;height:66.40px;background:#636363;"></div>
<div class="a" style="left:1085.00px;top:481.15px;width:88.00px;height:66.40px;background:#636363;"></div>
<div class="a" style="left:1029.30px;top:483.15px;width:52.70px;height:9.40px;background:#2c2c2c;border:1px solid #262626;"><div class="t" style="top:1.00px;font-size:8px;color:#e6e6e6;font-weight:normal;-webkit-text-stroke:0.1px #e6e6e6;left:0.60px;letter-spacing:-0.1px;">Master</div><svg style="left:43.60px;top:3.04px" width="5.20" height="3.12"><path d="M0 0H5.20L2.60 3.12z" fill="#eee"/></svg></div>
<div class="a" style="left:1029.30px;top:496.15px;width:52.70px;height:9.40px;background:#4a4a4a;border:1px solid #363636;"></div>
<div class="a" style="left:1088.00px;top:483.15px;width:34.30px;height:9.40px;background:#f39a22;border:1px solid #2c2c30;"><div class="t" style="top:-0.15px;font-size:7.2px;color:#1e1a14;font-weight:bold;left:-1.00px;width:34.30px;text-align:center;">33</div></div>
<div class="a" style="left:1126.00px;top:483.15px;width:15.70px;height:9.40px;background:#3a3a3a;border:1px solid #2e2e2e;"><div class="t" style="top:-0.15px;font-size:7.2px;color:#e8e8e8;font-weight:bold;left:-1.00px;width:15.70px;text-align:center;">S</div></div>
<div class="a" style="left:1088.00px;top:496.15px;width:34.30px;height:9.40px;background:#333;border:1px solid #2a2a2a;"><div class="a" style="left:0;top:0;width:28.3px;height:100%;background:#1b7a8b"></div><div class="t" style="top:0.00px;font-size:7.2px;color:#e8e8e8;font-weight:bold;left:-1.00px;width:30.00px;text-align:center;">0</div></div>
<div class="a" style="left:1126.00px;top:496.15px;width:35.00px;height:9.40px;background:#333;border:1px solid #2e2e2e;"><div class="t" style="top:-0.15px;font-size:7.2px;color:#e8e8e8;font-weight:bold;left:-1.00px;width:35.00px;text-align:center;">C</div></div>
<div class="a" style="left:1087.80px;top:509.25px;width:22.90px;height:9.40px;background:#333;border:1px solid #2e2e2e;"><div class="t" style="top:-0.25px;font-size:8.3px;color:#e8e8e8;font-weight:normal;left:-1.00px;width:22.90px;text-align:center;">-inf</div></div>
<div class="a" style="left:1113.20px;top:509.25px;width:22.60px;height:9.40px;background:#333;border:1px solid #2e2e2e;"><div class="t" style="top:-0.25px;font-size:8.3px;color:#e8e8e8;font-weight:normal;left:-1.00px;width:22.60px;text-align:center;">-inf</div></div>
<div class="a" style="left:1165.50px;top:481.55px;width:2.00px;height:65.40px;background:#1a1a1a;"></div>
<div class="a" style="left:1168.60px;top:481.55px;width:2.10px;height:65.40px;background:#1a1a1a;"></div>
<div class="a" style="left:880.10px;top:548.75px;width:146.30px;height:13.35px;background:#ffffff;"></div>
<svg style="left:880.80px;top:549.35px" width="12" height="12"><circle cx="6" cy="6" r="4.7" fill="none" stroke="#2a211c" stroke-width="0.85"/><path d="M4.7 3.7L8.2 6 4.7 8.3z" fill="#2a211c"/></svg>
<div class="t" style="top:551.00px;font-size:8.3px;color:#2a211c;font-weight:bold;left:896.70px;transform:scaleX(0.885);transform-origin:0 0;">34 VOCAL HOOK</div>
<div class="a" style="left:1027.00px;top:548.75px;width:57.00px;height:13.35px;background:#585858;"></div>
<div class="a" style="left:1085.00px;top:548.75px;width:88.00px;height:13.35px;background:#585858;"></div>
<div class="a" style="left:1029.30px;top:550.45px;width:52.70px;height:9.50px;background:#4a4a4a;border:1px solid #363636;"></div>
<div class="a" style="left:1088.00px;top:550.45px;width:34.30px;height:9.50px;background:#f39a22;border:1px solid #2c2c30;"><div class="t" style="top:0.55px;font-size:7.2px;color:#1e1a14;font-weight:bold;left:-1.00px;width:34.30px;text-align:center;">34</div></div>
<div class="a" style="left:1126.00px;top:550.45px;width:15.70px;height:9.50px;background:#3a3a3a;border:1px solid #2e2e2e;"><div class="t" style="top:0.55px;font-size:7.2px;color:#e8e8e8;font-weight:bold;left:-1.00px;width:15.70px;text-align:center;">S</div></div>
<div class="a" style="left:1145.60px;top:550.45px;width:15.20px;height:9.50px;background:#3a3a3a;border:1px solid #2e2e2e;"><svg style="left:3.9px;top:1.0px" width="8" height="8"><circle cx="3.6" cy="3.7" r="2.8" fill="#ececec"/><path d="M3.7 3.8L4.3 1.2" stroke="#2a2a2a" stroke-width="0.9"/></svg></div>
<div class="a" style="left:1165.50px;top:549.15px;width:2.00px;height:12.35px;background:#1a1a1a;"></div>
<div class="a" style="left:1168.60px;top:549.15px;width:2.10px;height:12.35px;background:#1a1a1a;"></div>
<div class="a" style="left:880.10px;top:563.30px;width:146.30px;height:13.35px;background:#ffffff;"></div>
<svg style="left:880.80px;top:563.90px" width="12" height="12"><circle cx="6" cy="6" r="4.7" fill="none" stroke="#2a211c" stroke-width="0.85"/><path d="M4.7 3.7L8.2 6 4.7 8.3z" fill="#2a211c"/></svg>
<div class="t" style="top:566.00px;font-size:8.3px;color:#2a211c;font-weight:bold;left:896.70px;transform:scaleX(0.885);transform-origin:0 0;">35 VOCAL CHOP LOOP</div>
<div class="a" style="left:1027.00px;top:563.30px;width:57.00px;height:13.35px;background:#585858;"></div>
<div class="a" style="left:1085.00px;top:563.30px;width:88.00px;height:13.35px;background:#585858;"></div>
<div class="a" style="left:1029.30px;top:565.00px;width:52.70px;height:9.50px;background:#4a4a4a;border:1px solid #363636;"></div>
<div class="a" style="left:1088.00px;top:565.00px;width:34.30px;height:9.50px;background:#f39a22;border:1px solid #2c2c30;"><div class="t" style="top:0.00px;font-size:7.2px;color:#1e1a14;font-weight:bold;left:-1.00px;width:34.30px;text-align:center;">35</div></div>
<div class="a" style="left:1126.00px;top:565.00px;width:15.70px;height:9.50px;background:#3a3a3a;border:1px solid #2e2e2e;"><div class="t" style="top:0.00px;font-size:7.2px;color:#e8e8e8;font-weight:bold;left:-1.00px;width:15.70px;text-align:center;">S</div></div>
<div class="a" style="left:1145.60px;top:565.00px;width:15.20px;height:9.50px;background:#3a3a3a;border:1px solid #2e2e2e;"><svg style="left:3.9px;top:1.0px" width="8" height="8"><circle cx="3.6" cy="3.7" r="2.8" fill="#ececec"/><path d="M3.7 3.8L4.3 1.2" stroke="#2a2a2a" stroke-width="0.9"/></svg></div>
<div class="a" style="left:1165.50px;top:563.70px;width:2.00px;height:12.35px;background:#1a1a1a;"></div>
<div class="a" style="left:1168.60px;top:563.70px;width:2.10px;height:12.35px;background:#1a1a1a;"></div>
<div class="a" style="left:880.10px;top:577.85px;width:146.30px;height:13.35px;background:#ffffff;"></div>
<svg style="left:880.80px;top:578.45px" width="12" height="12"><circle cx="6" cy="6" r="4.7" fill="none" stroke="#2a211c" stroke-width="0.85"/><path d="M4.7 3.7L8.2 6 4.7 8.3z" fill="#2a211c"/></svg>
<div class="t" style="top:580.00px;font-size:8.3px;color:#2a211c;font-weight:bold;left:896.70px;transform:scaleX(0.885);transform-origin:0 0;">36 VOCAL ATMOS LOOP</div>
<div class="a" style="left:1027.00px;top:577.85px;width:57.00px;height:13.35px;background:#585858;"></div>
<div class="a" style="left:1085.00px;top:577.85px;width:88.00px;height:13.35px;background:#585858;"></div>
<div class="a" style="left:1029.30px;top:579.55px;width:52.70px;height:9.50px;background:#4a4a4a;border:1px solid #363636;"></div>
<div class="a" style="left:1088.00px;top:579.55px;width:34.30px;height:9.50px;background:#f39a22;border:1px solid #2c2c30;"><div class="t" style="top:0.45px;font-size:7.2px;color:#1e1a14;font-weight:bold;left:-1.00px;width:34.30px;text-align:center;">36</div></div>
<div class="a" style="left:1126.00px;top:579.55px;width:15.70px;height:9.50px;background:#3a3a3a;border:1px solid #2e2e2e;"><div class="t" style="top:0.45px;font-size:7.2px;color:#e8e8e8;font-weight:bold;left:-1.00px;width:15.70px;text-align:center;">S</div></div>
<div class="a" style="left:1145.60px;top:579.55px;width:15.20px;height:9.50px;background:#3a3a3a;border:1px solid #2e2e2e;"><svg style="left:3.9px;top:1.0px" width="8" height="8"><circle cx="3.6" cy="3.7" r="2.8" fill="#ececec"/><path d="M3.7 3.8L4.3 1.2" stroke="#2a2a2a" stroke-width="0.9"/></svg></div>
<div class="a" style="left:1165.50px;top:578.25px;width:2.00px;height:12.35px;background:#1a1a1a;"></div>
<div class="a" style="left:1168.60px;top:578.25px;width:2.10px;height:12.35px;background:#1a1a1a;"></div>
<div class="a" style="left:880.10px;top:592.40px;width:146.30px;height:13.35px;background:#ffffff;"></div>
<svg style="left:880.80px;top:593.00px" width="12" height="12"><circle cx="6" cy="6" r="4.7" fill="none" stroke="#2a211c" stroke-width="0.85"/><path d="M4.7 3.7L8.2 6 4.7 8.3z" fill="#2a211c"/></svg>
<div class="t" style="top:595.00px;font-size:8.3px;color:#2a211c;font-weight:bold;left:896.70px;transform:scaleX(0.885);transform-origin:0 0;">37 VOCAL ATMOS LOOP 2</div>
<div class="a" style="left:1027.00px;top:592.40px;width:57.00px;height:13.35px;background:#585858;"></div>
<div class="a" style="left:1085.00px;top:592.40px;width:88.00px;height:13.35px;background:#585858;"></div>
<div class="a" style="left:1029.30px;top:594.10px;width:52.70px;height:9.50px;background:#4a4a4a;border:1px solid #363636;"></div>
<div class="a" style="left:1088.00px;top:594.10px;width:34.30px;height:9.50px;background:#f39a22;border:1px solid #2c2c30;"><div class="t" style="top:-0.10px;font-size:7.2px;color:#1e1a14;font-weight:bold;left:-1.00px;width:34.30px;text-align:center;">37</div></div>
<div class="a" style="left:1126.00px;top:594.10px;width:15.70px;height:9.50px;background:#3a3a3a;border:1px solid #2e2e2e;"><div class="t" style="top:-0.10px;font-size:7.2px;color:#e8e8e8;font-weight:bold;left:-1.00px;width:15.70px;text-align:center;">S</div></div>
<div class="a" style="left:1145.60px;top:594.10px;width:15.20px;height:9.50px;background:#3a3a3a;border:1px solid #2e2e2e;"><svg style="left:3.9px;top:1.0px" width="8" height="8"><circle cx="3.6" cy="3.7" r="2.8" fill="#ececec"/><path d="M3.7 3.8L4.3 1.2" stroke="#2a2a2a" stroke-width="0.9"/></svg></div>
<div class="a" style="left:1165.50px;top:592.80px;width:2.00px;height:12.35px;background:#1a1a1a;"></div>
<div class="a" style="left:1168.60px;top:592.80px;width:2.10px;height:12.35px;background:#1a1a1a;"></div>
<div class="a" style="left:880.10px;top:606.95px;width:146.30px;height:13.35px;background:#ffffff;"></div>
<svg style="left:880.80px;top:607.55px" width="12" height="12"><circle cx="6" cy="6" r="4.7" fill="none" stroke="#2a211c" stroke-width="0.85"/><path d="M4.7 3.7L8.2 6 4.7 8.3z" fill="#2a211c"/></svg>
<div class="t" style="top:609.00px;font-size:8.3px;color:#2a211c;font-weight:bold;left:896.70px;transform:scaleX(0.885);transform-origin:0 0;">38 VOCAL SHOUT</div>
<div class="a" style="left:1027.00px;top:606.95px;width:57.00px;height:13.35px;background:#585858;"></div>
<div class="a" style="left:1085.00px;top:606.95px;width:88.00px;height:13.35px;background:#585858;"></div>
<div class="a" style="left:1029.30px;top:608.65px;width:52.70px;height:9.50px;background:#4a4a4a;border:1px solid #363636;"></div>
<div class="a" style="left:1088.00px;top:608.65px;width:34.30px;height:9.50px;background:#f39a22;border:1px solid #2c2c30;"><div class="t" style="top:0.35px;font-size:7.2px;color:#1e1a14;font-weight:bold;left:-1.00px;width:34.30px;text-align:center;">38</div></div>
<div class="a" style="left:1126.00px;top:608.65px;width:15.70px;height:9.50px;background:#3a3a3a;border:1px solid #2e2e2e;"><div class="t" style="top:0.35px;font-size:7.2px;color:#e8e8e8;font-weight:bold;left:-1.00px;width:15.70px;text-align:center;">S</div></div>
<div class="a" style="left:1145.60px;top:608.65px;width:15.20px;height:9.50px;background:#e2302c;border:1px solid #2e2e2e;"><svg style="left:3.9px;top:1.0px" width="8" height="8"><circle cx="3.6" cy="3.7" r="2.8" fill="#ececec"/><path d="M3.7 3.8L4.3 1.2" stroke="#2a2a2a" stroke-width="0.9"/></svg></div>
<div class="a" style="left:1165.50px;top:607.35px;width:2.00px;height:12.35px;background:#1a1a1a;"></div>
<div class="a" style="left:1168.60px;top:607.35px;width:2.10px;height:12.35px;background:#1a1a1a;"></div>
<div class="a" style="left:880.10px;top:621.50px;width:146.30px;height:13.35px;background:#ffffff;"></div>
<svg style="left:880.80px;top:622.10px" width="12" height="12"><circle cx="6" cy="6" r="4.7" fill="none" stroke="#2a211c" stroke-width="0.85"/><path d="M4.7 3.7L8.2 6 4.7 8.3z" fill="#2a211c"/></svg>
<div class="t" style="top:624.00px;font-size:8.3px;color:#2a211c;font-weight:bold;left:896.70px;transform:scaleX(0.885);transform-origin:0 0;">39 VOCAL ATMOS LOOP 3</div>
<div class="a" style="left:1027.00px;top:621.50px;width:57.00px;height:13.35px;background:#585858;"></div>
<div class="a" style="left:1085.00px;top:621.50px;width:88.00px;height:13.35px;background:#585858;"></div>
<div class="a" style="left:1029.30px;top:623.20px;width:52.70px;height:9.50px;background:#4a4a4a;border:1px solid #363636;"></div>
<div class="a" style="left:1088.00px;top:623.20px;width:34.30px;height:9.50px;background:#f39a22;border:1px solid #2c2c30;"><div class="t" style="top:-0.20px;font-size:7.2px;color:#1e1a14;font-weight:bold;left:-1.00px;width:34.30px;text-align:center;">39</div></div>
<div class="a" style="left:1126.00px;top:623.20px;width:15.70px;height:9.50px;background:#3a3a3a;border:1px solid #2e2e2e;"><div class="t" style="top:-0.20px;font-size:7.2px;color:#e8e8e8;font-weight:bold;left:-1.00px;width:15.70px;text-align:center;">S</div></div>
<div class="a" style="left:1145.60px;top:623.20px;width:15.20px;height:9.50px;background:#3a3a3a;border:1px solid #2e2e2e;"><svg style="left:3.9px;top:1.0px" width="8" height="8"><circle cx="3.6" cy="3.7" r="2.8" fill="#ececec"/><path d="M3.7 3.8L4.3 1.2" stroke="#2a2a2a" stroke-width="0.9"/></svg></div>
<div class="a" style="left:1165.50px;top:621.90px;width:2.00px;height:12.35px;background:#1a1a1a;"></div>
<div class="a" style="left:1168.60px;top:621.90px;width:2.10px;height:12.35px;background:#1a1a1a;"></div>
<div class="a" style="left:876.00px;top:636.05px;width:297.00px;height:27.35px;background:#474747;"></div>
<div class="a" style="left:876.00px;top:664.60px;width:150.40px;height:14.20px;background:#3c3c3c;"></div>
<div class="a" style="left:1027.00px;top:664.60px;width:57.00px;height:14.20px;background:#3c3c3c;"></div>
<div class="a" style="left:1085.00px;top:664.60px;width:88.00px;height:14.20px;background:#3c3c3c;"></div>
<svg style="left:877.00px;top:665.30px" width="12" height="12"><circle cx="6" cy="6" r="4.7" fill="none" stroke="#b8b8b8" stroke-width="0.85"/><path d="M4.7 3.7L8.2 6 4.7 8.3z" fill="#b8b8b8"/></svg>
<div class="t" style="top:667.00px;font-size:8.3px;color:#e8e8e8;font-weight:bold;left:893.30px;transform:scaleX(0.92);transform-origin:0 0;">A Reverb</div>
<div class="a" style="left:1029.30px;top:666.40px;width:52.70px;height:9.50px;background:#4a4a4a;border:1px solid #363636;"></div>
<div class="a" style="left:1088.50px;top:666.40px;width:33.90px;height:9.50px;background:#f39a22;border:1px solid #2c2c30;"><div class="t" style="top:0.60px;font-size:7.2px;color:#1e1a14;font-weight:bold;left:-1.00px;width:33.90px;text-align:center;">A</div></div>
<div class="a" style="left:1126.50px;top:666.40px;width:11.70px;height:9.50px;background:#3a3a3a;border:1px solid #2e2e2e;"><div class="t" style="top:0.60px;font-size:7.2px;color:#e8e8e8;font-weight:bold;left:-1.00px;width:11.70px;text-align:center;">S</div></div>
<div class="a" style="left:1142.40px;top:666.40px;width:18.00px;height:9.50px;background:#f39a22;border:1px solid #2c2c30;"><div class="t" style="top:0.00px;font-size:7.6px;color:#1e1a14;font-weight:normal;-webkit-text-stroke:0.1px #1e1a14;left:0.30px;transform:scaleX(0.95);transform-origin:0 0;">Post</div></div>
<div class="a" style="left:1165.50px;top:665.00px;width:2.00px;height:13.20px;background:#1a1a1a;"></div>
<div class="a" style="left:1168.60px;top:665.00px;width:2.10px;height:13.20px;background:#1a1a1a;"></div>
<div class="a" style="left:876.00px;top:680.00px;width:150.40px;height:14.00px;background:#3c3c3c;"></div>
<div class="a" style="left:1027.00px;top:680.00px;width:57.00px;height:14.00px;background:#3c3c3c;"></div>
<div class="a" style="left:1085.00px;top:680.00px;width:88.00px;height:14.00px;background:#3c3c3c;"></div>
<svg style="left:877.00px;top:680.70px" width="12" height="12"><circle cx="6" cy="6" r="4.7" fill="none" stroke="#b8b8b8" stroke-width="0.85"/><path d="M4.7 3.7L8.2 6 4.7 8.3z" fill="#b8b8b8"/></svg>
<div class="t" style="top:683.00px;font-size:8.3px;color:#e8e8e8;font-weight:bold;left:893.30px;transform:scaleX(0.92);transform-origin:0 0;">B Delay</div>
<div class="a" style="left:1029.30px;top:681.80px;width:52.70px;height:9.50px;background:#4a4a4a;border:1px solid #363636;"></div>
<div class="a" style="left:1088.50px;top:681.80px;width:33.90px;height:9.50px;background:#f39a22;border:1px solid #2c2c30;"><div class="t" style="top:0.20px;font-size:7.2px;color:#1e1a14;font-weight:bold;left:-1.00px;width:33.90px;text-align:center;">B</div></div>
<div class="a" style="left:1126.50px;top:681.80px;width:11.70px;height:9.50px;background:#3a3a3a;border:1px solid #2e2e2e;"><div class="t" style="top:0.20px;font-size:7.2px;color:#e8e8e8;font-weight:bold;left:-1.00px;width:11.70px;text-align:center;">S</div></div>
<div class="a" style="left:1142.40px;top:681.80px;width:18.00px;height:9.50px;background:#f39a22;border:1px solid #2c2c30;"><div class="t" style="top:0.00px;font-size:7.6px;color:#1e1a14;font-weight:normal;-webkit-text-stroke:0.1px #1e1a14;left:0.30px;transform:scaleX(0.95);transform-origin:0 0;">Post</div></div>
<div class="a" style="left:1165.50px;top:680.40px;width:2.00px;height:13.00px;background:#1a1a1a;"></div>
<div class="a" style="left:1168.60px;top:680.40px;width:2.10px;height:13.00px;background:#1a1a1a;"></div>
<div class="a" style="left:876.00px;top:695.20px;width:150.40px;height:12.80px;background:#3c3c3c;"></div>
<div class="a" style="left:1027.00px;top:695.20px;width:57.00px;height:12.80px;background:#3c3c3c;"></div>
<div class="a" style="left:1085.00px;top:695.20px;width:88.00px;height:12.80px;background:#3c3c3c;"></div>
<svg style="left:877.00px;top:695.90px" width="12" height="12"><circle cx="6" cy="6" r="4.7" fill="none" stroke="#b8b8b8" stroke-width="0.85"/><path d="M4.7 3.7L8.2 6 4.7 8.3z" fill="#b8b8b8"/></svg>
<div class="t" style="top:698.00px;font-size:8.3px;color:#e8e8e8;font-weight:bold;left:894.50px;transform:scaleX(0.92);transform-origin:0 0;">Master</div>
<div class="a" style="left:1029.30px;top:697.00px;width:52.70px;height:9.50px;background:#2c2c2c;border:1px solid #262626;"><div class="t" style="top:1.00px;font-size:8px;color:#e6e6e6;font-weight:normal;-webkit-text-stroke:0.1px #e6e6e6;left:8.00px;">1/2</div><svg style="left:43.60px;top:3.04px" width="5.20" height="3.12"><path d="M0 0H5.20L2.60 3.12z" fill="#eee"/></svg><div class="a" style="left:1.6px;top:2.2px;width:3.4px;height:4.6px;border-left:1px solid #8a8a8a;border-right:1px solid #8a8a8a"></div></div>
<div class="a" style="left:1088.50px;top:697.00px;width:33.90px;height:9.50px;background:#333;border:1px solid #2a2a2a;"><div class="a" style="left:0;top:0;width:27.7px;height:100%;background:#1b7a8b"></div><div class="t" style="top:0.00px;font-size:7.2px;color:#e8e8e8;font-weight:bold;left:-1.00px;width:29.00px;text-align:center;">0</div></div>
<div class="a" style="left:1126.50px;top:697.00px;width:33.90px;height:9.50px;background:#333;border:1px solid #2a2a2a;"><div class="a" style="left:0;top:0;width:27.7px;height:100%;background:#2f7fd6"></div><div class="t" style="top:0.00px;font-size:7.2px;color:#e8e8e8;font-weight:bold;left:-1.00px;width:29.00px;text-align:center;">0</div></div>
<div class="a" style="left:1165.50px;top:695.60px;width:2.00px;height:11.80px;background:#1a1a1a;"></div>
<div class="a" style="left:1168.60px;top:695.60px;width:2.10px;height:11.80px;background:#1a1a1a;"></div>
<div class="a" style="left:878.00px;top:63.30px;width:21.70px;height:8.80px;background:#3a3a3a;border-radius:4.4px;"><div class="t" style="top:1.00px;font-size:8px;color:#eeeeee;font-weight:bold;left:4.20px;">Set</div></div>
<svg style="left:877px;top:74px" width="24" height="11"><circle cx="5.4" cy="5.1" r="4.3" fill="#3a3a3a"/><path d="M3.0 5.1L5.6 3.0v4.2z" fill="#eee"/><rect x="5.2" y="4.4" width="2.8" height="1.4" fill="#eee"/><circle cx="18.2" cy="5.1" r="4.3" fill="#3a3a3a"/><path d="M20.6 5.1L18 3.0v4.2z" fill="#666"/><rect x="15.4" y="4.4" width="2.8" height="1.4" fill="#666"/></svg>
<div class="a" style="left:910.00px;top:74.80px;width:15.60px;height:8.40px;background:#333;"><svg style="left:4.3px;top:1px" width="8" height="7"><path d="M1.5 5.6L6.2 1.4" stroke="#eee" stroke-width="1.1"/><circle cx="1.6" cy="5.5" r="1.1" fill="#eee"/><circle cx="6.1" cy="1.5" r="1.1" fill="#eee"/></svg></div>
<div class="a" style="left:930.00px;top:74.80px;width:16.10px;height:8.40px;background:#333;"><svg style="left:4.5px;top:0.8px" width="8" height="7"><path d="M2.2 3.3V2.4a1.8 1.8 0 0 1 3.6 0v0.9" stroke="#eee" stroke-width="1" fill="none"/><rect x="1.2" y="3.3" width="5.6" height="3.6" fill="#eee"/></svg></div>
<div class="a" style="left:1140.80px;top:30.70px;width:13.20px;height:9.00px;background:#333;"><div class="t" style="top:1.00px;font-size:7.6px;color:#e6e6e6;font-weight:bold;left:0.00px;width:13.20px;text-align:center;">H</div></div>
<div class="a" style="left:1157.90px;top:30.70px;width:14.40px;height:9.00px;background:#333;"><div class="t" style="top:1.00px;font-size:7.6px;color:#e6e6e6;font-weight:bold;left:0.00px;width:14.40px;text-align:center;">W</div></div>
<div class="a" style="left:1180.50px;top:70.00px;width:5.50px;height:563.50px;background:#4a4a4a;border-radius:3px;"></div>
<svg style="left:1177.6px;top:646.50px" width="12" height="12"><circle cx="6" cy="6" r="5.4" fill="#f0a030"/></svg>
<div class="t" style="top:650.00px;font-size:4.8px;color:#2a2010;font-weight:bold;left:1177.60px;width:12.00px;text-align:center;">I-O</div>
<svg style="left:1177.6px;top:661.00px" width="12" height="12"><circle cx="6" cy="6" r="5.4" fill="#f0a030"/></svg>
<div class="t" style="top:665.00px;font-size:5.6px;color:#2a2010;font-weight:bold;left:1177.60px;width:12.00px;text-align:center;">R</div>
<svg style="left:1177.6px;top:675.50px" width="12" height="12"><circle cx="6" cy="6" r="5.4" fill="#f0a030"/></svg>
<div class="t" style="top:680.00px;font-size:5.6px;color:#2a2010;font-weight:bold;left:1177.60px;width:12.00px;text-align:center;">M</div>
<svg style="left:1177.6px;top:690.00px" width="12" height="12"><circle cx="6" cy="6" r="5.4" fill="#8c8c8c"/></svg>
<div class="t" style="top:694.00px;font-size:5.6px;color:#333;font-weight:bold;left:1177.60px;width:12.00px;text-align:center;">D</div>
<div class="t" style="top:646.00px;font-size:8.3px;color:#d4d4d4;font-weight:normal;-webkit-text-stroke:0.2px #d4d4d4;left:399.00px;letter-spacing:-0.12px;">Drop Files and Devices Here</div>
<div class="a" style="left:24.00px;top:708.00px;width:850.50px;height:12.00px;background:#1e1e1e;"></div>
<svg style="left:26.60px;top:708.4px" width="3" height="8"><path d="M0.5 0V5.4H2" stroke="#8c8c8c" stroke-width="0.9" fill="none"/></svg>
<div class="t" style="top:709.00px;font-size:8.3px;color:#d8d8d8;font-weight:normal;-webkit-text-stroke:0.1px #d8d8d8;left:30.10px;letter-spacing:-0.15px;">0:00</div>
<div class="a" style="left:39.14px;top:708.40px;width:1.00px;height:1.40px;background:#6a6a6a;"></div>
<div class="a" style="left:51.58px;top:708.40px;width:1.00px;height:1.40px;background:#6a6a6a;"></div>
<div class="a" style="left:64.02px;top:708.40px;width:1.00px;height:1.40px;background:#6a6a6a;"></div>
<div class="a" style="left:76.46px;top:708.40px;width:1.00px;height:1.40px;background:#6a6a6a;"></div>
<div class="a" style="left:88.90px;top:708.40px;width:1.00px;height:1.40px;background:#6a6a6a;"></div>
<svg style="left:101.24px;top:708.4px" width="3" height="8"><path d="M0.5 0V5.4H2" stroke="#8c8c8c" stroke-width="0.9" fill="none"/></svg>
<div class="t" style="top:709.00px;font-size:8.3px;color:#d8d8d8;font-weight:normal;-webkit-text-stroke:0.1px #d8d8d8;left:104.74px;letter-spacing:-0.15px;">0:30</div>
<div class="a" style="left:113.78px;top:708.40px;width:1.00px;height:1.40px;background:#6a6a6a;"></div>
<div class="a" style="left:126.22px;top:708.40px;width:1.00px;height:1.40px;background:#6a6a6a;"></div>
<div class="a" style="left:138.66px;top:708.40px;width:1.00px;height:1.40px;background:#6a6a6a;"></div>
<div class="a" style="left:151.10px;top:708.40px;width:1.00px;height:1.40px;background:#6a6a6a;"></div>
<div class="a" style="left:163.54px;top:708.40px;width:1.00px;height:1.40px;background:#6a6a6a;"></div>
<svg style="left:175.88px;top:708.4px" width="3" height="8"><path d="M0.5 0V5.4H2" stroke="#8c8c8c" stroke-width="0.9" fill="none"/></svg>
<div class="t" style="top:709.00px;font-size:8.3px;color:#d8d8d8;font-weight:normal;-webkit-text-stroke:0.1px #d8d8d8;left:179.38px;letter-spacing:-0.15px;">1:00</div>
<div class="a" style="left:188.42px;top:708.40px;width:1.00px;height:1.40px;background:#6a6a6a;"></div>
<div class="a" style="left:200.86px;top:708.40px;width:1.00px;height:1.40px;background:#6a6a6a;"></div>
<div class="a" style="left:213.30px;top:708.40px;width:1.00px;height:1.40px;background:#6a6a6a;"></div>
<div class="a" style="left:225.74px;top:708.40px;width:1.00px;height:1.40px;background:#6a6a6a;"></div>
<div class="a" style="left:238.18px;top:708.40px;width:1.00px;height:1.40px;background:#6a6a6a;"></div>
<svg style="left:250.52px;top:708.4px" width="3" height="8"><path d="M0.5 0V5.4H2" stroke="#8c8c8c" stroke-width="0.9" fill="none"/></svg>
<div class="t" style="top:709.00px;font-size:8.3px;color:#d8d8d8;font-weight:normal;-webkit-text-stroke:0.1px #d8d8d8;left:254.02px;letter-spacing:-0.15px;">1:30</div>
<div class="a" style="left:263.06px;top:708.40px;width:1.00px;height:1.40px;background:#6a6a6a;"></div>
<div class="a" style="left:275.50px;top:708.40px;width:1.00px;height:1.40px;background:#6a6a6a;"></div>
<div class="a" style="left:287.94px;top:708.40px;width:1.00px;height:1.40px;background:#6a6a6a;"></div>
<div class="a" style="left:300.38px;top:708.40px;width:1.00px;height:1.40px;background:#6a6a6a;"></div>
<div class="a" style="left:312.82px;top:708.40px;width:1.00px;height:1.40px;background:#6a6a6a;"></div>
<svg style="left:325.16px;top:708.4px" width="3" height="8"><path d="M0.5 0V5.4H2" stroke="#8c8c8c" stroke-width="0.9" fill="none"/></svg>
<div class="t" style="top:709.00px;font-size:8.3px;color:#d8d8d8;font-weight:normal;-webkit-text-stroke:0.1px #d8d8d8;left:328.66px;letter-spacing:-0.15px;">2:00</div>
<div class="a" style="left:337.70px;top:708.40px;width:1.00px;height:1.40px;background:#6a6a6a;"></div>
<div class="a" style="left:350.14px;top:708.40px;width:1.00px;height:1.40px;background:#6a6a6a;"></div>
<div class="a" style="left:362.58px;top:708.40px;width:1.00px;height:1.40px;background:#6a6a6a;"></div>
<div class="a" style="left:375.02px;top:708.40px;width:1.00px;height:1.40px;background:#6a6a6a;"></div>
<div class="a" style="left:387.46px;top:708.40px;width:1.00px;height:1.40px;background:#6a6a6a;"></div>
<svg style="left:399.80px;top:708.4px" width="3" height="8"><path d="M0.5 0V5.4H2" stroke="#8c8c8c" stroke-width="0.9" fill="none"/></svg>
<div class="t" style="top:709.00px;font-size:8.3px;color:#d8d8d8;font-weight:normal;-webkit-text-stroke:0.1px #d8d8d8;left:403.30px;letter-spacing:-0.15px;">2:30</div>
<div class="a" style="left:412.34px;top:708.40px;width:1.00px;height:1.40px;background:#6a6a6a;"></div>
<div class="a" style="left:424.78px;top:708.40px;width:1.00px;height:1.40px;background:#6a6a6a;"></div>
<div class="a" style="left:437.22px;top:708.40px;width:1.00px;height:1.40px;background:#6a6a6a;"></div>
<div class="a" style="left:449.66px;top:708.40px;width:1.00px;height:1.40px;background:#6a6a6a;"></div>
<div class="a" style="left:462.10px;top:708.40px;width:1.00px;height:1.40px;background:#6a6a6a;"></div>
<svg style="left:474.44px;top:708.4px" width="3" height="8"><path d="M0.5 0V5.4H2" stroke="#8c8c8c" stroke-width="0.9" fill="none"/></svg>
<div class="t" style="top:709.00px;font-size:8.3px;color:#d8d8d8;font-weight:normal;-webkit-text-stroke:0.1px #d8d8d8;left:477.94px;letter-spacing:-0.15px;">3:00</div>
<div class="a" style="left:486.98px;top:708.40px;width:1.00px;height:1.40px;background:#6a6a6a;"></div>
<div class="a" style="left:499.42px;top:708.40px;width:1.00px;height:1.40px;background:#6a6a6a;"></div>
<div class="a" style="left:511.86px;top:708.40px;width:1.00px;height:1.40px;background:#6a6a6a;"></div>
<div class="a" style="left:524.29px;top:708.40px;width:1.00px;height:1.40px;background:#6a6a6a;"></div>
<div class="a" style="left:536.73px;top:708.40px;width:1.00px;height:1.40px;background:#6a6a6a;"></div>
<svg style="left:549.07px;top:708.4px" width="3" height="8"><path d="M0.5 0V5.4H2" stroke="#8c8c8c" stroke-width="0.9" fill="none"/></svg>
<div class="t" style="top:709.00px;font-size:8.3px;color:#d8d8d8;font-weight:normal;-webkit-text-stroke:0.1px #d8d8d8;left:552.57px;letter-spacing:-0.15px;">3:30</div>
<div class="a" style="left:561.61px;top:708.40px;width:1.00px;height:1.40px;background:#6a6a6a;"></div>
<div class="a" style="left:574.05px;top:708.40px;width:1.00px;height:1.40px;background:#6a6a6a;"></div>
<div class="a" style="left:586.49px;top:708.40px;width:1.00px;height:1.40px;background:#6a6a6a;"></div>
<div class="a" style="left:598.93px;top:708.40px;width:1.00px;height:1.40px;background:#6a6a6a;"></div>
<div class="a" style="left:611.37px;top:708.40px;width:1.00px;height:1.40px;background:#6a6a6a;"></div>
<svg style="left:623.71px;top:708.4px" width="3" height="8"><path d="M0.5 0V5.4H2" stroke="#8c8c8c" stroke-width="0.9" fill="none"/></svg>
<div class="t" style="top:709.00px;font-size:8.3px;color:#d8d8d8;font-weight:normal;-webkit-text-stroke:0.1px #d8d8d8;left:627.21px;letter-spacing:-0.15px;">4:00</div>
<div class="a" style="left:636.25px;top:708.40px;width:1.00px;height:1.40px;background:#6a6a6a;"></div>
<div class="a" style="left:648.69px;top:708.40px;width:1.00px;height:1.40px;background:#6a6a6a;"></div>
<div class="a" style="left:661.13px;top:708.40px;width:1.00px;height:1.40px;background:#6a6a6a;"></div>
<div class="a" style="left:673.57px;top:708.40px;width:1.00px;height:1.40px;background:#6a6a6a;"></div>
<div class="a" style="left:686.01px;top:708.40px;width:1.00px;height:1.40px;background:#6a6a6a;"></div>
<svg style="left:698.35px;top:708.4px" width="3" height="8"><path d="M0.5 0V5.4H2" stroke="#8c8c8c" stroke-width="0.9" fill="none"/></svg>
<div class="t" style="top:709.00px;font-size:8.3px;color:#d8d8d8;font-weight:normal;-webkit-text-stroke:0.1px #d8d8d8;left:701.85px;letter-spacing:-0.15px;">4:30</div>
<div class="a" style="left:710.89px;top:708.40px;width:1.00px;height:1.40px;background:#6a6a6a;"></div>
<div class="a" style="left:723.33px;top:708.40px;width:1.00px;height:1.40px;background:#6a6a6a;"></div>
<div class="a" style="left:735.77px;top:708.40px;width:1.00px;height:1.40px;background:#6a6a6a;"></div>
<div class="a" style="left:748.21px;top:708.40px;width:1.00px;height:1.40px;background:#6a6a6a;"></div>
<div class="a" style="left:760.65px;top:708.40px;width:1.00px;height:1.40px;background:#6a6a6a;"></div>
<svg style="left:772.99px;top:708.4px" width="3" height="8"><path d="M0.5 0V5.4H2" stroke="#8c8c8c" stroke-width="0.9" fill="none"/></svg>
<div class="t" style="top:709.00px;font-size:8.3px;color:#d8d8d8;font-weight:normal;-webkit-text-stroke:0.1px #d8d8d8;left:776.49px;letter-spacing:-0.15px;">5:00</div>
<div class="a" style="left:785.53px;top:708.40px;width:1.00px;height:1.40px;background:#6a6a6a;"></div>
<div class="a" style="left:797.97px;top:708.40px;width:1.00px;height:1.40px;background:#6a6a6a;"></div>
<div class="a" style="left:810.41px;top:708.40px;width:1.00px;height:1.40px;background:#6a6a6a;"></div>
<div class="a" style="left:822.85px;top:708.40px;width:1.00px;height:1.40px;background:#6a6a6a;"></div>
<div class="a" style="left:835.29px;top:708.40px;width:1.00px;height:1.40px;background:#6a6a6a;"></div>
<svg style="left:847.63px;top:708.4px" width="3" height="8"><path d="M0.5 0V5.4H2" stroke="#8c8c8c" stroke-width="0.9" fill="none"/></svg>
<div class="t" style="top:709.00px;font-size:8.3px;color:#d8d8d8;font-weight:normal;-webkit-text-stroke:0.1px #d8d8d8;left:851.13px;letter-spacing:-0.15px;">5:30</div>
<div class="a" style="left:860.17px;top:708.40px;width:1.00px;height:1.40px;background:#6a6a6a;"></div>
<div class="a" style="left:872.61px;top:708.40px;width:1.00px;height:1.40px;background:#6a6a6a;"></div>
<div class="t" style="top:694.00px;font-size:13px;color:#262626;font-weight:bold;left:850.40px;letter-spacing:0.3px;">2/1</div></body></html>
